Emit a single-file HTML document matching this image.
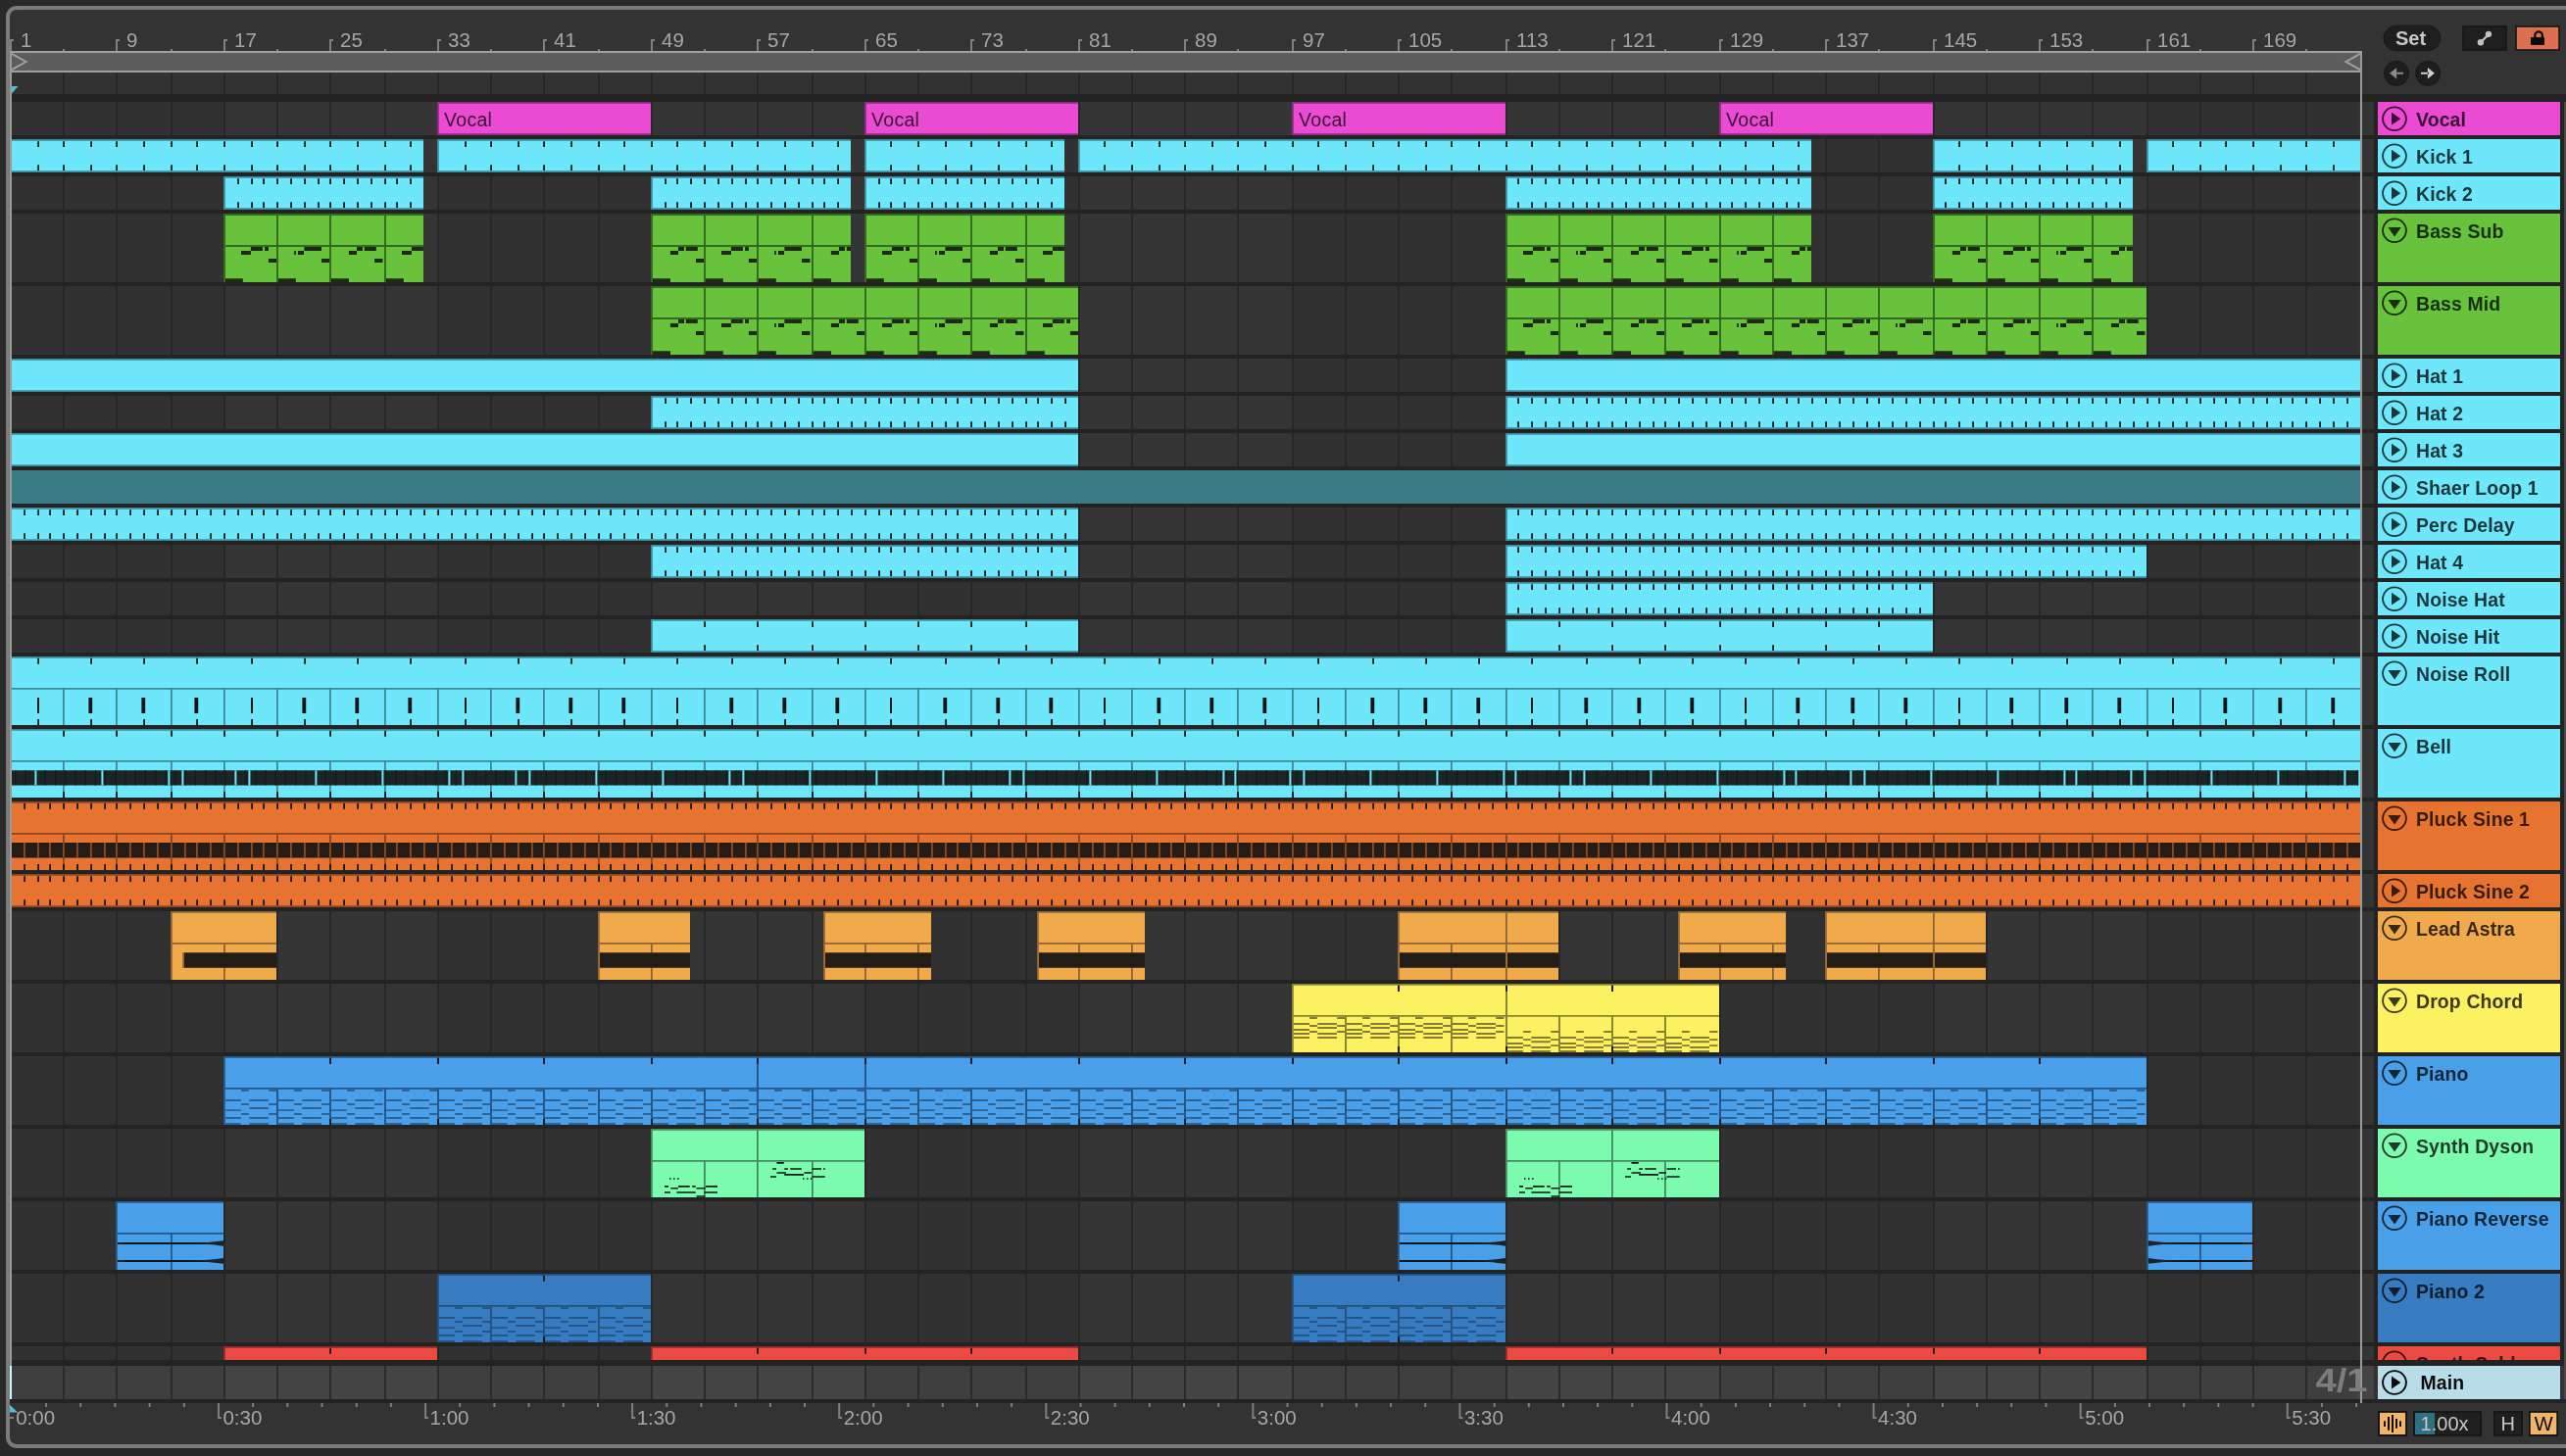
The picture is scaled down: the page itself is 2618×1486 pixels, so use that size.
<!DOCTYPE html>
<html><head><meta charset="utf-8"><style>
html,body{margin:0;padding:0;background:#292929;width:2618px;height:1486px;overflow:hidden;}
svg{display:block;will-change:transform;}

text{font-family:"Liberation Sans",sans-serif;}
.rn{font-size:20.5px;fill:#a6a6a6;}
.cn{font-size:19.5px;fill:#3a1034;letter-spacing:0.3px;}
.hn{font-size:19.4px;font-weight:bold;letter-spacing:0.15px;}
.sig{font-size:32.5px;font-weight:bold;fill:#7d7d7d;}
.btn{font-size:20px;font-weight:bold;fill:#c8c8c8;}
.ctl{font-size:20px;fill:#c8c8c8;}

</style></head><body>
<svg width="2618" height="1486" viewBox="0 0 2618 1486">
<rect x="0" y="0" width="2618" height="1486" fill="#292929"/>
<rect x="6" y="6" width="2700" height="1472" rx="11" ry="11" fill="#7b7b7b"/>
<rect x="10" y="10" width="2700" height="1464" rx="7" ry="7" fill="#333333"/>
<path fill="#808080" d="M10 40h2v12h-2zM10 40h4v2h-4zM64 50h2v2h-2zM118 40h2v12h-2zM118 40h4v2h-4zM174 50h2v2h-2zM228 40h2v12h-2zM228 40h4v2h-4zM282 50h2v2h-2zM336 40h2v12h-2zM336 40h4v2h-4zM392 50h2v2h-2zM446 40h2v12h-2zM446 40h4v2h-4zM500 50h2v2h-2zM554 40h2v12h-2zM554 40h4v2h-4zM610 50h2v2h-2zM664 40h2v12h-2zM664 40h4v2h-4zM718 50h2v2h-2zM772 40h2v12h-2zM772 40h4v2h-4zM828 50h2v2h-2zM882 40h2v12h-2zM882 40h4v2h-4zM936 50h2v2h-2zM990 40h2v12h-2zM990 40h4v2h-4zM1046 50h2v2h-2zM1100 40h2v12h-2zM1100 40h4v2h-4zM1154 50h2v2h-2zM1208 40h2v12h-2zM1208 40h4v2h-4zM1262 50h2v2h-2zM1318 40h2v12h-2zM1318 40h4v2h-4zM1372 50h2v2h-2zM1426 40h2v12h-2zM1426 40h4v2h-4zM1480 50h2v2h-2zM1536 40h2v12h-2zM1536 40h4v2h-4zM1590 50h2v2h-2zM1644 40h2v12h-2zM1644 40h4v2h-4zM1698 50h2v2h-2zM1754 40h2v12h-2zM1754 40h4v2h-4zM1808 50h2v2h-2zM1862 40h2v12h-2zM1862 40h4v2h-4zM1916 50h2v2h-2zM1972 40h2v12h-2zM1972 40h4v2h-4zM2026 50h2v2h-2zM2080 40h2v12h-2zM2080 40h4v2h-4zM2134 50h2v2h-2zM2190 40h2v12h-2zM2190 40h4v2h-4zM2244 50h2v2h-2zM2298 40h2v12h-2zM2298 40h4v2h-4zM2352 50h2v2h-2z"/>
<text x="21" y="48.4" class="rn">1</text>
<text x="129" y="48.4" class="rn">9</text>
<text x="239" y="48.4" class="rn">17</text>
<text x="347" y="48.4" class="rn">25</text>
<text x="457" y="48.4" class="rn">33</text>
<text x="565" y="48.4" class="rn">41</text>
<text x="675" y="48.4" class="rn">49</text>
<text x="783" y="48.4" class="rn">57</text>
<text x="893" y="48.4" class="rn">65</text>
<text x="1001" y="48.4" class="rn">73</text>
<text x="1111" y="48.4" class="rn">81</text>
<text x="1219" y="48.4" class="rn">89</text>
<text x="1329" y="48.4" class="rn">97</text>
<text x="1437" y="48.4" class="rn">105</text>
<text x="1547" y="48.4" class="rn">113</text>
<text x="1655" y="48.4" class="rn">121</text>
<text x="1765" y="48.4" class="rn">129</text>
<text x="1873" y="48.4" class="rn">137</text>
<text x="1983" y="48.4" class="rn">145</text>
<text x="2091" y="48.4" class="rn">153</text>
<text x="2201" y="48.4" class="rn">161</text>
<text x="2309" y="48.4" class="rn">169</text>
<path fill="#5d5d5d" d="M10 52h2400v22h-2400z"/>
<path fill="#a0a0a0" d="M10 52h2400v2h-2400zM10 72h2400v2h-2400z"/>
<path d="M12 54.8L26.5 63L12 71.2" fill="none" stroke="#a0a0a0" stroke-width="2"/>
<path d="M2408 54.8L2393.5 63L2408 71.2" fill="none" stroke="#a0a0a0" stroke-width="2"/>
<path fill="#323232" d="M12 74h2398v22h-2398z"/>
<path fill="#262626" d="M64 74h2v22h-2zM118 74h2v22h-2zM174 74h2v22h-2zM228 74h2v22h-2zM282 74h2v22h-2zM336 74h2v22h-2zM392 74h2v22h-2zM446 74h2v22h-2zM500 74h2v22h-2zM554 74h2v22h-2zM610 74h2v22h-2zM664 74h2v22h-2zM718 74h2v22h-2zM772 74h2v22h-2zM828 74h2v22h-2zM882 74h2v22h-2zM936 74h2v22h-2zM990 74h2v22h-2zM1046 74h2v22h-2zM1100 74h2v22h-2zM1154 74h2v22h-2zM1208 74h2v22h-2zM1262 74h2v22h-2zM1318 74h2v22h-2zM1372 74h2v22h-2zM1426 74h2v22h-2zM1480 74h2v22h-2zM1536 74h2v22h-2zM1590 74h2v22h-2zM1644 74h2v22h-2zM1698 74h2v22h-2zM1754 74h2v22h-2zM1808 74h2v22h-2zM1862 74h2v22h-2zM1916 74h2v22h-2zM1972 74h2v22h-2zM2026 74h2v22h-2zM2080 74h2v22h-2zM2134 74h2v22h-2zM2190 74h2v22h-2zM2244 74h2v22h-2zM2298 74h2v22h-2zM2352 74h2v22h-2z"/>
<path d="M12 88H18.5L12 95.5z" fill="#4cc0d8"/>
<path fill="#232323" d="M10 96h2608v8h-2608zM10 104h2608v1284h-2608z"/>
<path fill="#313131" d="M12 104h216v34h-216zM446 104h218v34h-218zM882 104h218v34h-218zM1318 104h218v34h-218zM1754 104h218v34h-218zM2190 104h216v34h-216zM12 142h216v34h-216zM446 142h218v34h-218zM882 142h218v34h-218zM1318 142h218v34h-218zM1754 142h218v34h-218zM2190 142h216v34h-216zM12 180h216v34h-216zM446 180h218v34h-218zM882 180h218v34h-218zM1318 180h218v34h-218zM1754 180h218v34h-218zM2190 180h216v34h-216zM12 218h216v70h-216zM446 218h218v70h-218zM882 218h218v70h-218zM1318 218h218v70h-218zM1754 218h218v70h-218zM2190 218h216v70h-216zM12 292h216v70h-216zM446 292h218v70h-218zM882 292h218v70h-218zM1318 292h218v70h-218zM1754 292h218v70h-218zM2190 292h216v70h-216zM12 366h216v34h-216zM446 366h218v34h-218zM882 366h218v34h-218zM1318 366h218v34h-218zM1754 366h218v34h-218zM2190 366h216v34h-216zM12 404h216v34h-216zM446 404h218v34h-218zM882 404h218v34h-218zM1318 404h218v34h-218zM1754 404h218v34h-218zM2190 404h216v34h-216zM12 442h216v34h-216zM446 442h218v34h-218zM882 442h218v34h-218zM1318 442h218v34h-218zM1754 442h218v34h-218zM2190 442h216v34h-216zM12 480h216v34h-216zM446 480h218v34h-218zM882 480h218v34h-218zM1318 480h218v34h-218zM1754 480h218v34h-218zM2190 480h216v34h-216zM12 518h216v34h-216zM446 518h218v34h-218zM882 518h218v34h-218zM1318 518h218v34h-218zM1754 518h218v34h-218zM2190 518h216v34h-216zM12 556h216v34h-216zM446 556h218v34h-218zM882 556h218v34h-218zM1318 556h218v34h-218zM1754 556h218v34h-218zM2190 556h216v34h-216zM12 594h216v34h-216zM446 594h218v34h-218zM882 594h218v34h-218zM1318 594h218v34h-218zM1754 594h218v34h-218zM2190 594h216v34h-216zM12 632h216v34h-216zM446 632h218v34h-218zM882 632h218v34h-218zM1318 632h218v34h-218zM1754 632h218v34h-218zM2190 632h216v34h-216zM12 670h216v70h-216zM446 670h218v70h-218zM882 670h218v70h-218zM1318 670h218v70h-218zM1754 670h218v70h-218zM2190 670h216v70h-216zM12 744h216v70h-216zM446 744h218v70h-218zM882 744h218v70h-218zM1318 744h218v70h-218zM1754 744h218v70h-218zM2190 744h216v70h-216zM12 818h216v70h-216zM446 818h218v70h-218zM882 818h218v70h-218zM1318 818h218v70h-218zM1754 818h218v70h-218zM2190 818h216v70h-216zM12 892h216v34h-216zM446 892h218v34h-218zM882 892h218v34h-218zM1318 892h218v34h-218zM1754 892h218v34h-218zM2190 892h216v34h-216zM12 930h216v70h-216zM446 930h218v70h-218zM882 930h218v70h-218zM1318 930h218v70h-218zM1754 930h218v70h-218zM2190 930h216v70h-216zM12 1004h216v70h-216zM446 1004h218v70h-218zM882 1004h218v70h-218zM1318 1004h218v70h-218zM1754 1004h218v70h-218zM2190 1004h216v70h-216zM12 1078h216v70h-216zM446 1078h218v70h-218zM882 1078h218v70h-218zM1318 1078h218v70h-218zM1754 1078h218v70h-218zM2190 1078h216v70h-216zM12 1152h216v70h-216zM446 1152h218v70h-218zM882 1152h218v70h-218zM1318 1152h218v70h-218zM1754 1152h218v70h-218zM2190 1152h216v70h-216zM12 1226h216v70h-216zM446 1226h218v70h-218zM882 1226h218v70h-218zM1318 1226h218v70h-218zM1754 1226h218v70h-218zM2190 1226h216v70h-216zM12 1300h216v70h-216zM446 1300h218v70h-218zM882 1300h218v70h-218zM1318 1300h218v70h-218zM1754 1300h218v70h-218zM2190 1300h216v70h-216zM12 1374h216v14h-216zM446 1374h218v14h-218zM882 1374h218v14h-218zM1318 1374h218v14h-218zM1754 1374h218v14h-218zM2190 1374h216v14h-216z"/>
<path fill="#353535" d="M228 104h218v34h-218zM664 104h218v34h-218zM1100 104h218v34h-218zM1536 104h218v34h-218zM1972 104h218v34h-218zM2406 104h16v34h-16zM228 142h218v34h-218zM664 142h218v34h-218zM1100 142h218v34h-218zM1536 142h218v34h-218zM1972 142h218v34h-218zM2406 142h16v34h-16zM228 180h218v34h-218zM664 180h218v34h-218zM1100 180h218v34h-218zM1536 180h218v34h-218zM1972 180h218v34h-218zM2406 180h16v34h-16zM228 218h218v70h-218zM664 218h218v70h-218zM1100 218h218v70h-218zM1536 218h218v70h-218zM1972 218h218v70h-218zM2406 218h16v70h-16zM228 292h218v70h-218zM664 292h218v70h-218zM1100 292h218v70h-218zM1536 292h218v70h-218zM1972 292h218v70h-218zM2406 292h16v70h-16zM228 366h218v34h-218zM664 366h218v34h-218zM1100 366h218v34h-218zM1536 366h218v34h-218zM1972 366h218v34h-218zM2406 366h16v34h-16zM228 404h218v34h-218zM664 404h218v34h-218zM1100 404h218v34h-218zM1536 404h218v34h-218zM1972 404h218v34h-218zM2406 404h16v34h-16zM228 442h218v34h-218zM664 442h218v34h-218zM1100 442h218v34h-218zM1536 442h218v34h-218zM1972 442h218v34h-218zM2406 442h16v34h-16zM228 480h218v34h-218zM664 480h218v34h-218zM1100 480h218v34h-218zM1536 480h218v34h-218zM1972 480h218v34h-218zM2406 480h16v34h-16zM228 518h218v34h-218zM664 518h218v34h-218zM1100 518h218v34h-218zM1536 518h218v34h-218zM1972 518h218v34h-218zM2406 518h16v34h-16zM228 556h218v34h-218zM664 556h218v34h-218zM1100 556h218v34h-218zM1536 556h218v34h-218zM1972 556h218v34h-218zM2406 556h16v34h-16zM228 594h218v34h-218zM664 594h218v34h-218zM1100 594h218v34h-218zM1536 594h218v34h-218zM1972 594h218v34h-218zM2406 594h16v34h-16zM228 632h218v34h-218zM664 632h218v34h-218zM1100 632h218v34h-218zM1536 632h218v34h-218zM1972 632h218v34h-218zM2406 632h16v34h-16zM228 670h218v70h-218zM664 670h218v70h-218zM1100 670h218v70h-218zM1536 670h218v70h-218zM1972 670h218v70h-218zM2406 670h16v70h-16zM228 744h218v70h-218zM664 744h218v70h-218zM1100 744h218v70h-218zM1536 744h218v70h-218zM1972 744h218v70h-218zM2406 744h16v70h-16zM228 818h218v70h-218zM664 818h218v70h-218zM1100 818h218v70h-218zM1536 818h218v70h-218zM1972 818h218v70h-218zM2406 818h16v70h-16zM228 892h218v34h-218zM664 892h218v34h-218zM1100 892h218v34h-218zM1536 892h218v34h-218zM1972 892h218v34h-218zM2406 892h16v34h-16zM228 930h218v70h-218zM664 930h218v70h-218zM1100 930h218v70h-218zM1536 930h218v70h-218zM1972 930h218v70h-218zM2406 930h16v70h-16zM228 1004h218v70h-218zM664 1004h218v70h-218zM1100 1004h218v70h-218zM1536 1004h218v70h-218zM1972 1004h218v70h-218zM2406 1004h16v70h-16zM228 1078h218v70h-218zM664 1078h218v70h-218zM1100 1078h218v70h-218zM1536 1078h218v70h-218zM1972 1078h218v70h-218zM2406 1078h16v70h-16zM228 1152h218v70h-218zM664 1152h218v70h-218zM1100 1152h218v70h-218zM1536 1152h218v70h-218zM1972 1152h218v70h-218zM2406 1152h16v70h-16zM228 1226h218v70h-218zM664 1226h218v70h-218zM1100 1226h218v70h-218zM1536 1226h218v70h-218zM1972 1226h218v70h-218zM2406 1226h16v70h-16zM228 1300h218v70h-218zM664 1300h218v70h-218zM1100 1300h218v70h-218zM1536 1300h218v70h-218zM1972 1300h218v70h-218zM2406 1300h16v70h-16zM228 1374h218v14h-218zM664 1374h218v14h-218zM1100 1374h218v14h-218zM1536 1374h218v14h-218zM1972 1374h218v14h-218zM2406 1374h16v14h-16z"/>
<path fill="#262626" d="M64 104h2v34h-2zM118 104h2v34h-2zM174 104h2v34h-2zM228 104h2v34h-2zM282 104h2v34h-2zM336 104h2v34h-2zM392 104h2v34h-2zM446 104h2v34h-2zM500 104h2v34h-2zM554 104h2v34h-2zM610 104h2v34h-2zM664 104h2v34h-2zM718 104h2v34h-2zM772 104h2v34h-2zM828 104h2v34h-2zM882 104h2v34h-2zM936 104h2v34h-2zM990 104h2v34h-2zM1046 104h2v34h-2zM1100 104h2v34h-2zM1154 104h2v34h-2zM1208 104h2v34h-2zM1262 104h2v34h-2zM1318 104h2v34h-2zM1372 104h2v34h-2zM1426 104h2v34h-2zM1480 104h2v34h-2zM1536 104h2v34h-2zM1590 104h2v34h-2zM1644 104h2v34h-2zM1698 104h2v34h-2zM1754 104h2v34h-2zM1808 104h2v34h-2zM1862 104h2v34h-2zM1916 104h2v34h-2zM1972 104h2v34h-2zM2026 104h2v34h-2zM2080 104h2v34h-2zM2134 104h2v34h-2zM2190 104h2v34h-2zM2244 104h2v34h-2zM2298 104h2v34h-2zM2352 104h2v34h-2zM64 142h2v34h-2zM118 142h2v34h-2zM174 142h2v34h-2zM228 142h2v34h-2zM282 142h2v34h-2zM336 142h2v34h-2zM392 142h2v34h-2zM446 142h2v34h-2zM500 142h2v34h-2zM554 142h2v34h-2zM610 142h2v34h-2zM664 142h2v34h-2zM718 142h2v34h-2zM772 142h2v34h-2zM828 142h2v34h-2zM882 142h2v34h-2zM936 142h2v34h-2zM990 142h2v34h-2zM1046 142h2v34h-2zM1100 142h2v34h-2zM1154 142h2v34h-2zM1208 142h2v34h-2zM1262 142h2v34h-2zM1318 142h2v34h-2zM1372 142h2v34h-2zM1426 142h2v34h-2zM1480 142h2v34h-2zM1536 142h2v34h-2zM1590 142h2v34h-2zM1644 142h2v34h-2zM1698 142h2v34h-2zM1754 142h2v34h-2zM1808 142h2v34h-2zM1862 142h2v34h-2zM1916 142h2v34h-2zM1972 142h2v34h-2zM2026 142h2v34h-2zM2080 142h2v34h-2zM2134 142h2v34h-2zM2190 142h2v34h-2zM2244 142h2v34h-2zM2298 142h2v34h-2zM2352 142h2v34h-2zM64 180h2v34h-2zM118 180h2v34h-2zM174 180h2v34h-2zM228 180h2v34h-2zM282 180h2v34h-2zM336 180h2v34h-2zM392 180h2v34h-2zM446 180h2v34h-2zM500 180h2v34h-2zM554 180h2v34h-2zM610 180h2v34h-2zM664 180h2v34h-2zM718 180h2v34h-2zM772 180h2v34h-2zM828 180h2v34h-2zM882 180h2v34h-2zM936 180h2v34h-2zM990 180h2v34h-2zM1046 180h2v34h-2zM1100 180h2v34h-2zM1154 180h2v34h-2zM1208 180h2v34h-2zM1262 180h2v34h-2zM1318 180h2v34h-2zM1372 180h2v34h-2zM1426 180h2v34h-2zM1480 180h2v34h-2zM1536 180h2v34h-2zM1590 180h2v34h-2zM1644 180h2v34h-2zM1698 180h2v34h-2zM1754 180h2v34h-2zM1808 180h2v34h-2zM1862 180h2v34h-2zM1916 180h2v34h-2zM1972 180h2v34h-2zM2026 180h2v34h-2zM2080 180h2v34h-2zM2134 180h2v34h-2zM2190 180h2v34h-2zM2244 180h2v34h-2zM2298 180h2v34h-2zM2352 180h2v34h-2zM64 218h2v70h-2zM118 218h2v70h-2zM174 218h2v70h-2zM228 218h2v70h-2zM282 218h2v70h-2zM336 218h2v70h-2zM392 218h2v70h-2zM446 218h2v70h-2zM500 218h2v70h-2zM554 218h2v70h-2zM610 218h2v70h-2zM664 218h2v70h-2zM718 218h2v70h-2zM772 218h2v70h-2zM828 218h2v70h-2zM882 218h2v70h-2zM936 218h2v70h-2zM990 218h2v70h-2zM1046 218h2v70h-2zM1100 218h2v70h-2zM1154 218h2v70h-2zM1208 218h2v70h-2zM1262 218h2v70h-2zM1318 218h2v70h-2zM1372 218h2v70h-2zM1426 218h2v70h-2zM1480 218h2v70h-2zM1536 218h2v70h-2zM1590 218h2v70h-2zM1644 218h2v70h-2zM1698 218h2v70h-2zM1754 218h2v70h-2zM1808 218h2v70h-2zM1862 218h2v70h-2zM1916 218h2v70h-2zM1972 218h2v70h-2zM2026 218h2v70h-2zM2080 218h2v70h-2zM2134 218h2v70h-2zM2190 218h2v70h-2zM2244 218h2v70h-2zM2298 218h2v70h-2zM2352 218h2v70h-2zM64 292h2v70h-2zM118 292h2v70h-2zM174 292h2v70h-2zM228 292h2v70h-2zM282 292h2v70h-2zM336 292h2v70h-2zM392 292h2v70h-2zM446 292h2v70h-2zM500 292h2v70h-2zM554 292h2v70h-2zM610 292h2v70h-2zM664 292h2v70h-2zM718 292h2v70h-2zM772 292h2v70h-2zM828 292h2v70h-2zM882 292h2v70h-2zM936 292h2v70h-2zM990 292h2v70h-2zM1046 292h2v70h-2zM1100 292h2v70h-2zM1154 292h2v70h-2zM1208 292h2v70h-2zM1262 292h2v70h-2zM1318 292h2v70h-2zM1372 292h2v70h-2zM1426 292h2v70h-2zM1480 292h2v70h-2zM1536 292h2v70h-2zM1590 292h2v70h-2zM1644 292h2v70h-2zM1698 292h2v70h-2zM1754 292h2v70h-2zM1808 292h2v70h-2zM1862 292h2v70h-2zM1916 292h2v70h-2zM1972 292h2v70h-2zM2026 292h2v70h-2zM2080 292h2v70h-2zM2134 292h2v70h-2zM2190 292h2v70h-2zM2244 292h2v70h-2zM2298 292h2v70h-2zM2352 292h2v70h-2zM64 366h2v34h-2zM118 366h2v34h-2zM174 366h2v34h-2zM228 366h2v34h-2zM282 366h2v34h-2zM336 366h2v34h-2zM392 366h2v34h-2zM446 366h2v34h-2zM500 366h2v34h-2zM554 366h2v34h-2zM610 366h2v34h-2zM664 366h2v34h-2zM718 366h2v34h-2zM772 366h2v34h-2zM828 366h2v34h-2zM882 366h2v34h-2zM936 366h2v34h-2zM990 366h2v34h-2zM1046 366h2v34h-2zM1100 366h2v34h-2zM1154 366h2v34h-2zM1208 366h2v34h-2zM1262 366h2v34h-2zM1318 366h2v34h-2zM1372 366h2v34h-2zM1426 366h2v34h-2zM1480 366h2v34h-2zM1536 366h2v34h-2zM1590 366h2v34h-2zM1644 366h2v34h-2zM1698 366h2v34h-2zM1754 366h2v34h-2zM1808 366h2v34h-2zM1862 366h2v34h-2zM1916 366h2v34h-2zM1972 366h2v34h-2zM2026 366h2v34h-2zM2080 366h2v34h-2zM2134 366h2v34h-2zM2190 366h2v34h-2zM2244 366h2v34h-2zM2298 366h2v34h-2zM2352 366h2v34h-2zM64 404h2v34h-2zM118 404h2v34h-2zM174 404h2v34h-2zM228 404h2v34h-2zM282 404h2v34h-2zM336 404h2v34h-2zM392 404h2v34h-2zM446 404h2v34h-2zM500 404h2v34h-2zM554 404h2v34h-2zM610 404h2v34h-2zM664 404h2v34h-2zM718 404h2v34h-2zM772 404h2v34h-2zM828 404h2v34h-2zM882 404h2v34h-2zM936 404h2v34h-2zM990 404h2v34h-2zM1046 404h2v34h-2zM1100 404h2v34h-2zM1154 404h2v34h-2zM1208 404h2v34h-2zM1262 404h2v34h-2zM1318 404h2v34h-2zM1372 404h2v34h-2zM1426 404h2v34h-2zM1480 404h2v34h-2zM1536 404h2v34h-2zM1590 404h2v34h-2zM1644 404h2v34h-2zM1698 404h2v34h-2zM1754 404h2v34h-2zM1808 404h2v34h-2zM1862 404h2v34h-2zM1916 404h2v34h-2zM1972 404h2v34h-2zM2026 404h2v34h-2zM2080 404h2v34h-2zM2134 404h2v34h-2zM2190 404h2v34h-2zM2244 404h2v34h-2zM2298 404h2v34h-2zM2352 404h2v34h-2zM64 442h2v34h-2zM118 442h2v34h-2zM174 442h2v34h-2zM228 442h2v34h-2zM282 442h2v34h-2zM336 442h2v34h-2zM392 442h2v34h-2zM446 442h2v34h-2zM500 442h2v34h-2zM554 442h2v34h-2zM610 442h2v34h-2zM664 442h2v34h-2zM718 442h2v34h-2zM772 442h2v34h-2zM828 442h2v34h-2zM882 442h2v34h-2zM936 442h2v34h-2zM990 442h2v34h-2zM1046 442h2v34h-2zM1100 442h2v34h-2zM1154 442h2v34h-2zM1208 442h2v34h-2zM1262 442h2v34h-2zM1318 442h2v34h-2zM1372 442h2v34h-2zM1426 442h2v34h-2zM1480 442h2v34h-2zM1536 442h2v34h-2zM1590 442h2v34h-2zM1644 442h2v34h-2zM1698 442h2v34h-2zM1754 442h2v34h-2zM1808 442h2v34h-2zM1862 442h2v34h-2zM1916 442h2v34h-2zM1972 442h2v34h-2zM2026 442h2v34h-2zM2080 442h2v34h-2zM2134 442h2v34h-2zM2190 442h2v34h-2zM2244 442h2v34h-2zM2298 442h2v34h-2zM2352 442h2v34h-2zM64 480h2v34h-2zM118 480h2v34h-2zM174 480h2v34h-2zM228 480h2v34h-2zM282 480h2v34h-2zM336 480h2v34h-2zM392 480h2v34h-2zM446 480h2v34h-2zM500 480h2v34h-2zM554 480h2v34h-2zM610 480h2v34h-2zM664 480h2v34h-2zM718 480h2v34h-2zM772 480h2v34h-2zM828 480h2v34h-2zM882 480h2v34h-2zM936 480h2v34h-2zM990 480h2v34h-2zM1046 480h2v34h-2zM1100 480h2v34h-2zM1154 480h2v34h-2zM1208 480h2v34h-2zM1262 480h2v34h-2zM1318 480h2v34h-2zM1372 480h2v34h-2zM1426 480h2v34h-2zM1480 480h2v34h-2zM1536 480h2v34h-2zM1590 480h2v34h-2zM1644 480h2v34h-2zM1698 480h2v34h-2zM1754 480h2v34h-2zM1808 480h2v34h-2zM1862 480h2v34h-2zM1916 480h2v34h-2zM1972 480h2v34h-2zM2026 480h2v34h-2zM2080 480h2v34h-2zM2134 480h2v34h-2zM2190 480h2v34h-2zM2244 480h2v34h-2zM2298 480h2v34h-2zM2352 480h2v34h-2zM64 518h2v34h-2zM118 518h2v34h-2zM174 518h2v34h-2zM228 518h2v34h-2zM282 518h2v34h-2zM336 518h2v34h-2zM392 518h2v34h-2zM446 518h2v34h-2zM500 518h2v34h-2zM554 518h2v34h-2zM610 518h2v34h-2zM664 518h2v34h-2zM718 518h2v34h-2zM772 518h2v34h-2zM828 518h2v34h-2zM882 518h2v34h-2zM936 518h2v34h-2zM990 518h2v34h-2zM1046 518h2v34h-2zM1100 518h2v34h-2zM1154 518h2v34h-2zM1208 518h2v34h-2zM1262 518h2v34h-2zM1318 518h2v34h-2zM1372 518h2v34h-2zM1426 518h2v34h-2zM1480 518h2v34h-2zM1536 518h2v34h-2zM1590 518h2v34h-2zM1644 518h2v34h-2zM1698 518h2v34h-2zM1754 518h2v34h-2zM1808 518h2v34h-2zM1862 518h2v34h-2zM1916 518h2v34h-2zM1972 518h2v34h-2zM2026 518h2v34h-2zM2080 518h2v34h-2zM2134 518h2v34h-2zM2190 518h2v34h-2zM2244 518h2v34h-2zM2298 518h2v34h-2zM2352 518h2v34h-2zM64 556h2v34h-2zM118 556h2v34h-2zM174 556h2v34h-2zM228 556h2v34h-2zM282 556h2v34h-2zM336 556h2v34h-2zM392 556h2v34h-2zM446 556h2v34h-2zM500 556h2v34h-2zM554 556h2v34h-2zM610 556h2v34h-2zM664 556h2v34h-2zM718 556h2v34h-2zM772 556h2v34h-2zM828 556h2v34h-2zM882 556h2v34h-2zM936 556h2v34h-2zM990 556h2v34h-2zM1046 556h2v34h-2zM1100 556h2v34h-2zM1154 556h2v34h-2zM1208 556h2v34h-2zM1262 556h2v34h-2zM1318 556h2v34h-2zM1372 556h2v34h-2zM1426 556h2v34h-2zM1480 556h2v34h-2zM1536 556h2v34h-2zM1590 556h2v34h-2zM1644 556h2v34h-2zM1698 556h2v34h-2zM1754 556h2v34h-2zM1808 556h2v34h-2zM1862 556h2v34h-2zM1916 556h2v34h-2zM1972 556h2v34h-2zM2026 556h2v34h-2zM2080 556h2v34h-2zM2134 556h2v34h-2zM2190 556h2v34h-2zM2244 556h2v34h-2zM2298 556h2v34h-2zM2352 556h2v34h-2zM64 594h2v34h-2zM118 594h2v34h-2zM174 594h2v34h-2zM228 594h2v34h-2zM282 594h2v34h-2zM336 594h2v34h-2zM392 594h2v34h-2zM446 594h2v34h-2zM500 594h2v34h-2zM554 594h2v34h-2zM610 594h2v34h-2zM664 594h2v34h-2zM718 594h2v34h-2zM772 594h2v34h-2zM828 594h2v34h-2zM882 594h2v34h-2zM936 594h2v34h-2zM990 594h2v34h-2zM1046 594h2v34h-2zM1100 594h2v34h-2zM1154 594h2v34h-2zM1208 594h2v34h-2zM1262 594h2v34h-2zM1318 594h2v34h-2zM1372 594h2v34h-2zM1426 594h2v34h-2zM1480 594h2v34h-2zM1536 594h2v34h-2zM1590 594h2v34h-2zM1644 594h2v34h-2zM1698 594h2v34h-2zM1754 594h2v34h-2zM1808 594h2v34h-2zM1862 594h2v34h-2zM1916 594h2v34h-2zM1972 594h2v34h-2zM2026 594h2v34h-2zM2080 594h2v34h-2zM2134 594h2v34h-2zM2190 594h2v34h-2zM2244 594h2v34h-2zM2298 594h2v34h-2zM2352 594h2v34h-2zM64 632h2v34h-2zM118 632h2v34h-2zM174 632h2v34h-2zM228 632h2v34h-2zM282 632h2v34h-2zM336 632h2v34h-2zM392 632h2v34h-2zM446 632h2v34h-2zM500 632h2v34h-2zM554 632h2v34h-2zM610 632h2v34h-2zM664 632h2v34h-2zM718 632h2v34h-2zM772 632h2v34h-2zM828 632h2v34h-2zM882 632h2v34h-2zM936 632h2v34h-2zM990 632h2v34h-2zM1046 632h2v34h-2zM1100 632h2v34h-2zM1154 632h2v34h-2zM1208 632h2v34h-2zM1262 632h2v34h-2zM1318 632h2v34h-2zM1372 632h2v34h-2zM1426 632h2v34h-2zM1480 632h2v34h-2zM1536 632h2v34h-2zM1590 632h2v34h-2zM1644 632h2v34h-2zM1698 632h2v34h-2zM1754 632h2v34h-2zM1808 632h2v34h-2zM1862 632h2v34h-2zM1916 632h2v34h-2zM1972 632h2v34h-2zM2026 632h2v34h-2zM2080 632h2v34h-2zM2134 632h2v34h-2zM2190 632h2v34h-2zM2244 632h2v34h-2zM2298 632h2v34h-2zM2352 632h2v34h-2zM64 670h2v70h-2zM118 670h2v70h-2zM174 670h2v70h-2zM228 670h2v70h-2zM282 670h2v70h-2zM336 670h2v70h-2zM392 670h2v70h-2zM446 670h2v70h-2zM500 670h2v70h-2zM554 670h2v70h-2zM610 670h2v70h-2zM664 670h2v70h-2zM718 670h2v70h-2zM772 670h2v70h-2zM828 670h2v70h-2zM882 670h2v70h-2zM936 670h2v70h-2zM990 670h2v70h-2zM1046 670h2v70h-2zM1100 670h2v70h-2zM1154 670h2v70h-2zM1208 670h2v70h-2zM1262 670h2v70h-2zM1318 670h2v70h-2zM1372 670h2v70h-2zM1426 670h2v70h-2zM1480 670h2v70h-2zM1536 670h2v70h-2zM1590 670h2v70h-2zM1644 670h2v70h-2zM1698 670h2v70h-2zM1754 670h2v70h-2zM1808 670h2v70h-2zM1862 670h2v70h-2zM1916 670h2v70h-2zM1972 670h2v70h-2zM2026 670h2v70h-2zM2080 670h2v70h-2zM2134 670h2v70h-2zM2190 670h2v70h-2zM2244 670h2v70h-2zM2298 670h2v70h-2zM2352 670h2v70h-2zM64 744h2v70h-2zM118 744h2v70h-2zM174 744h2v70h-2zM228 744h2v70h-2zM282 744h2v70h-2zM336 744h2v70h-2zM392 744h2v70h-2zM446 744h2v70h-2zM500 744h2v70h-2zM554 744h2v70h-2zM610 744h2v70h-2zM664 744h2v70h-2zM718 744h2v70h-2zM772 744h2v70h-2zM828 744h2v70h-2zM882 744h2v70h-2zM936 744h2v70h-2zM990 744h2v70h-2zM1046 744h2v70h-2zM1100 744h2v70h-2zM1154 744h2v70h-2zM1208 744h2v70h-2zM1262 744h2v70h-2zM1318 744h2v70h-2zM1372 744h2v70h-2zM1426 744h2v70h-2zM1480 744h2v70h-2zM1536 744h2v70h-2zM1590 744h2v70h-2zM1644 744h2v70h-2zM1698 744h2v70h-2zM1754 744h2v70h-2zM1808 744h2v70h-2zM1862 744h2v70h-2zM1916 744h2v70h-2zM1972 744h2v70h-2zM2026 744h2v70h-2zM2080 744h2v70h-2zM2134 744h2v70h-2zM2190 744h2v70h-2zM2244 744h2v70h-2zM2298 744h2v70h-2zM2352 744h2v70h-2zM64 818h2v70h-2zM118 818h2v70h-2zM174 818h2v70h-2zM228 818h2v70h-2zM282 818h2v70h-2zM336 818h2v70h-2zM392 818h2v70h-2zM446 818h2v70h-2zM500 818h2v70h-2zM554 818h2v70h-2zM610 818h2v70h-2zM664 818h2v70h-2zM718 818h2v70h-2zM772 818h2v70h-2zM828 818h2v70h-2zM882 818h2v70h-2zM936 818h2v70h-2zM990 818h2v70h-2zM1046 818h2v70h-2zM1100 818h2v70h-2zM1154 818h2v70h-2zM1208 818h2v70h-2zM1262 818h2v70h-2zM1318 818h2v70h-2zM1372 818h2v70h-2zM1426 818h2v70h-2zM1480 818h2v70h-2zM1536 818h2v70h-2zM1590 818h2v70h-2zM1644 818h2v70h-2zM1698 818h2v70h-2zM1754 818h2v70h-2zM1808 818h2v70h-2zM1862 818h2v70h-2zM1916 818h2v70h-2zM1972 818h2v70h-2zM2026 818h2v70h-2zM2080 818h2v70h-2zM2134 818h2v70h-2zM2190 818h2v70h-2zM2244 818h2v70h-2zM2298 818h2v70h-2zM2352 818h2v70h-2zM64 892h2v34h-2zM118 892h2v34h-2zM174 892h2v34h-2zM228 892h2v34h-2zM282 892h2v34h-2zM336 892h2v34h-2zM392 892h2v34h-2zM446 892h2v34h-2zM500 892h2v34h-2zM554 892h2v34h-2zM610 892h2v34h-2zM664 892h2v34h-2zM718 892h2v34h-2zM772 892h2v34h-2zM828 892h2v34h-2zM882 892h2v34h-2zM936 892h2v34h-2zM990 892h2v34h-2zM1046 892h2v34h-2zM1100 892h2v34h-2zM1154 892h2v34h-2zM1208 892h2v34h-2zM1262 892h2v34h-2zM1318 892h2v34h-2zM1372 892h2v34h-2zM1426 892h2v34h-2zM1480 892h2v34h-2zM1536 892h2v34h-2zM1590 892h2v34h-2zM1644 892h2v34h-2zM1698 892h2v34h-2zM1754 892h2v34h-2zM1808 892h2v34h-2zM1862 892h2v34h-2zM1916 892h2v34h-2zM1972 892h2v34h-2zM2026 892h2v34h-2zM2080 892h2v34h-2zM2134 892h2v34h-2zM2190 892h2v34h-2zM2244 892h2v34h-2zM2298 892h2v34h-2zM2352 892h2v34h-2zM64 930h2v70h-2zM118 930h2v70h-2zM174 930h2v70h-2zM228 930h2v70h-2zM282 930h2v70h-2zM336 930h2v70h-2zM392 930h2v70h-2zM446 930h2v70h-2zM500 930h2v70h-2zM554 930h2v70h-2zM610 930h2v70h-2zM664 930h2v70h-2zM718 930h2v70h-2zM772 930h2v70h-2zM828 930h2v70h-2zM882 930h2v70h-2zM936 930h2v70h-2zM990 930h2v70h-2zM1046 930h2v70h-2zM1100 930h2v70h-2zM1154 930h2v70h-2zM1208 930h2v70h-2zM1262 930h2v70h-2zM1318 930h2v70h-2zM1372 930h2v70h-2zM1426 930h2v70h-2zM1480 930h2v70h-2zM1536 930h2v70h-2zM1590 930h2v70h-2zM1644 930h2v70h-2zM1698 930h2v70h-2zM1754 930h2v70h-2zM1808 930h2v70h-2zM1862 930h2v70h-2zM1916 930h2v70h-2zM1972 930h2v70h-2zM2026 930h2v70h-2zM2080 930h2v70h-2zM2134 930h2v70h-2zM2190 930h2v70h-2zM2244 930h2v70h-2zM2298 930h2v70h-2zM2352 930h2v70h-2zM64 1004h2v70h-2zM118 1004h2v70h-2zM174 1004h2v70h-2zM228 1004h2v70h-2zM282 1004h2v70h-2zM336 1004h2v70h-2zM392 1004h2v70h-2zM446 1004h2v70h-2zM500 1004h2v70h-2zM554 1004h2v70h-2zM610 1004h2v70h-2zM664 1004h2v70h-2zM718 1004h2v70h-2zM772 1004h2v70h-2zM828 1004h2v70h-2zM882 1004h2v70h-2zM936 1004h2v70h-2zM990 1004h2v70h-2zM1046 1004h2v70h-2zM1100 1004h2v70h-2zM1154 1004h2v70h-2zM1208 1004h2v70h-2zM1262 1004h2v70h-2zM1318 1004h2v70h-2zM1372 1004h2v70h-2zM1426 1004h2v70h-2zM1480 1004h2v70h-2zM1536 1004h2v70h-2zM1590 1004h2v70h-2zM1644 1004h2v70h-2zM1698 1004h2v70h-2zM1754 1004h2v70h-2zM1808 1004h2v70h-2zM1862 1004h2v70h-2zM1916 1004h2v70h-2zM1972 1004h2v70h-2zM2026 1004h2v70h-2zM2080 1004h2v70h-2zM2134 1004h2v70h-2zM2190 1004h2v70h-2zM2244 1004h2v70h-2zM2298 1004h2v70h-2zM2352 1004h2v70h-2zM64 1078h2v70h-2zM118 1078h2v70h-2zM174 1078h2v70h-2zM228 1078h2v70h-2zM282 1078h2v70h-2zM336 1078h2v70h-2zM392 1078h2v70h-2zM446 1078h2v70h-2zM500 1078h2v70h-2zM554 1078h2v70h-2zM610 1078h2v70h-2zM664 1078h2v70h-2zM718 1078h2v70h-2zM772 1078h2v70h-2zM828 1078h2v70h-2zM882 1078h2v70h-2zM936 1078h2v70h-2zM990 1078h2v70h-2zM1046 1078h2v70h-2zM1100 1078h2v70h-2zM1154 1078h2v70h-2zM1208 1078h2v70h-2zM1262 1078h2v70h-2zM1318 1078h2v70h-2zM1372 1078h2v70h-2zM1426 1078h2v70h-2zM1480 1078h2v70h-2zM1536 1078h2v70h-2zM1590 1078h2v70h-2zM1644 1078h2v70h-2zM1698 1078h2v70h-2zM1754 1078h2v70h-2zM1808 1078h2v70h-2zM1862 1078h2v70h-2zM1916 1078h2v70h-2zM1972 1078h2v70h-2zM2026 1078h2v70h-2zM2080 1078h2v70h-2zM2134 1078h2v70h-2zM2190 1078h2v70h-2zM2244 1078h2v70h-2zM2298 1078h2v70h-2zM2352 1078h2v70h-2zM64 1152h2v70h-2zM118 1152h2v70h-2zM174 1152h2v70h-2zM228 1152h2v70h-2zM282 1152h2v70h-2zM336 1152h2v70h-2zM392 1152h2v70h-2zM446 1152h2v70h-2zM500 1152h2v70h-2zM554 1152h2v70h-2zM610 1152h2v70h-2zM664 1152h2v70h-2zM718 1152h2v70h-2zM772 1152h2v70h-2zM828 1152h2v70h-2zM882 1152h2v70h-2zM936 1152h2v70h-2zM990 1152h2v70h-2zM1046 1152h2v70h-2zM1100 1152h2v70h-2zM1154 1152h2v70h-2zM1208 1152h2v70h-2zM1262 1152h2v70h-2zM1318 1152h2v70h-2zM1372 1152h2v70h-2zM1426 1152h2v70h-2zM1480 1152h2v70h-2zM1536 1152h2v70h-2zM1590 1152h2v70h-2zM1644 1152h2v70h-2zM1698 1152h2v70h-2zM1754 1152h2v70h-2zM1808 1152h2v70h-2zM1862 1152h2v70h-2zM1916 1152h2v70h-2zM1972 1152h2v70h-2zM2026 1152h2v70h-2zM2080 1152h2v70h-2zM2134 1152h2v70h-2zM2190 1152h2v70h-2zM2244 1152h2v70h-2zM2298 1152h2v70h-2zM2352 1152h2v70h-2zM64 1226h2v70h-2zM118 1226h2v70h-2zM174 1226h2v70h-2zM228 1226h2v70h-2zM282 1226h2v70h-2zM336 1226h2v70h-2zM392 1226h2v70h-2zM446 1226h2v70h-2zM500 1226h2v70h-2zM554 1226h2v70h-2zM610 1226h2v70h-2zM664 1226h2v70h-2zM718 1226h2v70h-2zM772 1226h2v70h-2zM828 1226h2v70h-2zM882 1226h2v70h-2zM936 1226h2v70h-2zM990 1226h2v70h-2zM1046 1226h2v70h-2zM1100 1226h2v70h-2zM1154 1226h2v70h-2zM1208 1226h2v70h-2zM1262 1226h2v70h-2zM1318 1226h2v70h-2zM1372 1226h2v70h-2zM1426 1226h2v70h-2zM1480 1226h2v70h-2zM1536 1226h2v70h-2zM1590 1226h2v70h-2zM1644 1226h2v70h-2zM1698 1226h2v70h-2zM1754 1226h2v70h-2zM1808 1226h2v70h-2zM1862 1226h2v70h-2zM1916 1226h2v70h-2zM1972 1226h2v70h-2zM2026 1226h2v70h-2zM2080 1226h2v70h-2zM2134 1226h2v70h-2zM2190 1226h2v70h-2zM2244 1226h2v70h-2zM2298 1226h2v70h-2zM2352 1226h2v70h-2zM64 1300h2v70h-2zM118 1300h2v70h-2zM174 1300h2v70h-2zM228 1300h2v70h-2zM282 1300h2v70h-2zM336 1300h2v70h-2zM392 1300h2v70h-2zM446 1300h2v70h-2zM500 1300h2v70h-2zM554 1300h2v70h-2zM610 1300h2v70h-2zM664 1300h2v70h-2zM718 1300h2v70h-2zM772 1300h2v70h-2zM828 1300h2v70h-2zM882 1300h2v70h-2zM936 1300h2v70h-2zM990 1300h2v70h-2zM1046 1300h2v70h-2zM1100 1300h2v70h-2zM1154 1300h2v70h-2zM1208 1300h2v70h-2zM1262 1300h2v70h-2zM1318 1300h2v70h-2zM1372 1300h2v70h-2zM1426 1300h2v70h-2zM1480 1300h2v70h-2zM1536 1300h2v70h-2zM1590 1300h2v70h-2zM1644 1300h2v70h-2zM1698 1300h2v70h-2zM1754 1300h2v70h-2zM1808 1300h2v70h-2zM1862 1300h2v70h-2zM1916 1300h2v70h-2zM1972 1300h2v70h-2zM2026 1300h2v70h-2zM2080 1300h2v70h-2zM2134 1300h2v70h-2zM2190 1300h2v70h-2zM2244 1300h2v70h-2zM2298 1300h2v70h-2zM2352 1300h2v70h-2zM64 1374h2v14h-2zM118 1374h2v14h-2zM174 1374h2v14h-2zM228 1374h2v14h-2zM282 1374h2v14h-2zM336 1374h2v14h-2zM392 1374h2v14h-2zM446 1374h2v14h-2zM500 1374h2v14h-2zM554 1374h2v14h-2zM610 1374h2v14h-2zM664 1374h2v14h-2zM718 1374h2v14h-2zM772 1374h2v14h-2zM828 1374h2v14h-2zM882 1374h2v14h-2zM936 1374h2v14h-2zM990 1374h2v14h-2zM1046 1374h2v14h-2zM1100 1374h2v14h-2zM1154 1374h2v14h-2zM1208 1374h2v14h-2zM1262 1374h2v14h-2zM1318 1374h2v14h-2zM1372 1374h2v14h-2zM1426 1374h2v14h-2zM1480 1374h2v14h-2zM1536 1374h2v14h-2zM1590 1374h2v14h-2zM1644 1374h2v14h-2zM1698 1374h2v14h-2zM1754 1374h2v14h-2zM1808 1374h2v14h-2zM1862 1374h2v14h-2zM1916 1374h2v14h-2zM1972 1374h2v14h-2zM2026 1374h2v14h-2zM2080 1374h2v14h-2zM2134 1374h2v14h-2zM2190 1374h2v14h-2zM2244 1374h2v14h-2zM2298 1374h2v14h-2zM2352 1374h2v14h-2z"/>
<path fill="#ea4bd2" d="M446 104h218v34h-218zM882 104h218v34h-218zM1318 104h218v34h-218zM1754 104h218v34h-218z"/>
<path fill="#8a2c7d" d="M446 104h218v1.8h-218zM446 136.2h218v1.8h-218zM446 104h1.8v34h-1.8zM882 104h218v1.8h-218zM882 136.2h218v1.8h-218zM882 104h1.8v34h-1.8zM1318 104h218v1.8h-218zM1318 136.2h218v1.8h-218zM1318 104h1.8v34h-1.8zM1754 104h218v1.8h-218zM1754 136.2h218v1.8h-218zM1754 104h1.8v34h-1.8z"/>
<path fill="#6fe7fb" d="M10 142h422v34h-422zM446 142h422v34h-422zM882 142h204v34h-204zM1100 142h748v34h-748zM1972 142h204v34h-204zM2190 142h220v34h-220z"/>
<path fill="#3c8a98" d="M10 142h422v1.8h-422zM10 174.2h422v1.8h-422zM10 142h1.8v34h-1.8zM446 142h422v1.8h-422zM446 174.2h422v1.8h-422zM446 142h1.8v34h-1.8zM882 142h204v1.8h-204zM882 174.2h204v1.8h-204zM882 142h1.8v34h-1.8zM1100 142h748v1.8h-748zM1100 174.2h748v1.8h-748zM1100 142h1.8v34h-1.8zM1972 142h204v1.8h-204zM1972 174.2h204v1.8h-204zM1972 142h1.8v34h-1.8zM2190 142h220v1.8h-220zM2190 174.2h220v1.8h-220zM2190 142h1.8v34h-1.8z"/>
<path fill="#141414" d="M38.2 144.3h1.8v5.6h-1.8zM38.2 168.3h1.8v5.6h-1.8zM64.2 144.3h1.8v5.6h-1.8zM64.2 168.3h1.8v5.6h-1.8zM92.2 144.3h1.8v5.6h-1.8zM92.2 168.3h1.8v5.6h-1.8zM118.2 144.3h1.8v5.6h-1.8zM118.2 168.3h1.8v5.6h-1.8zM146.2 144.3h1.8v5.6h-1.8zM146.2 168.3h1.8v5.6h-1.8zM174.2 144.3h1.8v5.6h-1.8zM174.2 168.3h1.8v5.6h-1.8zM200.2 144.3h1.8v5.6h-1.8zM200.2 168.3h1.8v5.6h-1.8zM228.2 144.3h1.8v5.6h-1.8zM228.2 168.3h1.8v5.6h-1.8zM256.2 144.3h1.8v5.6h-1.8zM256.2 168.3h1.8v5.6h-1.8zM282.2 144.3h1.8v5.6h-1.8zM282.2 168.3h1.8v5.6h-1.8zM310.2 144.3h1.8v5.6h-1.8zM310.2 168.3h1.8v5.6h-1.8zM336.2 144.3h1.8v5.6h-1.8zM336.2 168.3h1.8v5.6h-1.8zM364.2 144.3h1.8v5.6h-1.8zM364.2 168.3h1.8v5.6h-1.8zM392.2 144.3h1.8v5.6h-1.8zM392.2 168.3h1.8v5.6h-1.8zM418.2 144.3h1.8v5.6h-1.8zM418.2 168.3h1.8v5.6h-1.8zM474.2 144.3h1.8v5.6h-1.8zM474.2 168.3h1.8v5.6h-1.8zM500.2 144.3h1.8v5.6h-1.8zM500.2 168.3h1.8v5.6h-1.8zM528.2 144.3h1.8v5.6h-1.8zM528.2 168.3h1.8v5.6h-1.8zM554.2 144.3h1.8v5.6h-1.8zM554.2 168.3h1.8v5.6h-1.8zM582.2 144.3h1.8v5.6h-1.8zM582.2 168.3h1.8v5.6h-1.8zM610.2 144.3h1.8v5.6h-1.8zM610.2 168.3h1.8v5.6h-1.8zM636.2 144.3h1.8v5.6h-1.8zM636.2 168.3h1.8v5.6h-1.8zM664.2 144.3h1.8v5.6h-1.8zM664.2 168.3h1.8v5.6h-1.8zM690.2 144.3h1.8v5.6h-1.8zM690.2 168.3h1.8v5.6h-1.8zM718.2 144.3h1.8v5.6h-1.8zM718.2 168.3h1.8v5.6h-1.8zM746.2 144.3h1.8v5.6h-1.8zM746.2 168.3h1.8v5.6h-1.8zM772.2 144.3h1.8v5.6h-1.8zM772.2 168.3h1.8v5.6h-1.8zM800.2 144.3h1.8v5.6h-1.8zM800.2 168.3h1.8v5.6h-1.8zM828.2 144.3h1.8v5.6h-1.8zM828.2 168.3h1.8v5.6h-1.8zM854.2 144.3h1.8v5.6h-1.8zM854.2 168.3h1.8v5.6h-1.8zM908.2 144.3h1.8v5.6h-1.8zM908.2 168.3h1.8v5.6h-1.8zM936.2 144.3h1.8v5.6h-1.8zM936.2 168.3h1.8v5.6h-1.8zM964.2 144.3h1.8v5.6h-1.8zM964.2 168.3h1.8v5.6h-1.8zM990.2 144.3h1.8v5.6h-1.8zM990.2 168.3h1.8v5.6h-1.8zM1018.2 144.3h1.8v5.6h-1.8zM1018.2 168.3h1.8v5.6h-1.8zM1046.2 144.3h1.8v5.6h-1.8zM1046.2 168.3h1.8v5.6h-1.8zM1072.2 144.3h1.8v5.6h-1.8zM1072.2 168.3h1.8v5.6h-1.8zM1126.2 144.3h1.8v5.6h-1.8zM1126.2 168.3h1.8v5.6h-1.8zM1154.2 144.3h1.8v5.6h-1.8zM1154.2 168.3h1.8v5.6h-1.8zM1182.2 144.3h1.8v5.6h-1.8zM1182.2 168.3h1.8v5.6h-1.8zM1208.2 144.3h1.8v5.6h-1.8zM1208.2 168.3h1.8v5.6h-1.8zM1236.2 144.3h1.8v5.6h-1.8zM1236.2 168.3h1.8v5.6h-1.8zM1262.2 144.3h1.8v5.6h-1.8zM1262.2 168.3h1.8v5.6h-1.8zM1290.2 144.3h1.8v5.6h-1.8zM1290.2 168.3h1.8v5.6h-1.8zM1318.2 144.3h1.8v5.6h-1.8zM1318.2 168.3h1.8v5.6h-1.8zM1344.2 144.3h1.8v5.6h-1.8zM1344.2 168.3h1.8v5.6h-1.8zM1372.2 144.3h1.8v5.6h-1.8zM1372.2 168.3h1.8v5.6h-1.8zM1400.2 144.3h1.8v5.6h-1.8zM1400.2 168.3h1.8v5.6h-1.8zM1426.2 144.3h1.8v5.6h-1.8zM1426.2 168.3h1.8v5.6h-1.8zM1454.2 144.3h1.8v5.6h-1.8zM1454.2 168.3h1.8v5.6h-1.8zM1480.2 144.3h1.8v5.6h-1.8zM1480.2 168.3h1.8v5.6h-1.8zM1508.2 144.3h1.8v5.6h-1.8zM1508.2 168.3h1.8v5.6h-1.8zM1536.2 144.3h1.8v5.6h-1.8zM1536.2 168.3h1.8v5.6h-1.8zM1562.2 144.3h1.8v5.6h-1.8zM1562.2 168.3h1.8v5.6h-1.8zM1590.2 144.3h1.8v5.6h-1.8zM1590.2 168.3h1.8v5.6h-1.8zM1618.2 144.3h1.8v5.6h-1.8zM1618.2 168.3h1.8v5.6h-1.8zM1644.2 144.3h1.8v5.6h-1.8zM1644.2 168.3h1.8v5.6h-1.8zM1672.2 144.3h1.8v5.6h-1.8zM1672.2 168.3h1.8v5.6h-1.8zM1698.2 144.3h1.8v5.6h-1.8zM1698.2 168.3h1.8v5.6h-1.8zM1726.2 144.3h1.8v5.6h-1.8zM1726.2 168.3h1.8v5.6h-1.8zM1754.2 144.3h1.8v5.6h-1.8zM1754.2 168.3h1.8v5.6h-1.8zM1780.2 144.3h1.8v5.6h-1.8zM1780.2 168.3h1.8v5.6h-1.8zM1808.2 144.3h1.8v5.6h-1.8zM1808.2 168.3h1.8v5.6h-1.8zM1834.2 144.3h1.8v5.6h-1.8zM1834.2 168.3h1.8v5.6h-1.8zM1998.2 144.3h1.8v5.6h-1.8zM1998.2 168.3h1.8v5.6h-1.8zM2026.2 144.3h1.8v5.6h-1.8zM2026.2 168.3h1.8v5.6h-1.8zM2052.2 144.3h1.8v5.6h-1.8zM2052.2 168.3h1.8v5.6h-1.8zM2080.2 144.3h1.8v5.6h-1.8zM2080.2 168.3h1.8v5.6h-1.8zM2108.2 144.3h1.8v5.6h-1.8zM2108.2 168.3h1.8v5.6h-1.8zM2134.2 144.3h1.8v5.6h-1.8zM2134.2 168.3h1.8v5.6h-1.8zM2162.2 144.3h1.8v5.6h-1.8zM2162.2 168.3h1.8v5.6h-1.8zM2216.2 144.3h1.8v5.6h-1.8zM2216.2 168.3h1.8v5.6h-1.8zM2244.2 144.3h1.8v5.6h-1.8zM2244.2 168.3h1.8v5.6h-1.8zM2270.2 144.3h1.8v5.6h-1.8zM2270.2 168.3h1.8v5.6h-1.8zM2298.2 144.3h1.8v5.6h-1.8zM2298.2 168.3h1.8v5.6h-1.8zM2326.2 144.3h1.8v5.6h-1.8zM2326.2 168.3h1.8v5.6h-1.8zM2352.2 144.3h1.8v5.6h-1.8zM2352.2 168.3h1.8v5.6h-1.8zM2380.2 144.3h1.8v5.6h-1.8zM2380.2 168.3h1.8v5.6h-1.8z"/>
<path fill="#6fe7fb" d="M228 180h204v34h-204zM664 180h204v34h-204zM882 180h204v34h-204zM1536 180h312v34h-312zM1972 180h204v34h-204z"/>
<path fill="#3c8a98" d="M228 180h204v1.8h-204zM228 212.2h204v1.8h-204zM228 180h1.8v34h-1.8zM664 180h204v1.8h-204zM664 212.2h204v1.8h-204zM664 180h1.8v34h-1.8zM882 180h204v1.8h-204zM882 212.2h204v1.8h-204zM882 180h1.8v34h-1.8zM1536 180h312v1.8h-312zM1536 212.2h312v1.8h-312zM1536 180h1.8v34h-1.8zM1972 180h204v1.8h-204zM1972 212.2h204v1.8h-204zM1972 180h1.8v34h-1.8z"/>
<path fill="#141414" d="M242.2 182.3h1.8v5.6h-1.8zM242.2 206.3h1.8v5.6h-1.8zM256.2 182.3h1.8v5.6h-1.8zM256.2 206.3h1.8v5.6h-1.8zM268.2 182.3h1.8v5.6h-1.8zM268.2 206.3h1.8v5.6h-1.8zM282.2 182.3h1.8v5.6h-1.8zM282.2 206.3h1.8v5.6h-1.8zM296.2 182.3h1.8v5.6h-1.8zM296.2 206.3h1.8v5.6h-1.8zM310.2 182.3h1.8v5.6h-1.8zM310.2 206.3h1.8v5.6h-1.8zM324.2 182.3h1.8v5.6h-1.8zM324.2 206.3h1.8v5.6h-1.8zM336.2 182.3h1.8v5.6h-1.8zM336.2 206.3h1.8v5.6h-1.8zM350.2 182.3h1.8v5.6h-1.8zM350.2 206.3h1.8v5.6h-1.8zM364.2 182.3h1.8v5.6h-1.8zM364.2 206.3h1.8v5.6h-1.8zM378.2 182.3h1.8v5.6h-1.8zM378.2 206.3h1.8v5.6h-1.8zM392.2 182.3h1.8v5.6h-1.8zM392.2 206.3h1.8v5.6h-1.8zM404.2 182.3h1.8v5.6h-1.8zM404.2 206.3h1.8v5.6h-1.8zM418.2 182.3h1.8v5.6h-1.8zM418.2 206.3h1.8v5.6h-1.8zM678.2 182.3h1.8v5.6h-1.8zM678.2 206.3h1.8v5.6h-1.8zM690.2 182.3h1.8v5.6h-1.8zM690.2 206.3h1.8v5.6h-1.8zM704.2 182.3h1.8v5.6h-1.8zM704.2 206.3h1.8v5.6h-1.8zM718.2 182.3h1.8v5.6h-1.8zM718.2 206.3h1.8v5.6h-1.8zM732.2 182.3h1.8v5.6h-1.8zM732.2 206.3h1.8v5.6h-1.8zM746.2 182.3h1.8v5.6h-1.8zM746.2 206.3h1.8v5.6h-1.8zM760.2 182.3h1.8v5.6h-1.8zM760.2 206.3h1.8v5.6h-1.8zM772.2 182.3h1.8v5.6h-1.8zM772.2 206.3h1.8v5.6h-1.8zM786.2 182.3h1.8v5.6h-1.8zM786.2 206.3h1.8v5.6h-1.8zM800.2 182.3h1.8v5.6h-1.8zM800.2 206.3h1.8v5.6h-1.8zM814.2 182.3h1.8v5.6h-1.8zM814.2 206.3h1.8v5.6h-1.8zM828.2 182.3h1.8v5.6h-1.8zM828.2 206.3h1.8v5.6h-1.8zM840.2 182.3h1.8v5.6h-1.8zM840.2 206.3h1.8v5.6h-1.8zM854.2 182.3h1.8v5.6h-1.8zM854.2 206.3h1.8v5.6h-1.8zM896.2 182.3h1.8v5.6h-1.8zM896.2 206.3h1.8v5.6h-1.8zM908.2 182.3h1.8v5.6h-1.8zM908.2 206.3h1.8v5.6h-1.8zM922.2 182.3h1.8v5.6h-1.8zM922.2 206.3h1.8v5.6h-1.8zM936.2 182.3h1.8v5.6h-1.8zM936.2 206.3h1.8v5.6h-1.8zM950.2 182.3h1.8v5.6h-1.8zM950.2 206.3h1.8v5.6h-1.8zM964.2 182.3h1.8v5.6h-1.8zM964.2 206.3h1.8v5.6h-1.8zM976.2 182.3h1.8v5.6h-1.8zM976.2 206.3h1.8v5.6h-1.8zM990.2 182.3h1.8v5.6h-1.8zM990.2 206.3h1.8v5.6h-1.8zM1004.2 182.3h1.8v5.6h-1.8zM1004.2 206.3h1.8v5.6h-1.8zM1018.2 182.3h1.8v5.6h-1.8zM1018.2 206.3h1.8v5.6h-1.8zM1032.2 182.3h1.8v5.6h-1.8zM1032.2 206.3h1.8v5.6h-1.8zM1046.2 182.3h1.8v5.6h-1.8zM1046.2 206.3h1.8v5.6h-1.8zM1058.2 182.3h1.8v5.6h-1.8zM1058.2 206.3h1.8v5.6h-1.8zM1072.2 182.3h1.8v5.6h-1.8zM1072.2 206.3h1.8v5.6h-1.8zM1548.2 182.3h1.8v5.6h-1.8zM1548.2 206.3h1.8v5.6h-1.8zM1562.2 182.3h1.8v5.6h-1.8zM1562.2 206.3h1.8v5.6h-1.8zM1576.2 182.3h1.8v5.6h-1.8zM1576.2 206.3h1.8v5.6h-1.8zM1590.2 182.3h1.8v5.6h-1.8zM1590.2 206.3h1.8v5.6h-1.8zM1604.2 182.3h1.8v5.6h-1.8zM1604.2 206.3h1.8v5.6h-1.8zM1618.2 182.3h1.8v5.6h-1.8zM1618.2 206.3h1.8v5.6h-1.8zM1630.2 182.3h1.8v5.6h-1.8zM1630.2 206.3h1.8v5.6h-1.8zM1644.2 182.3h1.8v5.6h-1.8zM1644.2 206.3h1.8v5.6h-1.8zM1658.2 182.3h1.8v5.6h-1.8zM1658.2 206.3h1.8v5.6h-1.8zM1672.2 182.3h1.8v5.6h-1.8zM1672.2 206.3h1.8v5.6h-1.8zM1686.2 182.3h1.8v5.6h-1.8zM1686.2 206.3h1.8v5.6h-1.8zM1698.2 182.3h1.8v5.6h-1.8zM1698.2 206.3h1.8v5.6h-1.8zM1712.2 182.3h1.8v5.6h-1.8zM1712.2 206.3h1.8v5.6h-1.8zM1726.2 182.3h1.8v5.6h-1.8zM1726.2 206.3h1.8v5.6h-1.8zM1740.2 182.3h1.8v5.6h-1.8zM1740.2 206.3h1.8v5.6h-1.8zM1754.2 182.3h1.8v5.6h-1.8zM1754.2 206.3h1.8v5.6h-1.8zM1766.2 182.3h1.8v5.6h-1.8zM1766.2 206.3h1.8v5.6h-1.8zM1780.2 182.3h1.8v5.6h-1.8zM1780.2 206.3h1.8v5.6h-1.8zM1794.2 182.3h1.8v5.6h-1.8zM1794.2 206.3h1.8v5.6h-1.8zM1808.2 182.3h1.8v5.6h-1.8zM1808.2 206.3h1.8v5.6h-1.8zM1822.2 182.3h1.8v5.6h-1.8zM1822.2 206.3h1.8v5.6h-1.8zM1834.2 182.3h1.8v5.6h-1.8zM1834.2 206.3h1.8v5.6h-1.8zM1984.2 182.3h1.8v5.6h-1.8zM1984.2 206.3h1.8v5.6h-1.8zM1998.2 182.3h1.8v5.6h-1.8zM1998.2 206.3h1.8v5.6h-1.8zM2012.2 182.3h1.8v5.6h-1.8zM2012.2 206.3h1.8v5.6h-1.8zM2026.2 182.3h1.8v5.6h-1.8zM2026.2 206.3h1.8v5.6h-1.8zM2040.2 182.3h1.8v5.6h-1.8zM2040.2 206.3h1.8v5.6h-1.8zM2052.2 182.3h1.8v5.6h-1.8zM2052.2 206.3h1.8v5.6h-1.8zM2066.2 182.3h1.8v5.6h-1.8zM2066.2 206.3h1.8v5.6h-1.8zM2080.2 182.3h1.8v5.6h-1.8zM2080.2 206.3h1.8v5.6h-1.8zM2094.2 182.3h1.8v5.6h-1.8zM2094.2 206.3h1.8v5.6h-1.8zM2108.2 182.3h1.8v5.6h-1.8zM2108.2 206.3h1.8v5.6h-1.8zM2120.2 182.3h1.8v5.6h-1.8zM2120.2 206.3h1.8v5.6h-1.8zM2134.2 182.3h1.8v5.6h-1.8zM2134.2 206.3h1.8v5.6h-1.8zM2148.2 182.3h1.8v5.6h-1.8zM2148.2 206.3h1.8v5.6h-1.8zM2162.2 182.3h1.8v5.6h-1.8zM2162.2 206.3h1.8v5.6h-1.8z"/>
<path fill="#68c23b" d="M228 218h54v70h-54zM282 218h54v70h-54zM336 218h56v70h-56zM392 218h40v70h-40zM664 218h54v70h-54zM718 218h54v70h-54zM772 218h56v70h-56zM828 218h40v70h-40zM882 218h54v70h-54zM936 218h54v70h-54zM990 218h56v70h-56zM1046 218h40v70h-40zM1536 218h54v70h-54zM1590 218h54v70h-54zM1644 218h54v70h-54zM1698 218h56v70h-56zM1754 218h54v70h-54zM1808 218h40v70h-40zM1972 218h54v70h-54zM2026 218h54v70h-54zM2080 218h54v70h-54zM2134 218h42v70h-42zM664 292h54v70h-54zM718 292h54v70h-54zM772 292h56v70h-56zM828 292h54v70h-54zM882 292h54v70h-54zM936 292h54v70h-54zM990 292h56v70h-56zM1046 292h54v70h-54zM1536 292h54v70h-54zM1590 292h54v70h-54zM1644 292h54v70h-54zM1698 292h56v70h-56zM1754 292h54v70h-54zM1808 292h54v70h-54zM1862 292h54v70h-54zM1916 292h56v70h-56zM1972 292h54v70h-54zM2026 292h54v70h-54zM2080 292h54v70h-54zM2134 292h56v70h-56z"/>
<path fill="#356b1e" d="M228 218h54v1.9h-54zM228 218h2v70h-2zM228 250h54v1.9h-54zM282 218h54v1.9h-54zM282 218h2v70h-2zM282 250h54v1.9h-54zM336 218h56v1.9h-56zM336 218h2v70h-2zM336 250h56v1.9h-56zM392 218h40v1.9h-40zM392 218h2v70h-2zM392 250h40v1.9h-40zM664 218h54v1.9h-54zM664 218h2v70h-2zM664 250h54v1.9h-54zM718 218h54v1.9h-54zM718 218h2v70h-2zM718 250h54v1.9h-54zM772 218h56v1.9h-56zM772 218h2v70h-2zM772 250h56v1.9h-56zM828 218h40v1.9h-40zM828 218h2v70h-2zM828 250h40v1.9h-40zM882 218h54v1.9h-54zM882 218h2v70h-2zM882 250h54v1.9h-54zM936 218h54v1.9h-54zM936 218h2v70h-2zM936 250h54v1.9h-54zM990 218h56v1.9h-56zM990 218h2v70h-2zM990 250h56v1.9h-56zM1046 218h40v1.9h-40zM1046 218h2v70h-2zM1046 250h40v1.9h-40zM1536 218h54v1.9h-54zM1536 218h2v70h-2zM1536 250h54v1.9h-54zM1590 218h54v1.9h-54zM1590 218h2v70h-2zM1590 250h54v1.9h-54zM1644 218h54v1.9h-54zM1644 218h2v70h-2zM1644 250h54v1.9h-54zM1698 218h56v1.9h-56zM1698 218h2v70h-2zM1698 250h56v1.9h-56zM1754 218h54v1.9h-54zM1754 218h2v70h-2zM1754 250h54v1.9h-54zM1808 218h40v1.9h-40zM1808 218h2v70h-2zM1808 250h40v1.9h-40zM1972 218h54v1.9h-54zM1972 218h2v70h-2zM1972 250h54v1.9h-54zM2026 218h54v1.9h-54zM2026 218h2v70h-2zM2026 250h54v1.9h-54zM2080 218h54v1.9h-54zM2080 218h2v70h-2zM2080 250h54v1.9h-54zM2134 218h42v1.9h-42zM2134 218h2v70h-2zM2134 250h42v1.9h-42zM664 292h54v1.9h-54zM664 292h2v70h-2zM664 324h54v1.9h-54zM718 292h54v1.9h-54zM718 292h2v70h-2zM718 324h54v1.9h-54zM772 292h56v1.9h-56zM772 292h2v70h-2zM772 324h56v1.9h-56zM828 292h54v1.9h-54zM828 292h2v70h-2zM828 324h54v1.9h-54zM882 292h54v1.9h-54zM882 292h2v70h-2zM882 324h54v1.9h-54zM936 292h54v1.9h-54zM936 292h2v70h-2zM936 324h54v1.9h-54zM990 292h56v1.9h-56zM990 292h2v70h-2zM990 324h56v1.9h-56zM1046 292h54v1.9h-54zM1046 292h2v70h-2zM1046 324h54v1.9h-54zM1536 292h54v1.9h-54zM1536 292h2v70h-2zM1536 324h54v1.9h-54zM1590 292h54v1.9h-54zM1590 292h2v70h-2zM1590 324h54v1.9h-54zM1644 292h54v1.9h-54zM1644 292h2v70h-2zM1644 324h54v1.9h-54zM1698 292h56v1.9h-56zM1698 292h2v70h-2zM1698 324h56v1.9h-56zM1754 292h54v1.9h-54zM1754 292h2v70h-2zM1754 324h54v1.9h-54zM1808 292h54v1.9h-54zM1808 292h2v70h-2zM1808 324h54v1.9h-54zM1862 292h54v1.9h-54zM1862 292h2v70h-2zM1862 324h54v1.9h-54zM1916 292h56v1.9h-56zM1916 292h2v70h-2zM1916 324h56v1.9h-56zM1972 292h54v1.9h-54zM1972 292h2v70h-2zM1972 324h54v1.9h-54zM2026 292h54v1.9h-54zM2026 292h2v70h-2zM2026 324h54v1.9h-54zM2080 292h54v1.9h-54zM2080 292h2v70h-2zM2080 324h54v1.9h-54zM2134 292h56v1.9h-56zM2134 292h2v70h-2zM2134 324h56v1.9h-56z"/>
<path fill="#1d2a16" d="M255.9 252h12v3.9h-12zM270.1 252h3.8v3.9h-3.8zM246 256.1h9.9v3.8h-9.9zM273.9 264h8.1v3.9h-8.1zM229.9 284.2h17.9v3.8h-17.9zM310.4 252h17.6v3.9h-17.6zM300.1 256.1h1.7v3.8h-1.7zM304 256.1h6v3.8h-6zM328 264h8v3.9h-8zM283.8 284.2h18v3.8h-18zM364 252h6v3.9h-6zM371.8 252h12v3.9h-12zM355.9 256.1h8.1v3.8h-8.1zM382 264h8.5v3.9h-8.5zM337.9 284.2h18v3.8h-18zM419.9 252h12v3.9h-12zM410 256.1h9.9v3.8h-9.9zM393.9 284.2h17.9v3.8h-17.9zM692 252h6v3.9h-6zM699.8 252h12v3.9h-12zM683.9 256.1h8.1v3.8h-8.1zM710 264h8v3.9h-8zM665.9 284.2h18v3.8h-18zM745.9 252h12v3.9h-12zM760.1 252h3.8v3.9h-3.8zM736 256.1h9.9v3.8h-9.9zM763.9 264h8.1v3.9h-8.1zM719.9 284.2h17.9v3.8h-17.9zM800.4 252h17.6v3.9h-17.6zM790.1 256.1h1.7v3.8h-1.7zM794 256.1h6v3.8h-6zM818 264h8.5v3.9h-8.5zM773.8 284.2h18v3.8h-18zM856 252h6v3.9h-6zM863.8 252h4.2v3.9h-4.2zM847.9 256.1h8.1v3.8h-8.1zM829.9 284.2h18v3.8h-18zM909.9 252h12v3.9h-12zM924.1 252h3.8v3.9h-3.8zM900 256.1h9.9v3.8h-9.9zM927.9 264h8.1v3.9h-8.1zM883.9 284.2h17.9v3.8h-17.9zM964.4 252h17.6v3.9h-17.6zM954.1 256.1h1.7v3.8h-1.7zM958 256.1h6v3.8h-6zM982 264h8v3.9h-8zM937.8 284.2h18v3.8h-18zM1018 252h6v3.9h-6zM1025.8 252h12v3.9h-12zM1009.9 256.1h8.1v3.8h-8.1zM1036 264h8.5v3.9h-8.5zM991.9 284.2h18v3.8h-18zM1073.9 252h12v3.9h-12zM1064 256.1h9.9v3.8h-9.9zM1047.9 284.2h17.9v3.8h-17.9zM1563.9 252h12v3.9h-12zM1578.1 252h3.8v3.9h-3.8zM1554 256.1h9.9v3.8h-9.9zM1581.9 264h8.1v3.9h-8.1zM1537.9 284.2h17.9v3.8h-17.9zM1618.4 252h17.6v3.9h-17.6zM1608.1 256.1h1.7v3.8h-1.7zM1612 256.1h6v3.8h-6zM1636 264h8v3.9h-8zM1591.8 284.2h18v3.8h-18zM1672 252h6v3.9h-6zM1679.8 252h12v3.9h-12zM1663.9 256.1h8.1v3.8h-8.1zM1690 264h8v3.9h-8zM1645.9 284.2h18v3.8h-18zM1725.9 252h12v3.9h-12zM1740.1 252h3.8v3.9h-3.8zM1716 256.1h9.9v3.8h-9.9zM1743.9 264h8.6v3.9h-8.6zM1699.9 284.2h17.9v3.8h-17.9zM1782.4 252h17.6v3.9h-17.6zM1772.1 256.1h1.7v3.8h-1.7zM1776 256.1h6v3.8h-6zM1800 264h8v3.9h-8zM1755.8 284.2h18v3.8h-18zM1836 252h6v3.9h-6zM1843.8 252h4.2v3.9h-4.2zM1827.9 256.1h8.1v3.8h-8.1zM1809.9 284.2h18v3.8h-18zM2000 252h6v3.9h-6zM2007.8 252h12v3.9h-12zM1991.9 256.1h8.1v3.8h-8.1zM2018 264h8v3.9h-8zM1973.9 284.2h18v3.8h-18zM2053.9 252h12v3.9h-12zM2068.1 252h3.8v3.9h-3.8zM2044 256.1h9.9v3.8h-9.9zM2071.9 264h8.1v3.9h-8.1zM2027.9 284.2h17.9v3.8h-17.9zM2108.4 252h17.6v3.9h-17.6zM2098.1 256.1h1.7v3.8h-1.7zM2102 256.1h6v3.8h-6zM2126 264h8v3.9h-8zM2081.8 284.2h18v3.8h-18zM2162 252h6v3.9h-6zM2169.8 252h6.2v3.9h-6.2zM2153.9 256.1h8.1v3.8h-8.1zM2135.9 284.2h18v3.8h-18zM692 326h6v3.9h-6zM699.8 326h12v3.9h-12zM683.9 330.1h8.1v3.8h-8.1zM710 338h8v3.9h-8zM665.9 358.2h18v3.8h-18zM745.9 326h12v3.9h-12zM760.1 326h3.8v3.9h-3.8zM736 330.1h9.9v3.8h-9.9zM763.9 338h8.1v3.9h-8.1zM719.9 358.2h17.9v3.8h-17.9zM800.4 326h17.6v3.9h-17.6zM790.1 330.1h1.7v3.8h-1.7zM794 330.1h6v3.8h-6zM818 338h8.5v3.9h-8.5zM773.8 358.2h18v3.8h-18zM856 326h6v3.9h-6zM863.8 326h12v3.9h-12zM847.9 330.1h8.1v3.8h-8.1zM874 338h8v3.9h-8zM829.9 358.2h18v3.8h-18zM909.9 326h12v3.9h-12zM924.1 326h3.8v3.9h-3.8zM900 330.1h9.9v3.8h-9.9zM927.9 338h8.1v3.9h-8.1zM883.9 358.2h17.9v3.8h-17.9zM964.4 326h17.6v3.9h-17.6zM954.1 330.1h1.7v3.8h-1.7zM958 330.1h6v3.8h-6zM982 338h8v3.9h-8zM937.8 358.2h18v3.8h-18zM1018 326h6v3.9h-6zM1025.8 326h12v3.9h-12zM1009.9 330.1h8.1v3.8h-8.1zM1036 338h8.5v3.9h-8.5zM991.9 358.2h18v3.8h-18zM1073.9 326h12v3.9h-12zM1088.1 326h3.8v3.9h-3.8zM1064 330.1h9.9v3.8h-9.9zM1091.9 338h8.1v3.9h-8.1zM1047.9 358.2h17.9v3.8h-17.9zM1563.9 326h12v3.9h-12zM1578.1 326h3.8v3.9h-3.8zM1554 330.1h9.9v3.8h-9.9zM1581.9 338h8.1v3.9h-8.1zM1537.9 358.2h17.9v3.8h-17.9zM1618.4 326h17.6v3.9h-17.6zM1608.1 330.1h1.7v3.8h-1.7zM1612 330.1h6v3.8h-6zM1636 338h8v3.9h-8zM1591.8 358.2h18v3.8h-18zM1672 326h6v3.9h-6zM1679.8 326h12v3.9h-12zM1663.9 330.1h8.1v3.8h-8.1zM1690 338h8v3.9h-8zM1645.9 358.2h18v3.8h-18zM1725.9 326h12v3.9h-12zM1740.1 326h3.8v3.9h-3.8zM1716 330.1h9.9v3.8h-9.9zM1743.9 338h8.6v3.9h-8.6zM1699.9 358.2h17.9v3.8h-17.9zM1782.4 326h17.6v3.9h-17.6zM1772.1 330.1h1.7v3.8h-1.7zM1776 330.1h6v3.8h-6zM1800 338h8v3.9h-8zM1755.8 358.2h18v3.8h-18zM1836 326h6v3.9h-6zM1843.8 326h12v3.9h-12zM1827.9 330.1h8.1v3.8h-8.1zM1854 338h8v3.9h-8zM1809.9 358.2h18v3.8h-18zM1889.9 326h12v3.9h-12zM1904.1 326h3.8v3.9h-3.8zM1880 330.1h9.9v3.8h-9.9zM1907.9 338h8.1v3.9h-8.1zM1863.9 358.2h17.9v3.8h-17.9zM1944.4 326h17.6v3.9h-17.6zM1934.1 330.1h1.7v3.8h-1.7zM1938 330.1h6v3.8h-6zM1962 338h8.5v3.9h-8.5zM1917.8 358.2h18v3.8h-18zM2000 326h6v3.9h-6zM2007.8 326h12v3.9h-12zM1991.9 330.1h8.1v3.8h-8.1zM2018 338h8v3.9h-8zM1973.9 358.2h18v3.8h-18zM2053.9 326h12v3.9h-12zM2068.1 326h3.8v3.9h-3.8zM2044 330.1h9.9v3.8h-9.9zM2071.9 338h8.1v3.9h-8.1zM2027.9 358.2h17.9v3.8h-17.9zM2108.4 326h17.6v3.9h-17.6zM2098.1 330.1h1.7v3.8h-1.7zM2102 330.1h6v3.8h-6zM2126 338h8v3.9h-8zM2081.8 358.2h18v3.8h-18zM2162 326h6v3.9h-6zM2169.8 326h12v3.9h-12zM2153.9 330.1h8.1v3.8h-8.1zM2180 338h8.5v3.9h-8.5zM2135.9 358.2h18v3.8h-18z"/>
<path fill="#6fe7fb" d="M10 366h1090v34h-1090zM1536 366h874v34h-874zM664 404h436v34h-436zM1536 404h874v34h-874zM10 442h1090v34h-1090zM1536 442h874v34h-874z"/>
<path fill="#3c8a98" d="M10 366h1090v1.8h-1090zM10 398.2h1090v1.8h-1090zM10 366h1.8v34h-1.8zM1536 366h874v1.8h-874zM1536 398.2h874v1.8h-874zM1536 366h1.8v34h-1.8zM664 404h436v1.8h-436zM664 436.2h436v1.8h-436zM664 404h1.8v34h-1.8zM1536 404h874v1.8h-874zM1536 436.2h874v1.8h-874zM1536 404h1.8v34h-1.8zM10 442h1090v1.8h-1090zM10 474.2h1090v1.8h-1090zM10 442h1.8v34h-1.8zM1536 442h874v1.8h-874zM1536 474.2h874v1.8h-874zM1536 442h1.8v34h-1.8z"/>
<path fill="#141414" d="M678.2 406.3h1.8v5.6h-1.8zM678.2 430.3h1.8v5.6h-1.8zM690.2 406.3h1.8v5.6h-1.8zM690.2 430.3h1.8v5.6h-1.8zM704.2 406.3h1.8v5.6h-1.8zM704.2 430.3h1.8v5.6h-1.8zM718.2 406.3h1.8v5.6h-1.8zM718.2 430.3h1.8v5.6h-1.8zM732.2 406.3h1.8v5.6h-1.8zM732.2 430.3h1.8v5.6h-1.8zM746.2 406.3h1.8v5.6h-1.8zM746.2 430.3h1.8v5.6h-1.8zM760.2 406.3h1.8v5.6h-1.8zM760.2 430.3h1.8v5.6h-1.8zM772.2 406.3h1.8v5.6h-1.8zM772.2 430.3h1.8v5.6h-1.8zM786.2 406.3h1.8v5.6h-1.8zM786.2 430.3h1.8v5.6h-1.8zM800.2 406.3h1.8v5.6h-1.8zM800.2 430.3h1.8v5.6h-1.8zM814.2 406.3h1.8v5.6h-1.8zM814.2 430.3h1.8v5.6h-1.8zM828.2 406.3h1.8v5.6h-1.8zM828.2 430.3h1.8v5.6h-1.8zM840.2 406.3h1.8v5.6h-1.8zM840.2 430.3h1.8v5.6h-1.8zM854.2 406.3h1.8v5.6h-1.8zM854.2 430.3h1.8v5.6h-1.8zM868.2 406.3h1.8v5.6h-1.8zM868.2 430.3h1.8v5.6h-1.8zM882.2 406.3h1.8v5.6h-1.8zM882.2 430.3h1.8v5.6h-1.8zM896.2 406.3h1.8v5.6h-1.8zM896.2 430.3h1.8v5.6h-1.8zM908.2 406.3h1.8v5.6h-1.8zM908.2 430.3h1.8v5.6h-1.8zM922.2 406.3h1.8v5.6h-1.8zM922.2 430.3h1.8v5.6h-1.8zM936.2 406.3h1.8v5.6h-1.8zM936.2 430.3h1.8v5.6h-1.8zM950.2 406.3h1.8v5.6h-1.8zM950.2 430.3h1.8v5.6h-1.8zM964.2 406.3h1.8v5.6h-1.8zM964.2 430.3h1.8v5.6h-1.8zM976.2 406.3h1.8v5.6h-1.8zM976.2 430.3h1.8v5.6h-1.8zM990.2 406.3h1.8v5.6h-1.8zM990.2 430.3h1.8v5.6h-1.8zM1004.2 406.3h1.8v5.6h-1.8zM1004.2 430.3h1.8v5.6h-1.8zM1018.2 406.3h1.8v5.6h-1.8zM1018.2 430.3h1.8v5.6h-1.8zM1032.2 406.3h1.8v5.6h-1.8zM1032.2 430.3h1.8v5.6h-1.8zM1046.2 406.3h1.8v5.6h-1.8zM1046.2 430.3h1.8v5.6h-1.8zM1058.2 406.3h1.8v5.6h-1.8zM1058.2 430.3h1.8v5.6h-1.8zM1072.2 406.3h1.8v5.6h-1.8zM1072.2 430.3h1.8v5.6h-1.8zM1086.2 406.3h1.8v5.6h-1.8zM1086.2 430.3h1.8v5.6h-1.8zM1548.2 406.3h1.8v5.6h-1.8zM1548.2 430.3h1.8v5.6h-1.8zM1562.2 406.3h1.8v5.6h-1.8zM1562.2 430.3h1.8v5.6h-1.8zM1576.2 406.3h1.8v5.6h-1.8zM1576.2 430.3h1.8v5.6h-1.8zM1590.2 406.3h1.8v5.6h-1.8zM1590.2 430.3h1.8v5.6h-1.8zM1604.2 406.3h1.8v5.6h-1.8zM1604.2 430.3h1.8v5.6h-1.8zM1618.2 406.3h1.8v5.6h-1.8zM1618.2 430.3h1.8v5.6h-1.8zM1630.2 406.3h1.8v5.6h-1.8zM1630.2 430.3h1.8v5.6h-1.8zM1644.2 406.3h1.8v5.6h-1.8zM1644.2 430.3h1.8v5.6h-1.8zM1658.2 406.3h1.8v5.6h-1.8zM1658.2 430.3h1.8v5.6h-1.8zM1672.2 406.3h1.8v5.6h-1.8zM1672.2 430.3h1.8v5.6h-1.8zM1686.2 406.3h1.8v5.6h-1.8zM1686.2 430.3h1.8v5.6h-1.8zM1698.2 406.3h1.8v5.6h-1.8zM1698.2 430.3h1.8v5.6h-1.8zM1712.2 406.3h1.8v5.6h-1.8zM1712.2 430.3h1.8v5.6h-1.8zM1726.2 406.3h1.8v5.6h-1.8zM1726.2 430.3h1.8v5.6h-1.8zM1740.2 406.3h1.8v5.6h-1.8zM1740.2 430.3h1.8v5.6h-1.8zM1754.2 406.3h1.8v5.6h-1.8zM1754.2 430.3h1.8v5.6h-1.8zM1766.2 406.3h1.8v5.6h-1.8zM1766.2 430.3h1.8v5.6h-1.8zM1780.2 406.3h1.8v5.6h-1.8zM1780.2 430.3h1.8v5.6h-1.8zM1794.2 406.3h1.8v5.6h-1.8zM1794.2 430.3h1.8v5.6h-1.8zM1808.2 406.3h1.8v5.6h-1.8zM1808.2 430.3h1.8v5.6h-1.8zM1822.2 406.3h1.8v5.6h-1.8zM1822.2 430.3h1.8v5.6h-1.8zM1834.2 406.3h1.8v5.6h-1.8zM1834.2 430.3h1.8v5.6h-1.8zM1848.2 406.3h1.8v5.6h-1.8zM1848.2 430.3h1.8v5.6h-1.8zM1862.2 406.3h1.8v5.6h-1.8zM1862.2 430.3h1.8v5.6h-1.8zM1876.2 406.3h1.8v5.6h-1.8zM1876.2 430.3h1.8v5.6h-1.8zM1890.2 406.3h1.8v5.6h-1.8zM1890.2 430.3h1.8v5.6h-1.8zM1904.2 406.3h1.8v5.6h-1.8zM1904.2 430.3h1.8v5.6h-1.8zM1916.2 406.3h1.8v5.6h-1.8zM1916.2 430.3h1.8v5.6h-1.8zM1930.2 406.3h1.8v5.6h-1.8zM1930.2 430.3h1.8v5.6h-1.8zM1944.2 406.3h1.8v5.6h-1.8zM1944.2 430.3h1.8v5.6h-1.8zM1958.2 406.3h1.8v5.6h-1.8zM1958.2 430.3h1.8v5.6h-1.8zM1972.2 406.3h1.8v5.6h-1.8zM1972.2 430.3h1.8v5.6h-1.8zM1984.2 406.3h1.8v5.6h-1.8zM1984.2 430.3h1.8v5.6h-1.8zM1998.2 406.3h1.8v5.6h-1.8zM1998.2 430.3h1.8v5.6h-1.8zM2012.2 406.3h1.8v5.6h-1.8zM2012.2 430.3h1.8v5.6h-1.8zM2026.2 406.3h1.8v5.6h-1.8zM2026.2 430.3h1.8v5.6h-1.8zM2040.2 406.3h1.8v5.6h-1.8zM2040.2 430.3h1.8v5.6h-1.8zM2052.2 406.3h1.8v5.6h-1.8zM2052.2 430.3h1.8v5.6h-1.8zM2066.2 406.3h1.8v5.6h-1.8zM2066.2 430.3h1.8v5.6h-1.8zM2080.2 406.3h1.8v5.6h-1.8zM2080.2 430.3h1.8v5.6h-1.8zM2094.2 406.3h1.8v5.6h-1.8zM2094.2 430.3h1.8v5.6h-1.8zM2108.2 406.3h1.8v5.6h-1.8zM2108.2 430.3h1.8v5.6h-1.8zM2120.2 406.3h1.8v5.6h-1.8zM2120.2 430.3h1.8v5.6h-1.8zM2134.2 406.3h1.8v5.6h-1.8zM2134.2 430.3h1.8v5.6h-1.8zM2148.2 406.3h1.8v5.6h-1.8zM2148.2 430.3h1.8v5.6h-1.8zM2162.2 406.3h1.8v5.6h-1.8zM2162.2 430.3h1.8v5.6h-1.8zM2176.2 406.3h1.8v5.6h-1.8zM2176.2 430.3h1.8v5.6h-1.8zM2190.2 406.3h1.8v5.6h-1.8zM2190.2 430.3h1.8v5.6h-1.8zM2202.2 406.3h1.8v5.6h-1.8zM2202.2 430.3h1.8v5.6h-1.8zM2216.2 406.3h1.8v5.6h-1.8zM2216.2 430.3h1.8v5.6h-1.8zM2230.2 406.3h1.8v5.6h-1.8zM2230.2 430.3h1.8v5.6h-1.8zM2244.2 406.3h1.8v5.6h-1.8zM2244.2 430.3h1.8v5.6h-1.8zM2258.2 406.3h1.8v5.6h-1.8zM2258.2 430.3h1.8v5.6h-1.8zM2270.2 406.3h1.8v5.6h-1.8zM2270.2 430.3h1.8v5.6h-1.8zM2284.2 406.3h1.8v5.6h-1.8zM2284.2 430.3h1.8v5.6h-1.8zM2298.2 406.3h1.8v5.6h-1.8zM2298.2 430.3h1.8v5.6h-1.8zM2312.2 406.3h1.8v5.6h-1.8zM2312.2 430.3h1.8v5.6h-1.8zM2326.2 406.3h1.8v5.6h-1.8zM2326.2 430.3h1.8v5.6h-1.8zM2338.2 406.3h1.8v5.6h-1.8zM2338.2 430.3h1.8v5.6h-1.8zM2352.2 406.3h1.8v5.6h-1.8zM2352.2 430.3h1.8v5.6h-1.8zM2366.2 406.3h1.8v5.6h-1.8zM2366.2 430.3h1.8v5.6h-1.8zM2380.2 406.3h1.8v5.6h-1.8zM2380.2 430.3h1.8v5.6h-1.8zM2394.2 406.3h1.8v5.6h-1.8zM2394.2 430.3h1.8v5.6h-1.8z"/>
<path fill="#3a7b86" d="M12 480h2398v34h-2398z"/>
<path fill="#6fe7fb" d="M10 518h1090v34h-1090zM1536 518h874v34h-874zM664 556h436v34h-436zM1536 556h654v34h-654zM1536 594h436v34h-436zM664 632h436v34h-436zM1536 632h436v34h-436z"/>
<path fill="#3c8a98" d="M10 518h1090v1.8h-1090zM10 550.2h1090v1.8h-1090zM10 518h1.8v34h-1.8zM1536 518h874v1.8h-874zM1536 550.2h874v1.8h-874zM1536 518h1.8v34h-1.8zM664 556h436v1.8h-436zM664 588.2h436v1.8h-436zM664 556h1.8v34h-1.8zM1536 556h654v1.8h-654zM1536 588.2h654v1.8h-654zM1536 556h1.8v34h-1.8zM1536 594h436v1.8h-436zM1536 626.2h436v1.8h-436zM1536 594h1.8v34h-1.8zM664 632h436v1.8h-436zM664 664.2h436v1.8h-436zM664 632h1.8v34h-1.8zM1536 632h436v1.8h-436zM1536 664.2h436v1.8h-436zM1536 632h1.8v34h-1.8z"/>
<path fill="#141414" d="M24.2 520.3h1.8v5.6h-1.8zM24.2 544.3h1.8v5.6h-1.8zM38.2 520.3h1.8v5.6h-1.8zM38.2 544.3h1.8v5.6h-1.8zM50.2 520.3h1.8v5.6h-1.8zM50.2 544.3h1.8v5.6h-1.8zM64.2 520.3h1.8v5.6h-1.8zM64.2 544.3h1.8v5.6h-1.8zM78.2 520.3h1.8v5.6h-1.8zM78.2 544.3h1.8v5.6h-1.8zM92.2 520.3h1.8v5.6h-1.8zM92.2 544.3h1.8v5.6h-1.8zM106.2 520.3h1.8v5.6h-1.8zM106.2 544.3h1.8v5.6h-1.8zM118.2 520.3h1.8v5.6h-1.8zM118.2 544.3h1.8v5.6h-1.8zM132.2 520.3h1.8v5.6h-1.8zM132.2 544.3h1.8v5.6h-1.8zM146.2 520.3h1.8v5.6h-1.8zM146.2 544.3h1.8v5.6h-1.8zM160.2 520.3h1.8v5.6h-1.8zM160.2 544.3h1.8v5.6h-1.8zM174.2 520.3h1.8v5.6h-1.8zM174.2 544.3h1.8v5.6h-1.8zM188.2 520.3h1.8v5.6h-1.8zM188.2 544.3h1.8v5.6h-1.8zM200.2 520.3h1.8v5.6h-1.8zM200.2 544.3h1.8v5.6h-1.8zM214.2 520.3h1.8v5.6h-1.8zM214.2 544.3h1.8v5.6h-1.8zM228.2 520.3h1.8v5.6h-1.8zM228.2 544.3h1.8v5.6h-1.8zM242.2 520.3h1.8v5.6h-1.8zM242.2 544.3h1.8v5.6h-1.8zM256.2 520.3h1.8v5.6h-1.8zM256.2 544.3h1.8v5.6h-1.8zM268.2 520.3h1.8v5.6h-1.8zM268.2 544.3h1.8v5.6h-1.8zM282.2 520.3h1.8v5.6h-1.8zM282.2 544.3h1.8v5.6h-1.8zM296.2 520.3h1.8v5.6h-1.8zM296.2 544.3h1.8v5.6h-1.8zM310.2 520.3h1.8v5.6h-1.8zM310.2 544.3h1.8v5.6h-1.8zM324.2 520.3h1.8v5.6h-1.8zM324.2 544.3h1.8v5.6h-1.8zM336.2 520.3h1.8v5.6h-1.8zM336.2 544.3h1.8v5.6h-1.8zM350.2 520.3h1.8v5.6h-1.8zM350.2 544.3h1.8v5.6h-1.8zM364.2 520.3h1.8v5.6h-1.8zM364.2 544.3h1.8v5.6h-1.8zM378.2 520.3h1.8v5.6h-1.8zM378.2 544.3h1.8v5.6h-1.8zM392.2 520.3h1.8v5.6h-1.8zM392.2 544.3h1.8v5.6h-1.8zM404.2 520.3h1.8v5.6h-1.8zM404.2 544.3h1.8v5.6h-1.8zM418.2 520.3h1.8v5.6h-1.8zM418.2 544.3h1.8v5.6h-1.8zM432.2 520.3h1.8v5.6h-1.8zM432.2 544.3h1.8v5.6h-1.8zM446.2 520.3h1.8v5.6h-1.8zM446.2 544.3h1.8v5.6h-1.8zM460.2 520.3h1.8v5.6h-1.8zM460.2 544.3h1.8v5.6h-1.8zM474.2 520.3h1.8v5.6h-1.8zM474.2 544.3h1.8v5.6h-1.8zM486.2 520.3h1.8v5.6h-1.8zM486.2 544.3h1.8v5.6h-1.8zM500.2 520.3h1.8v5.6h-1.8zM500.2 544.3h1.8v5.6h-1.8zM514.2 520.3h1.8v5.6h-1.8zM514.2 544.3h1.8v5.6h-1.8zM528.2 520.3h1.8v5.6h-1.8zM528.2 544.3h1.8v5.6h-1.8zM542.2 520.3h1.8v5.6h-1.8zM542.2 544.3h1.8v5.6h-1.8zM554.2 520.3h1.8v5.6h-1.8zM554.2 544.3h1.8v5.6h-1.8zM568.2 520.3h1.8v5.6h-1.8zM568.2 544.3h1.8v5.6h-1.8zM582.2 520.3h1.8v5.6h-1.8zM582.2 544.3h1.8v5.6h-1.8zM596.2 520.3h1.8v5.6h-1.8zM596.2 544.3h1.8v5.6h-1.8zM610.2 520.3h1.8v5.6h-1.8zM610.2 544.3h1.8v5.6h-1.8zM622.2 520.3h1.8v5.6h-1.8zM622.2 544.3h1.8v5.6h-1.8zM636.2 520.3h1.8v5.6h-1.8zM636.2 544.3h1.8v5.6h-1.8zM650.2 520.3h1.8v5.6h-1.8zM650.2 544.3h1.8v5.6h-1.8zM664.2 520.3h1.8v5.6h-1.8zM664.2 544.3h1.8v5.6h-1.8zM678.2 520.3h1.8v5.6h-1.8zM678.2 544.3h1.8v5.6h-1.8zM690.2 520.3h1.8v5.6h-1.8zM690.2 544.3h1.8v5.6h-1.8zM704.2 520.3h1.8v5.6h-1.8zM704.2 544.3h1.8v5.6h-1.8zM718.2 520.3h1.8v5.6h-1.8zM718.2 544.3h1.8v5.6h-1.8zM732.2 520.3h1.8v5.6h-1.8zM732.2 544.3h1.8v5.6h-1.8zM746.2 520.3h1.8v5.6h-1.8zM746.2 544.3h1.8v5.6h-1.8zM760.2 520.3h1.8v5.6h-1.8zM760.2 544.3h1.8v5.6h-1.8zM772.2 520.3h1.8v5.6h-1.8zM772.2 544.3h1.8v5.6h-1.8zM786.2 520.3h1.8v5.6h-1.8zM786.2 544.3h1.8v5.6h-1.8zM800.2 520.3h1.8v5.6h-1.8zM800.2 544.3h1.8v5.6h-1.8zM814.2 520.3h1.8v5.6h-1.8zM814.2 544.3h1.8v5.6h-1.8zM828.2 520.3h1.8v5.6h-1.8zM828.2 544.3h1.8v5.6h-1.8zM840.2 520.3h1.8v5.6h-1.8zM840.2 544.3h1.8v5.6h-1.8zM854.2 520.3h1.8v5.6h-1.8zM854.2 544.3h1.8v5.6h-1.8zM868.2 520.3h1.8v5.6h-1.8zM868.2 544.3h1.8v5.6h-1.8zM882.2 520.3h1.8v5.6h-1.8zM882.2 544.3h1.8v5.6h-1.8zM896.2 520.3h1.8v5.6h-1.8zM896.2 544.3h1.8v5.6h-1.8zM908.2 520.3h1.8v5.6h-1.8zM908.2 544.3h1.8v5.6h-1.8zM922.2 520.3h1.8v5.6h-1.8zM922.2 544.3h1.8v5.6h-1.8zM936.2 520.3h1.8v5.6h-1.8zM936.2 544.3h1.8v5.6h-1.8zM950.2 520.3h1.8v5.6h-1.8zM950.2 544.3h1.8v5.6h-1.8zM964.2 520.3h1.8v5.6h-1.8zM964.2 544.3h1.8v5.6h-1.8zM976.2 520.3h1.8v5.6h-1.8zM976.2 544.3h1.8v5.6h-1.8zM990.2 520.3h1.8v5.6h-1.8zM990.2 544.3h1.8v5.6h-1.8zM1004.2 520.3h1.8v5.6h-1.8zM1004.2 544.3h1.8v5.6h-1.8zM1018.2 520.3h1.8v5.6h-1.8zM1018.2 544.3h1.8v5.6h-1.8zM1032.2 520.3h1.8v5.6h-1.8zM1032.2 544.3h1.8v5.6h-1.8zM1046.2 520.3h1.8v5.6h-1.8zM1046.2 544.3h1.8v5.6h-1.8zM1058.2 520.3h1.8v5.6h-1.8zM1058.2 544.3h1.8v5.6h-1.8zM1072.2 520.3h1.8v5.6h-1.8zM1072.2 544.3h1.8v5.6h-1.8zM1086.2 520.3h1.8v5.6h-1.8zM1086.2 544.3h1.8v5.6h-1.8zM1548.2 520.3h1.8v5.6h-1.8zM1548.2 544.3h1.8v5.6h-1.8zM1562.2 520.3h1.8v5.6h-1.8zM1562.2 544.3h1.8v5.6h-1.8zM1576.2 520.3h1.8v5.6h-1.8zM1576.2 544.3h1.8v5.6h-1.8zM1590.2 520.3h1.8v5.6h-1.8zM1590.2 544.3h1.8v5.6h-1.8zM1604.2 520.3h1.8v5.6h-1.8zM1604.2 544.3h1.8v5.6h-1.8zM1618.2 520.3h1.8v5.6h-1.8zM1618.2 544.3h1.8v5.6h-1.8zM1630.2 520.3h1.8v5.6h-1.8zM1630.2 544.3h1.8v5.6h-1.8zM1644.2 520.3h1.8v5.6h-1.8zM1644.2 544.3h1.8v5.6h-1.8zM1658.2 520.3h1.8v5.6h-1.8zM1658.2 544.3h1.8v5.6h-1.8zM1672.2 520.3h1.8v5.6h-1.8zM1672.2 544.3h1.8v5.6h-1.8zM1686.2 520.3h1.8v5.6h-1.8zM1686.2 544.3h1.8v5.6h-1.8zM1698.2 520.3h1.8v5.6h-1.8zM1698.2 544.3h1.8v5.6h-1.8zM1712.2 520.3h1.8v5.6h-1.8zM1712.2 544.3h1.8v5.6h-1.8zM1726.2 520.3h1.8v5.6h-1.8zM1726.2 544.3h1.8v5.6h-1.8zM1740.2 520.3h1.8v5.6h-1.8zM1740.2 544.3h1.8v5.6h-1.8zM1754.2 520.3h1.8v5.6h-1.8zM1754.2 544.3h1.8v5.6h-1.8zM1766.2 520.3h1.8v5.6h-1.8zM1766.2 544.3h1.8v5.6h-1.8zM1780.2 520.3h1.8v5.6h-1.8zM1780.2 544.3h1.8v5.6h-1.8zM1794.2 520.3h1.8v5.6h-1.8zM1794.2 544.3h1.8v5.6h-1.8zM1808.2 520.3h1.8v5.6h-1.8zM1808.2 544.3h1.8v5.6h-1.8zM1822.2 520.3h1.8v5.6h-1.8zM1822.2 544.3h1.8v5.6h-1.8zM1834.2 520.3h1.8v5.6h-1.8zM1834.2 544.3h1.8v5.6h-1.8zM1848.2 520.3h1.8v5.6h-1.8zM1848.2 544.3h1.8v5.6h-1.8zM1862.2 520.3h1.8v5.6h-1.8zM1862.2 544.3h1.8v5.6h-1.8zM1876.2 520.3h1.8v5.6h-1.8zM1876.2 544.3h1.8v5.6h-1.8zM1890.2 520.3h1.8v5.6h-1.8zM1890.2 544.3h1.8v5.6h-1.8zM1904.2 520.3h1.8v5.6h-1.8zM1904.2 544.3h1.8v5.6h-1.8zM1916.2 520.3h1.8v5.6h-1.8zM1916.2 544.3h1.8v5.6h-1.8zM1930.2 520.3h1.8v5.6h-1.8zM1930.2 544.3h1.8v5.6h-1.8zM1944.2 520.3h1.8v5.6h-1.8zM1944.2 544.3h1.8v5.6h-1.8zM1958.2 520.3h1.8v5.6h-1.8zM1958.2 544.3h1.8v5.6h-1.8zM1972.2 520.3h1.8v5.6h-1.8zM1972.2 544.3h1.8v5.6h-1.8zM1984.2 520.3h1.8v5.6h-1.8zM1984.2 544.3h1.8v5.6h-1.8zM1998.2 520.3h1.8v5.6h-1.8zM1998.2 544.3h1.8v5.6h-1.8zM2012.2 520.3h1.8v5.6h-1.8zM2012.2 544.3h1.8v5.6h-1.8zM2026.2 520.3h1.8v5.6h-1.8zM2026.2 544.3h1.8v5.6h-1.8zM2040.2 520.3h1.8v5.6h-1.8zM2040.2 544.3h1.8v5.6h-1.8zM2052.2 520.3h1.8v5.6h-1.8zM2052.2 544.3h1.8v5.6h-1.8zM2066.2 520.3h1.8v5.6h-1.8zM2066.2 544.3h1.8v5.6h-1.8zM2080.2 520.3h1.8v5.6h-1.8zM2080.2 544.3h1.8v5.6h-1.8zM2094.2 520.3h1.8v5.6h-1.8zM2094.2 544.3h1.8v5.6h-1.8zM2108.2 520.3h1.8v5.6h-1.8zM2108.2 544.3h1.8v5.6h-1.8zM2120.2 520.3h1.8v5.6h-1.8zM2120.2 544.3h1.8v5.6h-1.8zM2134.2 520.3h1.8v5.6h-1.8zM2134.2 544.3h1.8v5.6h-1.8zM2148.2 520.3h1.8v5.6h-1.8zM2148.2 544.3h1.8v5.6h-1.8zM2162.2 520.3h1.8v5.6h-1.8zM2162.2 544.3h1.8v5.6h-1.8zM2176.2 520.3h1.8v5.6h-1.8zM2176.2 544.3h1.8v5.6h-1.8zM2190.2 520.3h1.8v5.6h-1.8zM2190.2 544.3h1.8v5.6h-1.8zM2202.2 520.3h1.8v5.6h-1.8zM2202.2 544.3h1.8v5.6h-1.8zM2216.2 520.3h1.8v5.6h-1.8zM2216.2 544.3h1.8v5.6h-1.8zM2230.2 520.3h1.8v5.6h-1.8zM2230.2 544.3h1.8v5.6h-1.8zM2244.2 520.3h1.8v5.6h-1.8zM2244.2 544.3h1.8v5.6h-1.8zM2258.2 520.3h1.8v5.6h-1.8zM2258.2 544.3h1.8v5.6h-1.8zM2270.2 520.3h1.8v5.6h-1.8zM2270.2 544.3h1.8v5.6h-1.8zM2284.2 520.3h1.8v5.6h-1.8zM2284.2 544.3h1.8v5.6h-1.8zM2298.2 520.3h1.8v5.6h-1.8zM2298.2 544.3h1.8v5.6h-1.8zM2312.2 520.3h1.8v5.6h-1.8zM2312.2 544.3h1.8v5.6h-1.8zM2326.2 520.3h1.8v5.6h-1.8zM2326.2 544.3h1.8v5.6h-1.8zM2338.2 520.3h1.8v5.6h-1.8zM2338.2 544.3h1.8v5.6h-1.8zM2352.2 520.3h1.8v5.6h-1.8zM2352.2 544.3h1.8v5.6h-1.8zM2366.2 520.3h1.8v5.6h-1.8zM2366.2 544.3h1.8v5.6h-1.8zM2380.2 520.3h1.8v5.6h-1.8zM2380.2 544.3h1.8v5.6h-1.8zM2394.2 520.3h1.8v5.6h-1.8zM2394.2 544.3h1.8v5.6h-1.8zM678.2 558.3h1.8v5.6h-1.8zM678.2 582.3h1.8v5.6h-1.8zM690.2 558.3h1.8v5.6h-1.8zM690.2 582.3h1.8v5.6h-1.8zM704.2 558.3h1.8v5.6h-1.8zM704.2 582.3h1.8v5.6h-1.8zM718.2 558.3h1.8v5.6h-1.8zM718.2 582.3h1.8v5.6h-1.8zM732.2 558.3h1.8v5.6h-1.8zM732.2 582.3h1.8v5.6h-1.8zM746.2 558.3h1.8v5.6h-1.8zM746.2 582.3h1.8v5.6h-1.8zM760.2 558.3h1.8v5.6h-1.8zM760.2 582.3h1.8v5.6h-1.8zM772.2 558.3h1.8v5.6h-1.8zM772.2 582.3h1.8v5.6h-1.8zM786.2 558.3h1.8v5.6h-1.8zM786.2 582.3h1.8v5.6h-1.8zM800.2 558.3h1.8v5.6h-1.8zM800.2 582.3h1.8v5.6h-1.8zM814.2 558.3h1.8v5.6h-1.8zM814.2 582.3h1.8v5.6h-1.8zM828.2 558.3h1.8v5.6h-1.8zM828.2 582.3h1.8v5.6h-1.8zM840.2 558.3h1.8v5.6h-1.8zM840.2 582.3h1.8v5.6h-1.8zM854.2 558.3h1.8v5.6h-1.8zM854.2 582.3h1.8v5.6h-1.8zM868.2 558.3h1.8v5.6h-1.8zM868.2 582.3h1.8v5.6h-1.8zM882.2 558.3h1.8v5.6h-1.8zM882.2 582.3h1.8v5.6h-1.8zM896.2 558.3h1.8v5.6h-1.8zM896.2 582.3h1.8v5.6h-1.8zM908.2 558.3h1.8v5.6h-1.8zM908.2 582.3h1.8v5.6h-1.8zM922.2 558.3h1.8v5.6h-1.8zM922.2 582.3h1.8v5.6h-1.8zM936.2 558.3h1.8v5.6h-1.8zM936.2 582.3h1.8v5.6h-1.8zM950.2 558.3h1.8v5.6h-1.8zM950.2 582.3h1.8v5.6h-1.8zM964.2 558.3h1.8v5.6h-1.8zM964.2 582.3h1.8v5.6h-1.8zM976.2 558.3h1.8v5.6h-1.8zM976.2 582.3h1.8v5.6h-1.8zM990.2 558.3h1.8v5.6h-1.8zM990.2 582.3h1.8v5.6h-1.8zM1004.2 558.3h1.8v5.6h-1.8zM1004.2 582.3h1.8v5.6h-1.8zM1018.2 558.3h1.8v5.6h-1.8zM1018.2 582.3h1.8v5.6h-1.8zM1032.2 558.3h1.8v5.6h-1.8zM1032.2 582.3h1.8v5.6h-1.8zM1046.2 558.3h1.8v5.6h-1.8zM1046.2 582.3h1.8v5.6h-1.8zM1058.2 558.3h1.8v5.6h-1.8zM1058.2 582.3h1.8v5.6h-1.8zM1072.2 558.3h1.8v5.6h-1.8zM1072.2 582.3h1.8v5.6h-1.8zM1086.2 558.3h1.8v5.6h-1.8zM1086.2 582.3h1.8v5.6h-1.8zM1548.2 558.3h1.8v5.6h-1.8zM1548.2 582.3h1.8v5.6h-1.8zM1562.2 558.3h1.8v5.6h-1.8zM1562.2 582.3h1.8v5.6h-1.8zM1576.2 558.3h1.8v5.6h-1.8zM1576.2 582.3h1.8v5.6h-1.8zM1590.2 558.3h1.8v5.6h-1.8zM1590.2 582.3h1.8v5.6h-1.8zM1604.2 558.3h1.8v5.6h-1.8zM1604.2 582.3h1.8v5.6h-1.8zM1618.2 558.3h1.8v5.6h-1.8zM1618.2 582.3h1.8v5.6h-1.8zM1630.2 558.3h1.8v5.6h-1.8zM1630.2 582.3h1.8v5.6h-1.8zM1644.2 558.3h1.8v5.6h-1.8zM1644.2 582.3h1.8v5.6h-1.8zM1658.2 558.3h1.8v5.6h-1.8zM1658.2 582.3h1.8v5.6h-1.8zM1672.2 558.3h1.8v5.6h-1.8zM1672.2 582.3h1.8v5.6h-1.8zM1686.2 558.3h1.8v5.6h-1.8zM1686.2 582.3h1.8v5.6h-1.8zM1698.2 558.3h1.8v5.6h-1.8zM1698.2 582.3h1.8v5.6h-1.8zM1712.2 558.3h1.8v5.6h-1.8zM1712.2 582.3h1.8v5.6h-1.8zM1726.2 558.3h1.8v5.6h-1.8zM1726.2 582.3h1.8v5.6h-1.8zM1740.2 558.3h1.8v5.6h-1.8zM1740.2 582.3h1.8v5.6h-1.8zM1754.2 558.3h1.8v5.6h-1.8zM1754.2 582.3h1.8v5.6h-1.8zM1766.2 558.3h1.8v5.6h-1.8zM1766.2 582.3h1.8v5.6h-1.8zM1780.2 558.3h1.8v5.6h-1.8zM1780.2 582.3h1.8v5.6h-1.8zM1794.2 558.3h1.8v5.6h-1.8zM1794.2 582.3h1.8v5.6h-1.8zM1808.2 558.3h1.8v5.6h-1.8zM1808.2 582.3h1.8v5.6h-1.8zM1822.2 558.3h1.8v5.6h-1.8zM1822.2 582.3h1.8v5.6h-1.8zM1834.2 558.3h1.8v5.6h-1.8zM1834.2 582.3h1.8v5.6h-1.8zM1848.2 558.3h1.8v5.6h-1.8zM1848.2 582.3h1.8v5.6h-1.8zM1862.2 558.3h1.8v5.6h-1.8zM1862.2 582.3h1.8v5.6h-1.8zM1876.2 558.3h1.8v5.6h-1.8zM1876.2 582.3h1.8v5.6h-1.8zM1890.2 558.3h1.8v5.6h-1.8zM1890.2 582.3h1.8v5.6h-1.8zM1904.2 558.3h1.8v5.6h-1.8zM1904.2 582.3h1.8v5.6h-1.8zM1916.2 558.3h1.8v5.6h-1.8zM1916.2 582.3h1.8v5.6h-1.8zM1930.2 558.3h1.8v5.6h-1.8zM1930.2 582.3h1.8v5.6h-1.8zM1944.2 558.3h1.8v5.6h-1.8zM1944.2 582.3h1.8v5.6h-1.8zM1958.2 558.3h1.8v5.6h-1.8zM1958.2 582.3h1.8v5.6h-1.8zM1972.2 558.3h1.8v5.6h-1.8zM1972.2 582.3h1.8v5.6h-1.8zM1984.2 558.3h1.8v5.6h-1.8zM1984.2 582.3h1.8v5.6h-1.8zM1998.2 558.3h1.8v5.6h-1.8zM1998.2 582.3h1.8v5.6h-1.8zM2012.2 558.3h1.8v5.6h-1.8zM2012.2 582.3h1.8v5.6h-1.8zM2026.2 558.3h1.8v5.6h-1.8zM2026.2 582.3h1.8v5.6h-1.8zM2040.2 558.3h1.8v5.6h-1.8zM2040.2 582.3h1.8v5.6h-1.8zM2052.2 558.3h1.8v5.6h-1.8zM2052.2 582.3h1.8v5.6h-1.8zM2066.2 558.3h1.8v5.6h-1.8zM2066.2 582.3h1.8v5.6h-1.8zM2080.2 558.3h1.8v5.6h-1.8zM2080.2 582.3h1.8v5.6h-1.8zM2094.2 558.3h1.8v5.6h-1.8zM2094.2 582.3h1.8v5.6h-1.8zM2108.2 558.3h1.8v5.6h-1.8zM2108.2 582.3h1.8v5.6h-1.8zM2120.2 558.3h1.8v5.6h-1.8zM2120.2 582.3h1.8v5.6h-1.8zM2134.2 558.3h1.8v5.6h-1.8zM2134.2 582.3h1.8v5.6h-1.8zM2148.2 558.3h1.8v5.6h-1.8zM2148.2 582.3h1.8v5.6h-1.8zM2162.2 558.3h1.8v5.6h-1.8zM2162.2 582.3h1.8v5.6h-1.8zM2176.2 558.3h1.8v5.6h-1.8zM2176.2 582.3h1.8v5.6h-1.8zM1548.2 596.3h1.8v5.6h-1.8zM1548.2 620.3h1.8v5.6h-1.8zM1562.2 596.3h1.8v5.6h-1.8zM1562.2 620.3h1.8v5.6h-1.8zM1576.2 596.3h1.8v5.6h-1.8zM1576.2 620.3h1.8v5.6h-1.8zM1590.2 596.3h1.8v5.6h-1.8zM1590.2 620.3h1.8v5.6h-1.8zM1604.2 596.3h1.8v5.6h-1.8zM1604.2 620.3h1.8v5.6h-1.8zM1618.2 596.3h1.8v5.6h-1.8zM1618.2 620.3h1.8v5.6h-1.8zM1630.2 596.3h1.8v5.6h-1.8zM1630.2 620.3h1.8v5.6h-1.8zM1644.2 596.3h1.8v5.6h-1.8zM1644.2 620.3h1.8v5.6h-1.8zM1658.2 596.3h1.8v5.6h-1.8zM1658.2 620.3h1.8v5.6h-1.8zM1672.2 596.3h1.8v5.6h-1.8zM1672.2 620.3h1.8v5.6h-1.8zM1686.2 596.3h1.8v5.6h-1.8zM1686.2 620.3h1.8v5.6h-1.8zM1698.2 596.3h1.8v5.6h-1.8zM1698.2 620.3h1.8v5.6h-1.8zM1712.2 596.3h1.8v5.6h-1.8zM1712.2 620.3h1.8v5.6h-1.8zM1726.2 596.3h1.8v5.6h-1.8zM1726.2 620.3h1.8v5.6h-1.8zM1740.2 596.3h1.8v5.6h-1.8zM1740.2 620.3h1.8v5.6h-1.8zM1754.2 596.3h1.8v5.6h-1.8zM1754.2 620.3h1.8v5.6h-1.8zM1766.2 596.3h1.8v5.6h-1.8zM1766.2 620.3h1.8v5.6h-1.8zM1780.2 596.3h1.8v5.6h-1.8zM1780.2 620.3h1.8v5.6h-1.8zM1794.2 596.3h1.8v5.6h-1.8zM1794.2 620.3h1.8v5.6h-1.8zM1808.2 596.3h1.8v5.6h-1.8zM1808.2 620.3h1.8v5.6h-1.8zM1822.2 596.3h1.8v5.6h-1.8zM1822.2 620.3h1.8v5.6h-1.8zM1834.2 596.3h1.8v5.6h-1.8zM1834.2 620.3h1.8v5.6h-1.8zM1848.2 596.3h1.8v5.6h-1.8zM1848.2 620.3h1.8v5.6h-1.8zM1862.2 596.3h1.8v5.6h-1.8zM1862.2 620.3h1.8v5.6h-1.8zM1876.2 596.3h1.8v5.6h-1.8zM1876.2 620.3h1.8v5.6h-1.8zM1890.2 596.3h1.8v5.6h-1.8zM1890.2 620.3h1.8v5.6h-1.8zM1904.2 596.3h1.8v5.6h-1.8zM1904.2 620.3h1.8v5.6h-1.8zM1916.2 596.3h1.8v5.6h-1.8zM1916.2 620.3h1.8v5.6h-1.8zM1930.2 596.3h1.8v5.6h-1.8zM1930.2 620.3h1.8v5.6h-1.8zM1944.2 596.3h1.8v5.6h-1.8zM1944.2 620.3h1.8v5.6h-1.8zM1958.2 596.3h1.8v5.6h-1.8zM1958.2 620.3h1.8v5.6h-1.8zM718.2 634.3h1.8v5.6h-1.8zM718.2 658.3h1.8v5.6h-1.8zM772.2 634.3h1.8v5.6h-1.8zM772.2 658.3h1.8v5.6h-1.8zM828.2 634.3h1.8v5.6h-1.8zM828.2 658.3h1.8v5.6h-1.8zM882.2 634.3h1.8v5.6h-1.8zM882.2 658.3h1.8v5.6h-1.8zM936.2 634.3h1.8v5.6h-1.8zM936.2 658.3h1.8v5.6h-1.8zM990.2 634.3h1.8v5.6h-1.8zM990.2 658.3h1.8v5.6h-1.8zM1046.2 634.3h1.8v5.6h-1.8zM1046.2 658.3h1.8v5.6h-1.8zM1590.2 634.3h1.8v5.6h-1.8zM1590.2 658.3h1.8v5.6h-1.8zM1644.2 634.3h1.8v5.6h-1.8zM1644.2 658.3h1.8v5.6h-1.8zM1698.2 634.3h1.8v5.6h-1.8zM1698.2 658.3h1.8v5.6h-1.8zM1754.2 634.3h1.8v5.6h-1.8zM1754.2 658.3h1.8v5.6h-1.8zM1808.2 634.3h1.8v5.6h-1.8zM1808.2 658.3h1.8v5.6h-1.8zM1862.2 634.3h1.8v5.6h-1.8zM1862.2 658.3h1.8v5.6h-1.8zM1916.2 634.3h1.8v5.6h-1.8zM1916.2 658.3h1.8v5.6h-1.8z"/>
<path fill="#6fe7fb" d="M10 670h2400v70h-2400z"/>
<path fill="#3c8a98" d="M10 670h2400v1.8h-2400zM10 670h1.8v70h-1.8zM10 702h2400v1.8h-2400zM64 703.8h1.8v36.2h-1.8zM118 703.8h1.8v36.2h-1.8zM174 703.8h1.8v36.2h-1.8zM228 703.8h1.8v36.2h-1.8zM282 703.8h1.8v36.2h-1.8zM336 703.8h1.8v36.2h-1.8zM392 703.8h1.8v36.2h-1.8zM446 703.8h1.8v36.2h-1.8zM500 703.8h1.8v36.2h-1.8zM554 703.8h1.8v36.2h-1.8zM610 703.8h1.8v36.2h-1.8zM664 703.8h1.8v36.2h-1.8zM718 703.8h1.8v36.2h-1.8zM772 703.8h1.8v36.2h-1.8zM828 703.8h1.8v36.2h-1.8zM882 703.8h1.8v36.2h-1.8zM936 703.8h1.8v36.2h-1.8zM990 703.8h1.8v36.2h-1.8zM1046 703.8h1.8v36.2h-1.8zM1100 703.8h1.8v36.2h-1.8zM1154 703.8h1.8v36.2h-1.8zM1208 703.8h1.8v36.2h-1.8zM1262 703.8h1.8v36.2h-1.8zM1318 703.8h1.8v36.2h-1.8zM1372 703.8h1.8v36.2h-1.8zM1426 703.8h1.8v36.2h-1.8zM1480 703.8h1.8v36.2h-1.8zM1536 703.8h1.8v36.2h-1.8zM1590 703.8h1.8v36.2h-1.8zM1644 703.8h1.8v36.2h-1.8zM1698 703.8h1.8v36.2h-1.8zM1754 703.8h1.8v36.2h-1.8zM1808 703.8h1.8v36.2h-1.8zM1862 703.8h1.8v36.2h-1.8zM1916 703.8h1.8v36.2h-1.8zM1972 703.8h1.8v36.2h-1.8zM2026 703.8h1.8v36.2h-1.8zM2080 703.8h1.8v36.2h-1.8zM2134 703.8h1.8v36.2h-1.8zM2190 703.8h1.8v36.2h-1.8zM2244 703.8h1.8v36.2h-1.8zM2298 703.8h1.8v36.2h-1.8zM2352 703.8h1.8v36.2h-1.8zM10 670h2v70h-2z"/>
<path fill="#141414" d="M38.2 671.8h1.8v6h-1.8zM38.2 734h1.8v6h-1.8zM92.2 671.8h1.8v6h-1.8zM92.2 734h1.8v6h-1.8zM146.2 671.8h1.8v6h-1.8zM146.2 734h1.8v6h-1.8zM200.2 671.8h1.8v6h-1.8zM200.2 734h1.8v6h-1.8zM256.2 671.8h1.8v6h-1.8zM256.2 734h1.8v6h-1.8zM310.2 671.8h1.8v6h-1.8zM310.2 734h1.8v6h-1.8zM364.2 671.8h1.8v6h-1.8zM364.2 734h1.8v6h-1.8zM418.2 671.8h1.8v6h-1.8zM418.2 734h1.8v6h-1.8zM474.2 671.8h1.8v6h-1.8zM474.2 734h1.8v6h-1.8zM528.2 671.8h1.8v6h-1.8zM528.2 734h1.8v6h-1.8zM582.2 671.8h1.8v6h-1.8zM582.2 734h1.8v6h-1.8zM636.2 671.8h1.8v6h-1.8zM636.2 734h1.8v6h-1.8zM690.2 671.8h1.8v6h-1.8zM690.2 734h1.8v6h-1.8zM746.2 671.8h1.8v6h-1.8zM746.2 734h1.8v6h-1.8zM800.2 671.8h1.8v6h-1.8zM800.2 734h1.8v6h-1.8zM854.2 671.8h1.8v6h-1.8zM854.2 734h1.8v6h-1.8zM908.2 671.8h1.8v6h-1.8zM908.2 734h1.8v6h-1.8zM964.2 671.8h1.8v6h-1.8zM964.2 734h1.8v6h-1.8zM1018.2 671.8h1.8v6h-1.8zM1018.2 734h1.8v6h-1.8zM1072.2 671.8h1.8v6h-1.8zM1072.2 734h1.8v6h-1.8zM1126.2 671.8h1.8v6h-1.8zM1126.2 734h1.8v6h-1.8zM1182.2 671.8h1.8v6h-1.8zM1182.2 734h1.8v6h-1.8zM1236.2 671.8h1.8v6h-1.8zM1236.2 734h1.8v6h-1.8zM1290.2 671.8h1.8v6h-1.8zM1290.2 734h1.8v6h-1.8zM1344.2 671.8h1.8v6h-1.8zM1344.2 734h1.8v6h-1.8zM1400.2 671.8h1.8v6h-1.8zM1400.2 734h1.8v6h-1.8zM1454.2 671.8h1.8v6h-1.8zM1454.2 734h1.8v6h-1.8zM1508.2 671.8h1.8v6h-1.8zM1508.2 734h1.8v6h-1.8zM1562.2 671.8h1.8v6h-1.8zM1562.2 734h1.8v6h-1.8zM1618.2 671.8h1.8v6h-1.8zM1618.2 734h1.8v6h-1.8zM1672.2 671.8h1.8v6h-1.8zM1672.2 734h1.8v6h-1.8zM1726.2 671.8h1.8v6h-1.8zM1726.2 734h1.8v6h-1.8zM1780.2 671.8h1.8v6h-1.8zM1780.2 734h1.8v6h-1.8zM1834.2 671.8h1.8v6h-1.8zM1834.2 734h1.8v6h-1.8zM1890.2 671.8h1.8v6h-1.8zM1890.2 734h1.8v6h-1.8zM1944.2 671.8h1.8v6h-1.8zM1944.2 734h1.8v6h-1.8zM1998.2 671.8h1.8v6h-1.8zM1998.2 734h1.8v6h-1.8zM2052.2 671.8h1.8v6h-1.8zM2052.2 734h1.8v6h-1.8zM2108.2 671.8h1.8v6h-1.8zM2108.2 734h1.8v6h-1.8zM2162.2 671.8h1.8v6h-1.8zM2162.2 734h1.8v6h-1.8zM2216.2 671.8h1.8v6h-1.8zM2216.2 734h1.8v6h-1.8zM2270.2 671.8h1.8v6h-1.8zM2270.2 734h1.8v6h-1.8zM2326.2 671.8h1.8v6h-1.8zM2326.2 734h1.8v6h-1.8zM2380.2 671.8h1.8v6h-1.8zM2380.2 734h1.8v6h-1.8zM38 712h2v16h-2zM90.4 712h3.8v16h-3.8zM144.4 712h3.8v16h-3.8zM198.4 712h3.8v16h-3.8zM256 712h2v16h-2zM308.4 712h3.8v16h-3.8zM362.4 712h3.8v16h-3.8zM416.4 712h3.8v16h-3.8zM474 712h2v16h-2zM526.4 712h3.8v16h-3.8zM580.4 712h3.8v16h-3.8zM634.4 712h3.8v16h-3.8zM690 712h2v16h-2zM744.4 712h3.8v16h-3.8zM798.4 712h3.8v16h-3.8zM852.4 712h3.8v16h-3.8zM908 712h2v16h-2zM962.4 712h3.8v16h-3.8zM1016.4 712h3.8v16h-3.8zM1070.4 712h3.8v16h-3.8zM1126 712h2v16h-2zM1180.4 712h3.8v16h-3.8zM1234.4 712h3.8v16h-3.8zM1288.4 712h3.8v16h-3.8zM1344 712h2v16h-2zM1398.4 712h3.8v16h-3.8zM1452.4 712h3.8v16h-3.8zM1506.4 712h3.8v16h-3.8zM1562 712h2v16h-2zM1616.4 712h3.8v16h-3.8zM1670.4 712h3.8v16h-3.8zM1724.4 712h3.8v16h-3.8zM1780 712h2v16h-2zM1832.4 712h3.8v16h-3.8zM1888.4 712h3.8v16h-3.8zM1942.4 712h3.8v16h-3.8zM1998 712h2v16h-2zM2050.4 712h3.8v16h-3.8zM2106.4 712h3.8v16h-3.8zM2160.4 712h3.8v16h-3.8zM2216 712h2v16h-2zM2268.4 712h3.8v16h-3.8zM2324.4 712h3.8v16h-3.8zM2378.4 712h3.8v16h-3.8z"/>
<path fill="#6fe7fb" d="M10 744h2400v70h-2400z"/>
<path fill="#3c8a98" d="M10 744h2400v1.8h-2400zM10 744h1.8v70h-1.8zM10 776h2400v1.8h-2400zM64 777.8h1.8v36.2h-1.8zM118 777.8h1.8v36.2h-1.8zM174 777.8h1.8v36.2h-1.8zM228 777.8h1.8v36.2h-1.8zM282 777.8h1.8v36.2h-1.8zM336 777.8h1.8v36.2h-1.8zM392 777.8h1.8v36.2h-1.8zM446 777.8h1.8v36.2h-1.8zM500 777.8h1.8v36.2h-1.8zM554 777.8h1.8v36.2h-1.8zM610 777.8h1.8v36.2h-1.8zM664 777.8h1.8v36.2h-1.8zM718 777.8h1.8v36.2h-1.8zM772 777.8h1.8v36.2h-1.8zM828 777.8h1.8v36.2h-1.8zM882 777.8h1.8v36.2h-1.8zM936 777.8h1.8v36.2h-1.8zM990 777.8h1.8v36.2h-1.8zM1046 777.8h1.8v36.2h-1.8zM1100 777.8h1.8v36.2h-1.8zM1154 777.8h1.8v36.2h-1.8zM1208 777.8h1.8v36.2h-1.8zM1262 777.8h1.8v36.2h-1.8zM1318 777.8h1.8v36.2h-1.8zM1372 777.8h1.8v36.2h-1.8zM1426 777.8h1.8v36.2h-1.8zM1480 777.8h1.8v36.2h-1.8zM1536 777.8h1.8v36.2h-1.8zM1590 777.8h1.8v36.2h-1.8zM1644 777.8h1.8v36.2h-1.8zM1698 777.8h1.8v36.2h-1.8zM1754 777.8h1.8v36.2h-1.8zM1808 777.8h1.8v36.2h-1.8zM1862 777.8h1.8v36.2h-1.8zM1916 777.8h1.8v36.2h-1.8zM1972 777.8h1.8v36.2h-1.8zM2026 777.8h1.8v36.2h-1.8zM2080 777.8h1.8v36.2h-1.8zM2134 777.8h1.8v36.2h-1.8zM2190 777.8h1.8v36.2h-1.8zM2244 777.8h1.8v36.2h-1.8zM2298 777.8h1.8v36.2h-1.8zM2352 777.8h1.8v36.2h-1.8z"/>
<path fill="#141414" d="M64.2 745.8h1.8v6h-1.8zM64.2 808h1.8v6h-1.8zM118.2 745.8h1.8v6h-1.8zM118.2 808h1.8v6h-1.8zM174.2 745.8h1.8v6h-1.8zM174.2 808h1.8v6h-1.8zM228.2 745.8h1.8v6h-1.8zM228.2 808h1.8v6h-1.8zM282.2 745.8h1.8v6h-1.8zM282.2 808h1.8v6h-1.8zM336.2 745.8h1.8v6h-1.8zM336.2 808h1.8v6h-1.8zM392.2 745.8h1.8v6h-1.8zM392.2 808h1.8v6h-1.8zM446.2 745.8h1.8v6h-1.8zM446.2 808h1.8v6h-1.8zM500.2 745.8h1.8v6h-1.8zM500.2 808h1.8v6h-1.8zM554.2 745.8h1.8v6h-1.8zM554.2 808h1.8v6h-1.8zM610.2 745.8h1.8v6h-1.8zM610.2 808h1.8v6h-1.8zM664.2 745.8h1.8v6h-1.8zM664.2 808h1.8v6h-1.8zM718.2 745.8h1.8v6h-1.8zM718.2 808h1.8v6h-1.8zM772.2 745.8h1.8v6h-1.8zM772.2 808h1.8v6h-1.8zM828.2 745.8h1.8v6h-1.8zM828.2 808h1.8v6h-1.8zM882.2 745.8h1.8v6h-1.8zM882.2 808h1.8v6h-1.8zM936.2 745.8h1.8v6h-1.8zM936.2 808h1.8v6h-1.8zM990.2 745.8h1.8v6h-1.8zM990.2 808h1.8v6h-1.8zM1046.2 745.8h1.8v6h-1.8zM1046.2 808h1.8v6h-1.8zM1100.2 745.8h1.8v6h-1.8zM1100.2 808h1.8v6h-1.8zM1154.2 745.8h1.8v6h-1.8zM1154.2 808h1.8v6h-1.8zM1208.2 745.8h1.8v6h-1.8zM1208.2 808h1.8v6h-1.8zM1262.2 745.8h1.8v6h-1.8zM1262.2 808h1.8v6h-1.8zM1318.2 745.8h1.8v6h-1.8zM1318.2 808h1.8v6h-1.8zM1372.2 745.8h1.8v6h-1.8zM1372.2 808h1.8v6h-1.8zM1426.2 745.8h1.8v6h-1.8zM1426.2 808h1.8v6h-1.8zM1480.2 745.8h1.8v6h-1.8zM1480.2 808h1.8v6h-1.8zM1536.2 745.8h1.8v6h-1.8zM1536.2 808h1.8v6h-1.8zM1590.2 745.8h1.8v6h-1.8zM1590.2 808h1.8v6h-1.8zM1644.2 745.8h1.8v6h-1.8zM1644.2 808h1.8v6h-1.8zM1698.2 745.8h1.8v6h-1.8zM1698.2 808h1.8v6h-1.8zM1754.2 745.8h1.8v6h-1.8zM1754.2 808h1.8v6h-1.8zM1808.2 745.8h1.8v6h-1.8zM1808.2 808h1.8v6h-1.8zM1862.2 745.8h1.8v6h-1.8zM1862.2 808h1.8v6h-1.8zM1916.2 745.8h1.8v6h-1.8zM1916.2 808h1.8v6h-1.8zM1972.2 745.8h1.8v6h-1.8zM1972.2 808h1.8v6h-1.8zM2026.2 745.8h1.8v6h-1.8zM2026.2 808h1.8v6h-1.8zM2080.2 745.8h1.8v6h-1.8zM2080.2 808h1.8v6h-1.8zM2134.2 745.8h1.8v6h-1.8zM2134.2 808h1.8v6h-1.8zM2190.2 745.8h1.8v6h-1.8zM2190.2 808h1.8v6h-1.8zM2244.2 745.8h1.8v6h-1.8zM2244.2 808h1.8v6h-1.8zM2298.2 745.8h1.8v6h-1.8zM2298.2 808h1.8v6h-1.8zM2352.2 745.8h1.8v6h-1.8zM2352.2 808h1.8v6h-1.8z"/>
<path fill="#1c2526" d="M12 786.3h2394v15.3h-2394z"/>
<path fill="#141b1b" d="M15.1 786.3h1.2v15.3h-1.2zM25.31 786.3h1.2v15.3h-1.2zM35.53 786.3h1.2v15.3h-1.2zM45.74 786.3h1.2v15.3h-1.2zM55.95 786.3h1.2v15.3h-1.2zM66.17 786.3h1.2v15.3h-1.2zM76.38 786.3h1.2v15.3h-1.2zM86.59 786.3h1.2v15.3h-1.2zM96.81 786.3h1.2v15.3h-1.2zM107.02 786.3h1.2v15.3h-1.2zM117.23 786.3h1.2v15.3h-1.2zM127.45 786.3h1.2v15.3h-1.2zM137.66 786.3h1.2v15.3h-1.2zM147.87 786.3h1.2v15.3h-1.2zM158.09 786.3h1.2v15.3h-1.2zM168.3 786.3h1.2v15.3h-1.2zM178.51 786.3h1.2v15.3h-1.2zM188.73 786.3h1.2v15.3h-1.2zM198.94 786.3h1.2v15.3h-1.2zM209.16 786.3h1.2v15.3h-1.2zM219.37 786.3h1.2v15.3h-1.2zM229.58 786.3h1.2v15.3h-1.2zM239.8 786.3h1.2v15.3h-1.2zM250.01 786.3h1.2v15.3h-1.2zM260.22 786.3h1.2v15.3h-1.2zM270.44 786.3h1.2v15.3h-1.2zM280.65 786.3h1.2v15.3h-1.2zM290.86 786.3h1.2v15.3h-1.2zM301.08 786.3h1.2v15.3h-1.2zM311.29 786.3h1.2v15.3h-1.2zM321.5 786.3h1.2v15.3h-1.2zM331.72 786.3h1.2v15.3h-1.2zM341.93 786.3h1.2v15.3h-1.2zM352.14 786.3h1.2v15.3h-1.2zM362.36 786.3h1.2v15.3h-1.2zM372.57 786.3h1.2v15.3h-1.2zM382.78 786.3h1.2v15.3h-1.2zM393 786.3h1.2v15.3h-1.2zM403.21 786.3h1.2v15.3h-1.2zM413.42 786.3h1.2v15.3h-1.2zM423.64 786.3h1.2v15.3h-1.2zM433.85 786.3h1.2v15.3h-1.2zM444.06 786.3h1.2v15.3h-1.2zM454.28 786.3h1.2v15.3h-1.2zM464.49 786.3h1.2v15.3h-1.2zM474.7 786.3h1.2v15.3h-1.2zM484.92 786.3h1.2v15.3h-1.2zM495.13 786.3h1.2v15.3h-1.2zM505.34 786.3h1.2v15.3h-1.2zM515.56 786.3h1.2v15.3h-1.2zM525.77 786.3h1.2v15.3h-1.2zM535.98 786.3h1.2v15.3h-1.2zM546.2 786.3h1.2v15.3h-1.2zM556.41 786.3h1.2v15.3h-1.2zM566.62 786.3h1.2v15.3h-1.2zM576.84 786.3h1.2v15.3h-1.2zM587.05 786.3h1.2v15.3h-1.2zM597.27 786.3h1.2v15.3h-1.2zM607.48 786.3h1.2v15.3h-1.2zM617.69 786.3h1.2v15.3h-1.2zM627.91 786.3h1.2v15.3h-1.2zM638.12 786.3h1.2v15.3h-1.2zM648.33 786.3h1.2v15.3h-1.2zM658.55 786.3h1.2v15.3h-1.2zM668.76 786.3h1.2v15.3h-1.2zM678.97 786.3h1.2v15.3h-1.2zM689.19 786.3h1.2v15.3h-1.2zM699.4 786.3h1.2v15.3h-1.2zM709.61 786.3h1.2v15.3h-1.2zM719.83 786.3h1.2v15.3h-1.2zM730.04 786.3h1.2v15.3h-1.2zM740.25 786.3h1.2v15.3h-1.2zM750.47 786.3h1.2v15.3h-1.2zM760.68 786.3h1.2v15.3h-1.2zM770.89 786.3h1.2v15.3h-1.2zM781.11 786.3h1.2v15.3h-1.2zM791.32 786.3h1.2v15.3h-1.2zM801.53 786.3h1.2v15.3h-1.2zM811.75 786.3h1.2v15.3h-1.2zM821.96 786.3h1.2v15.3h-1.2zM832.17 786.3h1.2v15.3h-1.2zM842.39 786.3h1.2v15.3h-1.2zM852.6 786.3h1.2v15.3h-1.2zM862.81 786.3h1.2v15.3h-1.2zM873.03 786.3h1.2v15.3h-1.2zM883.24 786.3h1.2v15.3h-1.2zM893.45 786.3h1.2v15.3h-1.2zM903.67 786.3h1.2v15.3h-1.2zM913.88 786.3h1.2v15.3h-1.2zM924.09 786.3h1.2v15.3h-1.2zM934.31 786.3h1.2v15.3h-1.2zM944.52 786.3h1.2v15.3h-1.2zM954.74 786.3h1.2v15.3h-1.2zM964.95 786.3h1.2v15.3h-1.2zM975.16 786.3h1.2v15.3h-1.2zM985.38 786.3h1.2v15.3h-1.2zM995.59 786.3h1.2v15.3h-1.2zM1005.8 786.3h1.2v15.3h-1.2zM1016.02 786.3h1.2v15.3h-1.2zM1026.23 786.3h1.2v15.3h-1.2zM1036.44 786.3h1.2v15.3h-1.2zM1046.66 786.3h1.2v15.3h-1.2zM1056.87 786.3h1.2v15.3h-1.2zM1067.08 786.3h1.2v15.3h-1.2zM1077.3 786.3h1.2v15.3h-1.2zM1087.51 786.3h1.2v15.3h-1.2zM1097.72 786.3h1.2v15.3h-1.2zM1107.94 786.3h1.2v15.3h-1.2zM1118.15 786.3h1.2v15.3h-1.2zM1128.36 786.3h1.2v15.3h-1.2zM1138.58 786.3h1.2v15.3h-1.2zM1148.79 786.3h1.2v15.3h-1.2zM1159 786.3h1.2v15.3h-1.2zM1169.22 786.3h1.2v15.3h-1.2zM1179.43 786.3h1.2v15.3h-1.2zM1189.64 786.3h1.2v15.3h-1.2zM1199.86 786.3h1.2v15.3h-1.2zM1210.07 786.3h1.2v15.3h-1.2zM1220.28 786.3h1.2v15.3h-1.2zM1230.5 786.3h1.2v15.3h-1.2zM1240.71 786.3h1.2v15.3h-1.2zM1250.92 786.3h1.2v15.3h-1.2zM1261.14 786.3h1.2v15.3h-1.2zM1271.35 786.3h1.2v15.3h-1.2zM1281.56 786.3h1.2v15.3h-1.2zM1291.78 786.3h1.2v15.3h-1.2zM1301.99 786.3h1.2v15.3h-1.2zM1312.2 786.3h1.2v15.3h-1.2zM1322.42 786.3h1.2v15.3h-1.2zM1332.63 786.3h1.2v15.3h-1.2zM1342.85 786.3h1.2v15.3h-1.2zM1353.06 786.3h1.2v15.3h-1.2zM1363.27 786.3h1.2v15.3h-1.2zM1373.49 786.3h1.2v15.3h-1.2zM1383.7 786.3h1.2v15.3h-1.2zM1393.91 786.3h1.2v15.3h-1.2zM1404.13 786.3h1.2v15.3h-1.2zM1414.34 786.3h1.2v15.3h-1.2zM1424.55 786.3h1.2v15.3h-1.2zM1434.77 786.3h1.2v15.3h-1.2zM1444.98 786.3h1.2v15.3h-1.2zM1455.19 786.3h1.2v15.3h-1.2zM1465.41 786.3h1.2v15.3h-1.2zM1475.62 786.3h1.2v15.3h-1.2zM1485.83 786.3h1.2v15.3h-1.2zM1496.05 786.3h1.2v15.3h-1.2zM1506.26 786.3h1.2v15.3h-1.2zM1516.47 786.3h1.2v15.3h-1.2zM1526.69 786.3h1.2v15.3h-1.2zM1536.9 786.3h1.2v15.3h-1.2zM1547.11 786.3h1.2v15.3h-1.2zM1557.33 786.3h1.2v15.3h-1.2zM1567.54 786.3h1.2v15.3h-1.2zM1577.75 786.3h1.2v15.3h-1.2zM1587.97 786.3h1.2v15.3h-1.2zM1598.18 786.3h1.2v15.3h-1.2zM1608.39 786.3h1.2v15.3h-1.2zM1618.61 786.3h1.2v15.3h-1.2zM1628.82 786.3h1.2v15.3h-1.2zM1639.03 786.3h1.2v15.3h-1.2zM1649.25 786.3h1.2v15.3h-1.2zM1659.46 786.3h1.2v15.3h-1.2zM1669.67 786.3h1.2v15.3h-1.2zM1679.89 786.3h1.2v15.3h-1.2zM1690.1 786.3h1.2v15.3h-1.2zM1700.32 786.3h1.2v15.3h-1.2zM1710.53 786.3h1.2v15.3h-1.2zM1720.74 786.3h1.2v15.3h-1.2zM1730.96 786.3h1.2v15.3h-1.2zM1741.17 786.3h1.2v15.3h-1.2zM1751.38 786.3h1.2v15.3h-1.2zM1761.6 786.3h1.2v15.3h-1.2zM1771.81 786.3h1.2v15.3h-1.2zM1782.02 786.3h1.2v15.3h-1.2zM1792.24 786.3h1.2v15.3h-1.2zM1802.45 786.3h1.2v15.3h-1.2zM1812.66 786.3h1.2v15.3h-1.2zM1822.88 786.3h1.2v15.3h-1.2zM1833.09 786.3h1.2v15.3h-1.2zM1843.3 786.3h1.2v15.3h-1.2zM1853.52 786.3h1.2v15.3h-1.2zM1863.73 786.3h1.2v15.3h-1.2zM1873.94 786.3h1.2v15.3h-1.2zM1884.16 786.3h1.2v15.3h-1.2zM1894.37 786.3h1.2v15.3h-1.2zM1904.58 786.3h1.2v15.3h-1.2zM1914.8 786.3h1.2v15.3h-1.2zM1925.01 786.3h1.2v15.3h-1.2zM1935.22 786.3h1.2v15.3h-1.2zM1945.44 786.3h1.2v15.3h-1.2zM1955.65 786.3h1.2v15.3h-1.2zM1965.86 786.3h1.2v15.3h-1.2zM1976.08 786.3h1.2v15.3h-1.2zM1986.29 786.3h1.2v15.3h-1.2zM1996.5 786.3h1.2v15.3h-1.2zM2006.72 786.3h1.2v15.3h-1.2zM2016.93 786.3h1.2v15.3h-1.2zM2027.14 786.3h1.2v15.3h-1.2zM2037.36 786.3h1.2v15.3h-1.2zM2047.57 786.3h1.2v15.3h-1.2zM2057.79 786.3h1.2v15.3h-1.2zM2068 786.3h1.2v15.3h-1.2zM2078.21 786.3h1.2v15.3h-1.2zM2088.43 786.3h1.2v15.3h-1.2zM2098.64 786.3h1.2v15.3h-1.2zM2108.85 786.3h1.2v15.3h-1.2zM2119.07 786.3h1.2v15.3h-1.2zM2129.28 786.3h1.2v15.3h-1.2zM2139.49 786.3h1.2v15.3h-1.2zM2149.71 786.3h1.2v15.3h-1.2zM2159.92 786.3h1.2v15.3h-1.2zM2170.13 786.3h1.2v15.3h-1.2zM2180.35 786.3h1.2v15.3h-1.2zM2190.56 786.3h1.2v15.3h-1.2zM2200.77 786.3h1.2v15.3h-1.2zM2210.99 786.3h1.2v15.3h-1.2zM2221.2 786.3h1.2v15.3h-1.2zM2231.41 786.3h1.2v15.3h-1.2zM2241.63 786.3h1.2v15.3h-1.2zM2251.84 786.3h1.2v15.3h-1.2zM2262.05 786.3h1.2v15.3h-1.2zM2272.27 786.3h1.2v15.3h-1.2zM2282.48 786.3h1.2v15.3h-1.2zM2292.69 786.3h1.2v15.3h-1.2zM2302.91 786.3h1.2v15.3h-1.2zM2313.12 786.3h1.2v15.3h-1.2zM2323.33 786.3h1.2v15.3h-1.2zM2333.55 786.3h1.2v15.3h-1.2zM2343.76 786.3h1.2v15.3h-1.2zM2353.97 786.3h1.2v15.3h-1.2zM2364.19 786.3h1.2v15.3h-1.2zM2374.4 786.3h1.2v15.3h-1.2zM2384.61 786.3h1.2v15.3h-1.2zM2394.83 786.3h1.2v15.3h-1.2zM2405.04 786.3h1.2v15.3h-1.2z"/>
<path fill="#6fe7fa" d="M35.4 786.3h2v15.3h-2zM103.4 786.3h2v15.3h-2zM171.4 786.3h2v15.3h-2zM185.4 786.3h2v15.3h-2zM239.4 786.3h2v15.3h-2zM253.4 786.3h2v15.3h-2zM321.4 786.3h2v15.3h-2zM389.4 786.3h2v15.3h-2zM457.4 786.3h2v15.3h-2zM471.4 786.3h2v15.3h-2zM525.4 786.3h2v15.3h-2zM539.4 786.3h2v15.3h-2zM607.4 786.3h2v15.3h-2zM675.4 786.3h2v15.3h-2zM743.4 786.3h2v15.3h-2zM757.4 786.3h2v15.3h-2zM825.4 786.3h2v15.3h-2zM893.4 786.3h2v15.3h-2zM961.4 786.3h2v15.3h-2zM1029.4 786.3h2v15.3h-2zM1043.4 786.3h2v15.3h-2zM1111.4 786.3h2v15.3h-2zM1179.4 786.3h2v15.3h-2zM1247.4 786.3h2v15.3h-2zM1259.4 786.3h2v15.3h-2zM1315.4 786.3h2v15.3h-2zM1329.4 786.3h2v15.3h-2zM1397.4 786.3h2v15.3h-2zM1465.4 786.3h2v15.3h-2zM1533.4 786.3h2v15.3h-2zM1545.4 786.3h2v15.3h-2zM1601.4 786.3h2v15.3h-2zM1615.4 786.3h2v15.3h-2zM1683.4 786.3h2v15.3h-2zM1751.4 786.3h2v15.3h-2zM1819.4 786.3h2v15.3h-2zM1831.4 786.3h2v15.3h-2zM1887.4 786.3h2v15.3h-2zM1901.4 786.3h2v15.3h-2zM1969.4 786.3h2v15.3h-2zM2037.4 786.3h2v15.3h-2zM2105.4 786.3h2v15.3h-2zM2117.4 786.3h2v15.3h-2zM2173.4 786.3h2v15.3h-2zM2187.4 786.3h2v15.3h-2zM2255.4 786.3h2v15.3h-2zM2323.4 786.3h2v15.3h-2zM2391.4 786.3h2v15.3h-2z"/>
<path fill="#e67430" d="M10 818h2400v70h-2400z"/>
<path fill="#8c4620" d="M10 818h2400v1.8h-2400zM10 818h1.8v70h-1.8zM10 850h2400v1.8h-2400zM64 851.8h1.8v36.2h-1.8zM118 851.8h1.8v36.2h-1.8zM174 851.8h1.8v36.2h-1.8zM228 851.8h1.8v36.2h-1.8zM282 851.8h1.8v36.2h-1.8zM336 851.8h1.8v36.2h-1.8zM392 851.8h1.8v36.2h-1.8zM446 851.8h1.8v36.2h-1.8zM500 851.8h1.8v36.2h-1.8zM554 851.8h1.8v36.2h-1.8zM610 851.8h1.8v36.2h-1.8zM664 851.8h1.8v36.2h-1.8zM718 851.8h1.8v36.2h-1.8zM772 851.8h1.8v36.2h-1.8zM828 851.8h1.8v36.2h-1.8zM882 851.8h1.8v36.2h-1.8zM936 851.8h1.8v36.2h-1.8zM990 851.8h1.8v36.2h-1.8zM1046 851.8h1.8v36.2h-1.8zM1100 851.8h1.8v36.2h-1.8zM1154 851.8h1.8v36.2h-1.8zM1208 851.8h1.8v36.2h-1.8zM1262 851.8h1.8v36.2h-1.8zM1318 851.8h1.8v36.2h-1.8zM1372 851.8h1.8v36.2h-1.8zM1426 851.8h1.8v36.2h-1.8zM1480 851.8h1.8v36.2h-1.8zM1536 851.8h1.8v36.2h-1.8zM1590 851.8h1.8v36.2h-1.8zM1644 851.8h1.8v36.2h-1.8zM1698 851.8h1.8v36.2h-1.8zM1754 851.8h1.8v36.2h-1.8zM1808 851.8h1.8v36.2h-1.8zM1862 851.8h1.8v36.2h-1.8zM1916 851.8h1.8v36.2h-1.8zM1972 851.8h1.8v36.2h-1.8zM2026 851.8h1.8v36.2h-1.8zM2080 851.8h1.8v36.2h-1.8zM2134 851.8h1.8v36.2h-1.8zM2190 851.8h1.8v36.2h-1.8zM2244 851.8h1.8v36.2h-1.8zM2298 851.8h1.8v36.2h-1.8zM2352 851.8h1.8v36.2h-1.8z"/>
<path fill="#141414" d="M24.2 819.8h1.8v6h-1.8zM24.2 882h1.8v6h-1.8zM38.2 819.8h1.8v6h-1.8zM38.2 882h1.8v6h-1.8zM50.2 819.8h1.8v6h-1.8zM50.2 882h1.8v6h-1.8zM64.2 819.8h1.8v6h-1.8zM64.2 882h1.8v6h-1.8zM78.2 819.8h1.8v6h-1.8zM78.2 882h1.8v6h-1.8zM92.2 819.8h1.8v6h-1.8zM92.2 882h1.8v6h-1.8zM106.2 819.8h1.8v6h-1.8zM106.2 882h1.8v6h-1.8zM118.2 819.8h1.8v6h-1.8zM118.2 882h1.8v6h-1.8zM132.2 819.8h1.8v6h-1.8zM132.2 882h1.8v6h-1.8zM146.2 819.8h1.8v6h-1.8zM146.2 882h1.8v6h-1.8zM160.2 819.8h1.8v6h-1.8zM160.2 882h1.8v6h-1.8zM174.2 819.8h1.8v6h-1.8zM174.2 882h1.8v6h-1.8zM188.2 819.8h1.8v6h-1.8zM188.2 882h1.8v6h-1.8zM200.2 819.8h1.8v6h-1.8zM200.2 882h1.8v6h-1.8zM214.2 819.8h1.8v6h-1.8zM214.2 882h1.8v6h-1.8zM228.2 819.8h1.8v6h-1.8zM228.2 882h1.8v6h-1.8zM242.2 819.8h1.8v6h-1.8zM242.2 882h1.8v6h-1.8zM256.2 819.8h1.8v6h-1.8zM256.2 882h1.8v6h-1.8zM268.2 819.8h1.8v6h-1.8zM268.2 882h1.8v6h-1.8zM282.2 819.8h1.8v6h-1.8zM282.2 882h1.8v6h-1.8zM296.2 819.8h1.8v6h-1.8zM296.2 882h1.8v6h-1.8zM310.2 819.8h1.8v6h-1.8zM310.2 882h1.8v6h-1.8zM324.2 819.8h1.8v6h-1.8zM324.2 882h1.8v6h-1.8zM336.2 819.8h1.8v6h-1.8zM336.2 882h1.8v6h-1.8zM350.2 819.8h1.8v6h-1.8zM350.2 882h1.8v6h-1.8zM364.2 819.8h1.8v6h-1.8zM364.2 882h1.8v6h-1.8zM378.2 819.8h1.8v6h-1.8zM378.2 882h1.8v6h-1.8zM392.2 819.8h1.8v6h-1.8zM392.2 882h1.8v6h-1.8zM404.2 819.8h1.8v6h-1.8zM404.2 882h1.8v6h-1.8zM418.2 819.8h1.8v6h-1.8zM418.2 882h1.8v6h-1.8zM432.2 819.8h1.8v6h-1.8zM432.2 882h1.8v6h-1.8zM446.2 819.8h1.8v6h-1.8zM446.2 882h1.8v6h-1.8zM460.2 819.8h1.8v6h-1.8zM460.2 882h1.8v6h-1.8zM474.2 819.8h1.8v6h-1.8zM474.2 882h1.8v6h-1.8zM486.2 819.8h1.8v6h-1.8zM486.2 882h1.8v6h-1.8zM500.2 819.8h1.8v6h-1.8zM500.2 882h1.8v6h-1.8zM514.2 819.8h1.8v6h-1.8zM514.2 882h1.8v6h-1.8zM528.2 819.8h1.8v6h-1.8zM528.2 882h1.8v6h-1.8zM542.2 819.8h1.8v6h-1.8zM542.2 882h1.8v6h-1.8zM554.2 819.8h1.8v6h-1.8zM554.2 882h1.8v6h-1.8zM568.2 819.8h1.8v6h-1.8zM568.2 882h1.8v6h-1.8zM582.2 819.8h1.8v6h-1.8zM582.2 882h1.8v6h-1.8zM596.2 819.8h1.8v6h-1.8zM596.2 882h1.8v6h-1.8zM610.2 819.8h1.8v6h-1.8zM610.2 882h1.8v6h-1.8zM622.2 819.8h1.8v6h-1.8zM622.2 882h1.8v6h-1.8zM636.2 819.8h1.8v6h-1.8zM636.2 882h1.8v6h-1.8zM650.2 819.8h1.8v6h-1.8zM650.2 882h1.8v6h-1.8zM664.2 819.8h1.8v6h-1.8zM664.2 882h1.8v6h-1.8zM678.2 819.8h1.8v6h-1.8zM678.2 882h1.8v6h-1.8zM690.2 819.8h1.8v6h-1.8zM690.2 882h1.8v6h-1.8zM704.2 819.8h1.8v6h-1.8zM704.2 882h1.8v6h-1.8zM718.2 819.8h1.8v6h-1.8zM718.2 882h1.8v6h-1.8zM732.2 819.8h1.8v6h-1.8zM732.2 882h1.8v6h-1.8zM746.2 819.8h1.8v6h-1.8zM746.2 882h1.8v6h-1.8zM760.2 819.8h1.8v6h-1.8zM760.2 882h1.8v6h-1.8zM772.2 819.8h1.8v6h-1.8zM772.2 882h1.8v6h-1.8zM786.2 819.8h1.8v6h-1.8zM786.2 882h1.8v6h-1.8zM800.2 819.8h1.8v6h-1.8zM800.2 882h1.8v6h-1.8zM814.2 819.8h1.8v6h-1.8zM814.2 882h1.8v6h-1.8zM828.2 819.8h1.8v6h-1.8zM828.2 882h1.8v6h-1.8zM840.2 819.8h1.8v6h-1.8zM840.2 882h1.8v6h-1.8zM854.2 819.8h1.8v6h-1.8zM854.2 882h1.8v6h-1.8zM868.2 819.8h1.8v6h-1.8zM868.2 882h1.8v6h-1.8zM882.2 819.8h1.8v6h-1.8zM882.2 882h1.8v6h-1.8zM896.2 819.8h1.8v6h-1.8zM896.2 882h1.8v6h-1.8zM908.2 819.8h1.8v6h-1.8zM908.2 882h1.8v6h-1.8zM922.2 819.8h1.8v6h-1.8zM922.2 882h1.8v6h-1.8zM936.2 819.8h1.8v6h-1.8zM936.2 882h1.8v6h-1.8zM950.2 819.8h1.8v6h-1.8zM950.2 882h1.8v6h-1.8zM964.2 819.8h1.8v6h-1.8zM964.2 882h1.8v6h-1.8zM976.2 819.8h1.8v6h-1.8zM976.2 882h1.8v6h-1.8zM990.2 819.8h1.8v6h-1.8zM990.2 882h1.8v6h-1.8zM1004.2 819.8h1.8v6h-1.8zM1004.2 882h1.8v6h-1.8zM1018.2 819.8h1.8v6h-1.8zM1018.2 882h1.8v6h-1.8zM1032.2 819.8h1.8v6h-1.8zM1032.2 882h1.8v6h-1.8zM1046.2 819.8h1.8v6h-1.8zM1046.2 882h1.8v6h-1.8zM1058.2 819.8h1.8v6h-1.8zM1058.2 882h1.8v6h-1.8zM1072.2 819.8h1.8v6h-1.8zM1072.2 882h1.8v6h-1.8zM1086.2 819.8h1.8v6h-1.8zM1086.2 882h1.8v6h-1.8zM1100.2 819.8h1.8v6h-1.8zM1100.2 882h1.8v6h-1.8zM1114.2 819.8h1.8v6h-1.8zM1114.2 882h1.8v6h-1.8zM1126.2 819.8h1.8v6h-1.8zM1126.2 882h1.8v6h-1.8zM1140.2 819.8h1.8v6h-1.8zM1140.2 882h1.8v6h-1.8zM1154.2 819.8h1.8v6h-1.8zM1154.2 882h1.8v6h-1.8zM1168.2 819.8h1.8v6h-1.8zM1168.2 882h1.8v6h-1.8zM1182.2 819.8h1.8v6h-1.8zM1182.2 882h1.8v6h-1.8zM1194.2 819.8h1.8v6h-1.8zM1194.2 882h1.8v6h-1.8zM1208.2 819.8h1.8v6h-1.8zM1208.2 882h1.8v6h-1.8zM1222.2 819.8h1.8v6h-1.8zM1222.2 882h1.8v6h-1.8zM1236.2 819.8h1.8v6h-1.8zM1236.2 882h1.8v6h-1.8zM1250.2 819.8h1.8v6h-1.8zM1250.2 882h1.8v6h-1.8zM1262.2 819.8h1.8v6h-1.8zM1262.2 882h1.8v6h-1.8zM1276.2 819.8h1.8v6h-1.8zM1276.2 882h1.8v6h-1.8zM1290.2 819.8h1.8v6h-1.8zM1290.2 882h1.8v6h-1.8zM1304.2 819.8h1.8v6h-1.8zM1304.2 882h1.8v6h-1.8zM1318.2 819.8h1.8v6h-1.8zM1318.2 882h1.8v6h-1.8zM1332.2 819.8h1.8v6h-1.8zM1332.2 882h1.8v6h-1.8zM1344.2 819.8h1.8v6h-1.8zM1344.2 882h1.8v6h-1.8zM1358.2 819.8h1.8v6h-1.8zM1358.2 882h1.8v6h-1.8zM1372.2 819.8h1.8v6h-1.8zM1372.2 882h1.8v6h-1.8zM1386.2 819.8h1.8v6h-1.8zM1386.2 882h1.8v6h-1.8zM1400.2 819.8h1.8v6h-1.8zM1400.2 882h1.8v6h-1.8zM1412.2 819.8h1.8v6h-1.8zM1412.2 882h1.8v6h-1.8zM1426.2 819.8h1.8v6h-1.8zM1426.2 882h1.8v6h-1.8zM1440.2 819.8h1.8v6h-1.8zM1440.2 882h1.8v6h-1.8zM1454.2 819.8h1.8v6h-1.8zM1454.2 882h1.8v6h-1.8zM1468.2 819.8h1.8v6h-1.8zM1468.2 882h1.8v6h-1.8zM1480.2 819.8h1.8v6h-1.8zM1480.2 882h1.8v6h-1.8zM1494.2 819.8h1.8v6h-1.8zM1494.2 882h1.8v6h-1.8zM1508.2 819.8h1.8v6h-1.8zM1508.2 882h1.8v6h-1.8zM1522.2 819.8h1.8v6h-1.8zM1522.2 882h1.8v6h-1.8zM1536.2 819.8h1.8v6h-1.8zM1536.2 882h1.8v6h-1.8zM1548.2 819.8h1.8v6h-1.8zM1548.2 882h1.8v6h-1.8zM1562.2 819.8h1.8v6h-1.8zM1562.2 882h1.8v6h-1.8zM1576.2 819.8h1.8v6h-1.8zM1576.2 882h1.8v6h-1.8zM1590.2 819.8h1.8v6h-1.8zM1590.2 882h1.8v6h-1.8zM1604.2 819.8h1.8v6h-1.8zM1604.2 882h1.8v6h-1.8zM1618.2 819.8h1.8v6h-1.8zM1618.2 882h1.8v6h-1.8zM1630.2 819.8h1.8v6h-1.8zM1630.2 882h1.8v6h-1.8zM1644.2 819.8h1.8v6h-1.8zM1644.2 882h1.8v6h-1.8zM1658.2 819.8h1.8v6h-1.8zM1658.2 882h1.8v6h-1.8zM1672.2 819.8h1.8v6h-1.8zM1672.2 882h1.8v6h-1.8zM1686.2 819.8h1.8v6h-1.8zM1686.2 882h1.8v6h-1.8zM1698.2 819.8h1.8v6h-1.8zM1698.2 882h1.8v6h-1.8zM1712.2 819.8h1.8v6h-1.8zM1712.2 882h1.8v6h-1.8zM1726.2 819.8h1.8v6h-1.8zM1726.2 882h1.8v6h-1.8zM1740.2 819.8h1.8v6h-1.8zM1740.2 882h1.8v6h-1.8zM1754.2 819.8h1.8v6h-1.8zM1754.2 882h1.8v6h-1.8zM1766.2 819.8h1.8v6h-1.8zM1766.2 882h1.8v6h-1.8zM1780.2 819.8h1.8v6h-1.8zM1780.2 882h1.8v6h-1.8zM1794.2 819.8h1.8v6h-1.8zM1794.2 882h1.8v6h-1.8zM1808.2 819.8h1.8v6h-1.8zM1808.2 882h1.8v6h-1.8zM1822.2 819.8h1.8v6h-1.8zM1822.2 882h1.8v6h-1.8zM1834.2 819.8h1.8v6h-1.8zM1834.2 882h1.8v6h-1.8zM1848.2 819.8h1.8v6h-1.8zM1848.2 882h1.8v6h-1.8zM1862.2 819.8h1.8v6h-1.8zM1862.2 882h1.8v6h-1.8zM1876.2 819.8h1.8v6h-1.8zM1876.2 882h1.8v6h-1.8zM1890.2 819.8h1.8v6h-1.8zM1890.2 882h1.8v6h-1.8zM1904.2 819.8h1.8v6h-1.8zM1904.2 882h1.8v6h-1.8zM1916.2 819.8h1.8v6h-1.8zM1916.2 882h1.8v6h-1.8zM1930.2 819.8h1.8v6h-1.8zM1930.2 882h1.8v6h-1.8zM1944.2 819.8h1.8v6h-1.8zM1944.2 882h1.8v6h-1.8zM1958.2 819.8h1.8v6h-1.8zM1958.2 882h1.8v6h-1.8zM1972.2 819.8h1.8v6h-1.8zM1972.2 882h1.8v6h-1.8zM1984.2 819.8h1.8v6h-1.8zM1984.2 882h1.8v6h-1.8zM1998.2 819.8h1.8v6h-1.8zM1998.2 882h1.8v6h-1.8zM2012.2 819.8h1.8v6h-1.8zM2012.2 882h1.8v6h-1.8zM2026.2 819.8h1.8v6h-1.8zM2026.2 882h1.8v6h-1.8zM2040.2 819.8h1.8v6h-1.8zM2040.2 882h1.8v6h-1.8zM2052.2 819.8h1.8v6h-1.8zM2052.2 882h1.8v6h-1.8zM2066.2 819.8h1.8v6h-1.8zM2066.2 882h1.8v6h-1.8zM2080.2 819.8h1.8v6h-1.8zM2080.2 882h1.8v6h-1.8zM2094.2 819.8h1.8v6h-1.8zM2094.2 882h1.8v6h-1.8zM2108.2 819.8h1.8v6h-1.8zM2108.2 882h1.8v6h-1.8zM2120.2 819.8h1.8v6h-1.8zM2120.2 882h1.8v6h-1.8zM2134.2 819.8h1.8v6h-1.8zM2134.2 882h1.8v6h-1.8zM2148.2 819.8h1.8v6h-1.8zM2148.2 882h1.8v6h-1.8zM2162.2 819.8h1.8v6h-1.8zM2162.2 882h1.8v6h-1.8zM2176.2 819.8h1.8v6h-1.8zM2176.2 882h1.8v6h-1.8zM2190.2 819.8h1.8v6h-1.8zM2190.2 882h1.8v6h-1.8zM2202.2 819.8h1.8v6h-1.8zM2202.2 882h1.8v6h-1.8zM2216.2 819.8h1.8v6h-1.8zM2216.2 882h1.8v6h-1.8zM2230.2 819.8h1.8v6h-1.8zM2230.2 882h1.8v6h-1.8zM2244.2 819.8h1.8v6h-1.8zM2244.2 882h1.8v6h-1.8zM2258.2 819.8h1.8v6h-1.8zM2258.2 882h1.8v6h-1.8zM2270.2 819.8h1.8v6h-1.8zM2270.2 882h1.8v6h-1.8zM2284.2 819.8h1.8v6h-1.8zM2284.2 882h1.8v6h-1.8zM2298.2 819.8h1.8v6h-1.8zM2298.2 882h1.8v6h-1.8zM2312.2 819.8h1.8v6h-1.8zM2312.2 882h1.8v6h-1.8zM2326.2 819.8h1.8v6h-1.8zM2326.2 882h1.8v6h-1.8zM2338.2 819.8h1.8v6h-1.8zM2338.2 882h1.8v6h-1.8zM2352.2 819.8h1.8v6h-1.8zM2352.2 882h1.8v6h-1.8zM2366.2 819.8h1.8v6h-1.8zM2366.2 882h1.8v6h-1.8zM2380.2 819.8h1.8v6h-1.8zM2380.2 882h1.8v6h-1.8zM2394.2 819.8h1.8v6h-1.8zM2394.2 882h1.8v6h-1.8z"/>
<path fill="#261c17" d="M12 860h2398v15.4h-2398z"/>
<path fill="#8c4a20" d="M24 860h1.8v15.4h-1.8zM38 860h1.8v15.4h-1.8zM50 860h1.8v15.4h-1.8zM64 860h1.8v15.4h-1.8zM78 860h1.8v15.4h-1.8zM92 860h1.8v15.4h-1.8zM106 860h1.8v15.4h-1.8zM118 860h1.8v15.4h-1.8zM132 860h1.8v15.4h-1.8zM146 860h1.8v15.4h-1.8zM160 860h1.8v15.4h-1.8zM174 860h1.8v15.4h-1.8zM188 860h1.8v15.4h-1.8zM200 860h1.8v15.4h-1.8zM214 860h1.8v15.4h-1.8zM228 860h1.8v15.4h-1.8zM242 860h1.8v15.4h-1.8zM256 860h1.8v15.4h-1.8zM268 860h1.8v15.4h-1.8zM282 860h1.8v15.4h-1.8zM296 860h1.8v15.4h-1.8zM310 860h1.8v15.4h-1.8zM324 860h1.8v15.4h-1.8zM336 860h1.8v15.4h-1.8zM350 860h1.8v15.4h-1.8zM364 860h1.8v15.4h-1.8zM378 860h1.8v15.4h-1.8zM392 860h1.8v15.4h-1.8zM404 860h1.8v15.4h-1.8zM418 860h1.8v15.4h-1.8zM432 860h1.8v15.4h-1.8zM446 860h1.8v15.4h-1.8zM460 860h1.8v15.4h-1.8zM474 860h1.8v15.4h-1.8zM486 860h1.8v15.4h-1.8zM500 860h1.8v15.4h-1.8zM514 860h1.8v15.4h-1.8zM528 860h1.8v15.4h-1.8zM542 860h1.8v15.4h-1.8zM554 860h1.8v15.4h-1.8zM568 860h1.8v15.4h-1.8zM582 860h1.8v15.4h-1.8zM596 860h1.8v15.4h-1.8zM610 860h1.8v15.4h-1.8zM622 860h1.8v15.4h-1.8zM636 860h1.8v15.4h-1.8zM650 860h1.8v15.4h-1.8zM664 860h1.8v15.4h-1.8zM678 860h1.8v15.4h-1.8zM690 860h1.8v15.4h-1.8zM704 860h1.8v15.4h-1.8zM718 860h1.8v15.4h-1.8zM732 860h1.8v15.4h-1.8zM746 860h1.8v15.4h-1.8zM760 860h1.8v15.4h-1.8zM772 860h1.8v15.4h-1.8zM786 860h1.8v15.4h-1.8zM800 860h1.8v15.4h-1.8zM814 860h1.8v15.4h-1.8zM828 860h1.8v15.4h-1.8zM840 860h1.8v15.4h-1.8zM854 860h1.8v15.4h-1.8zM868 860h1.8v15.4h-1.8zM882 860h1.8v15.4h-1.8zM896 860h1.8v15.4h-1.8zM908 860h1.8v15.4h-1.8zM922 860h1.8v15.4h-1.8zM936 860h1.8v15.4h-1.8zM950 860h1.8v15.4h-1.8zM964 860h1.8v15.4h-1.8zM976 860h1.8v15.4h-1.8zM990 860h1.8v15.4h-1.8zM1004 860h1.8v15.4h-1.8zM1018 860h1.8v15.4h-1.8zM1032 860h1.8v15.4h-1.8zM1046 860h1.8v15.4h-1.8zM1058 860h1.8v15.4h-1.8zM1072 860h1.8v15.4h-1.8zM1086 860h1.8v15.4h-1.8zM1100 860h1.8v15.4h-1.8zM1114 860h1.8v15.4h-1.8zM1126 860h1.8v15.4h-1.8zM1140 860h1.8v15.4h-1.8zM1154 860h1.8v15.4h-1.8zM1168 860h1.8v15.4h-1.8zM1182 860h1.8v15.4h-1.8zM1194 860h1.8v15.4h-1.8zM1208 860h1.8v15.4h-1.8zM1222 860h1.8v15.4h-1.8zM1236 860h1.8v15.4h-1.8zM1250 860h1.8v15.4h-1.8zM1262 860h1.8v15.4h-1.8zM1276 860h1.8v15.4h-1.8zM1290 860h1.8v15.4h-1.8zM1304 860h1.8v15.4h-1.8zM1318 860h1.8v15.4h-1.8zM1332 860h1.8v15.4h-1.8zM1344 860h1.8v15.4h-1.8zM1358 860h1.8v15.4h-1.8zM1372 860h1.8v15.4h-1.8zM1386 860h1.8v15.4h-1.8zM1400 860h1.8v15.4h-1.8zM1412 860h1.8v15.4h-1.8zM1426 860h1.8v15.4h-1.8zM1440 860h1.8v15.4h-1.8zM1454 860h1.8v15.4h-1.8zM1468 860h1.8v15.4h-1.8zM1480 860h1.8v15.4h-1.8zM1494 860h1.8v15.4h-1.8zM1508 860h1.8v15.4h-1.8zM1522 860h1.8v15.4h-1.8zM1536 860h1.8v15.4h-1.8zM1548 860h1.8v15.4h-1.8zM1562 860h1.8v15.4h-1.8zM1576 860h1.8v15.4h-1.8zM1590 860h1.8v15.4h-1.8zM1604 860h1.8v15.4h-1.8zM1618 860h1.8v15.4h-1.8zM1630 860h1.8v15.4h-1.8zM1644 860h1.8v15.4h-1.8zM1658 860h1.8v15.4h-1.8zM1672 860h1.8v15.4h-1.8zM1686 860h1.8v15.4h-1.8zM1698 860h1.8v15.4h-1.8zM1712 860h1.8v15.4h-1.8zM1726 860h1.8v15.4h-1.8zM1740 860h1.8v15.4h-1.8zM1754 860h1.8v15.4h-1.8zM1766 860h1.8v15.4h-1.8zM1780 860h1.8v15.4h-1.8zM1794 860h1.8v15.4h-1.8zM1808 860h1.8v15.4h-1.8zM1822 860h1.8v15.4h-1.8zM1834 860h1.8v15.4h-1.8zM1848 860h1.8v15.4h-1.8zM1862 860h1.8v15.4h-1.8zM1876 860h1.8v15.4h-1.8zM1890 860h1.8v15.4h-1.8zM1904 860h1.8v15.4h-1.8zM1916 860h1.8v15.4h-1.8zM1930 860h1.8v15.4h-1.8zM1944 860h1.8v15.4h-1.8zM1958 860h1.8v15.4h-1.8zM1972 860h1.8v15.4h-1.8zM1984 860h1.8v15.4h-1.8zM1998 860h1.8v15.4h-1.8zM2012 860h1.8v15.4h-1.8zM2026 860h1.8v15.4h-1.8zM2040 860h1.8v15.4h-1.8zM2052 860h1.8v15.4h-1.8zM2066 860h1.8v15.4h-1.8zM2080 860h1.8v15.4h-1.8zM2094 860h1.8v15.4h-1.8zM2108 860h1.8v15.4h-1.8zM2120 860h1.8v15.4h-1.8zM2134 860h1.8v15.4h-1.8zM2148 860h1.8v15.4h-1.8zM2162 860h1.8v15.4h-1.8zM2176 860h1.8v15.4h-1.8zM2190 860h1.8v15.4h-1.8zM2202 860h1.8v15.4h-1.8zM2216 860h1.8v15.4h-1.8zM2230 860h1.8v15.4h-1.8zM2244 860h1.8v15.4h-1.8zM2258 860h1.8v15.4h-1.8zM2270 860h1.8v15.4h-1.8zM2284 860h1.8v15.4h-1.8zM2298 860h1.8v15.4h-1.8zM2312 860h1.8v15.4h-1.8zM2326 860h1.8v15.4h-1.8zM2338 860h1.8v15.4h-1.8zM2352 860h1.8v15.4h-1.8zM2366 860h1.8v15.4h-1.8zM2380 860h1.8v15.4h-1.8zM2394 860h1.8v15.4h-1.8z"/>
<path fill="#e67430" d="M10 892h2400v34h-2400z"/>
<path fill="#8c4620" d="M10 892h2400v1.8h-2400zM10 924.2h2400v1.8h-2400zM10 892h1.8v34h-1.8zM10 892h2v34h-2z"/>
<path fill="#141414" d="M24.2 894.3h1.8v5.6h-1.8zM24.2 918.3h1.8v5.6h-1.8zM38.2 894.3h1.8v5.6h-1.8zM38.2 918.3h1.8v5.6h-1.8zM50.2 894.3h1.8v5.6h-1.8zM50.2 918.3h1.8v5.6h-1.8zM64.2 894.3h1.8v5.6h-1.8zM64.2 918.3h1.8v5.6h-1.8zM78.2 894.3h1.8v5.6h-1.8zM78.2 918.3h1.8v5.6h-1.8zM92.2 894.3h1.8v5.6h-1.8zM92.2 918.3h1.8v5.6h-1.8zM106.2 894.3h1.8v5.6h-1.8zM106.2 918.3h1.8v5.6h-1.8zM118.2 894.3h1.8v5.6h-1.8zM118.2 918.3h1.8v5.6h-1.8zM132.2 894.3h1.8v5.6h-1.8zM132.2 918.3h1.8v5.6h-1.8zM146.2 894.3h1.8v5.6h-1.8zM146.2 918.3h1.8v5.6h-1.8zM160.2 894.3h1.8v5.6h-1.8zM160.2 918.3h1.8v5.6h-1.8zM174.2 894.3h1.8v5.6h-1.8zM174.2 918.3h1.8v5.6h-1.8zM188.2 894.3h1.8v5.6h-1.8zM188.2 918.3h1.8v5.6h-1.8zM200.2 894.3h1.8v5.6h-1.8zM200.2 918.3h1.8v5.6h-1.8zM214.2 894.3h1.8v5.6h-1.8zM214.2 918.3h1.8v5.6h-1.8zM228.2 894.3h1.8v5.6h-1.8zM228.2 918.3h1.8v5.6h-1.8zM242.2 894.3h1.8v5.6h-1.8zM242.2 918.3h1.8v5.6h-1.8zM256.2 894.3h1.8v5.6h-1.8zM256.2 918.3h1.8v5.6h-1.8zM268.2 894.3h1.8v5.6h-1.8zM268.2 918.3h1.8v5.6h-1.8zM282.2 894.3h1.8v5.6h-1.8zM282.2 918.3h1.8v5.6h-1.8zM296.2 894.3h1.8v5.6h-1.8zM296.2 918.3h1.8v5.6h-1.8zM310.2 894.3h1.8v5.6h-1.8zM310.2 918.3h1.8v5.6h-1.8zM324.2 894.3h1.8v5.6h-1.8zM324.2 918.3h1.8v5.6h-1.8zM336.2 894.3h1.8v5.6h-1.8zM336.2 918.3h1.8v5.6h-1.8zM350.2 894.3h1.8v5.6h-1.8zM350.2 918.3h1.8v5.6h-1.8zM364.2 894.3h1.8v5.6h-1.8zM364.2 918.3h1.8v5.6h-1.8zM378.2 894.3h1.8v5.6h-1.8zM378.2 918.3h1.8v5.6h-1.8zM392.2 894.3h1.8v5.6h-1.8zM392.2 918.3h1.8v5.6h-1.8zM404.2 894.3h1.8v5.6h-1.8zM404.2 918.3h1.8v5.6h-1.8zM418.2 894.3h1.8v5.6h-1.8zM418.2 918.3h1.8v5.6h-1.8zM432.2 894.3h1.8v5.6h-1.8zM432.2 918.3h1.8v5.6h-1.8zM446.2 894.3h1.8v5.6h-1.8zM446.2 918.3h1.8v5.6h-1.8zM460.2 894.3h1.8v5.6h-1.8zM460.2 918.3h1.8v5.6h-1.8zM474.2 894.3h1.8v5.6h-1.8zM474.2 918.3h1.8v5.6h-1.8zM486.2 894.3h1.8v5.6h-1.8zM486.2 918.3h1.8v5.6h-1.8zM500.2 894.3h1.8v5.6h-1.8zM500.2 918.3h1.8v5.6h-1.8zM514.2 894.3h1.8v5.6h-1.8zM514.2 918.3h1.8v5.6h-1.8zM528.2 894.3h1.8v5.6h-1.8zM528.2 918.3h1.8v5.6h-1.8zM542.2 894.3h1.8v5.6h-1.8zM542.2 918.3h1.8v5.6h-1.8zM554.2 894.3h1.8v5.6h-1.8zM554.2 918.3h1.8v5.6h-1.8zM568.2 894.3h1.8v5.6h-1.8zM568.2 918.3h1.8v5.6h-1.8zM582.2 894.3h1.8v5.6h-1.8zM582.2 918.3h1.8v5.6h-1.8zM596.2 894.3h1.8v5.6h-1.8zM596.2 918.3h1.8v5.6h-1.8zM610.2 894.3h1.8v5.6h-1.8zM610.2 918.3h1.8v5.6h-1.8zM622.2 894.3h1.8v5.6h-1.8zM622.2 918.3h1.8v5.6h-1.8zM636.2 894.3h1.8v5.6h-1.8zM636.2 918.3h1.8v5.6h-1.8zM650.2 894.3h1.8v5.6h-1.8zM650.2 918.3h1.8v5.6h-1.8zM664.2 894.3h1.8v5.6h-1.8zM664.2 918.3h1.8v5.6h-1.8zM678.2 894.3h1.8v5.6h-1.8zM678.2 918.3h1.8v5.6h-1.8zM690.2 894.3h1.8v5.6h-1.8zM690.2 918.3h1.8v5.6h-1.8zM704.2 894.3h1.8v5.6h-1.8zM704.2 918.3h1.8v5.6h-1.8zM718.2 894.3h1.8v5.6h-1.8zM718.2 918.3h1.8v5.6h-1.8zM732.2 894.3h1.8v5.6h-1.8zM732.2 918.3h1.8v5.6h-1.8zM746.2 894.3h1.8v5.6h-1.8zM746.2 918.3h1.8v5.6h-1.8zM760.2 894.3h1.8v5.6h-1.8zM760.2 918.3h1.8v5.6h-1.8zM772.2 894.3h1.8v5.6h-1.8zM772.2 918.3h1.8v5.6h-1.8zM786.2 894.3h1.8v5.6h-1.8zM786.2 918.3h1.8v5.6h-1.8zM800.2 894.3h1.8v5.6h-1.8zM800.2 918.3h1.8v5.6h-1.8zM814.2 894.3h1.8v5.6h-1.8zM814.2 918.3h1.8v5.6h-1.8zM828.2 894.3h1.8v5.6h-1.8zM828.2 918.3h1.8v5.6h-1.8zM840.2 894.3h1.8v5.6h-1.8zM840.2 918.3h1.8v5.6h-1.8zM854.2 894.3h1.8v5.6h-1.8zM854.2 918.3h1.8v5.6h-1.8zM868.2 894.3h1.8v5.6h-1.8zM868.2 918.3h1.8v5.6h-1.8zM882.2 894.3h1.8v5.6h-1.8zM882.2 918.3h1.8v5.6h-1.8zM896.2 894.3h1.8v5.6h-1.8zM896.2 918.3h1.8v5.6h-1.8zM908.2 894.3h1.8v5.6h-1.8zM908.2 918.3h1.8v5.6h-1.8zM922.2 894.3h1.8v5.6h-1.8zM922.2 918.3h1.8v5.6h-1.8zM936.2 894.3h1.8v5.6h-1.8zM936.2 918.3h1.8v5.6h-1.8zM950.2 894.3h1.8v5.6h-1.8zM950.2 918.3h1.8v5.6h-1.8zM964.2 894.3h1.8v5.6h-1.8zM964.2 918.3h1.8v5.6h-1.8zM976.2 894.3h1.8v5.6h-1.8zM976.2 918.3h1.8v5.6h-1.8zM990.2 894.3h1.8v5.6h-1.8zM990.2 918.3h1.8v5.6h-1.8zM1004.2 894.3h1.8v5.6h-1.8zM1004.2 918.3h1.8v5.6h-1.8zM1018.2 894.3h1.8v5.6h-1.8zM1018.2 918.3h1.8v5.6h-1.8zM1032.2 894.3h1.8v5.6h-1.8zM1032.2 918.3h1.8v5.6h-1.8zM1046.2 894.3h1.8v5.6h-1.8zM1046.2 918.3h1.8v5.6h-1.8zM1058.2 894.3h1.8v5.6h-1.8zM1058.2 918.3h1.8v5.6h-1.8zM1072.2 894.3h1.8v5.6h-1.8zM1072.2 918.3h1.8v5.6h-1.8zM1086.2 894.3h1.8v5.6h-1.8zM1086.2 918.3h1.8v5.6h-1.8zM1100.2 894.3h1.8v5.6h-1.8zM1100.2 918.3h1.8v5.6h-1.8zM1114.2 894.3h1.8v5.6h-1.8zM1114.2 918.3h1.8v5.6h-1.8zM1126.2 894.3h1.8v5.6h-1.8zM1126.2 918.3h1.8v5.6h-1.8zM1140.2 894.3h1.8v5.6h-1.8zM1140.2 918.3h1.8v5.6h-1.8zM1154.2 894.3h1.8v5.6h-1.8zM1154.2 918.3h1.8v5.6h-1.8zM1168.2 894.3h1.8v5.6h-1.8zM1168.2 918.3h1.8v5.6h-1.8zM1182.2 894.3h1.8v5.6h-1.8zM1182.2 918.3h1.8v5.6h-1.8zM1194.2 894.3h1.8v5.6h-1.8zM1194.2 918.3h1.8v5.6h-1.8zM1208.2 894.3h1.8v5.6h-1.8zM1208.2 918.3h1.8v5.6h-1.8zM1222.2 894.3h1.8v5.6h-1.8zM1222.2 918.3h1.8v5.6h-1.8zM1236.2 894.3h1.8v5.6h-1.8zM1236.2 918.3h1.8v5.6h-1.8zM1250.2 894.3h1.8v5.6h-1.8zM1250.2 918.3h1.8v5.6h-1.8zM1262.2 894.3h1.8v5.6h-1.8zM1262.2 918.3h1.8v5.6h-1.8zM1276.2 894.3h1.8v5.6h-1.8zM1276.2 918.3h1.8v5.6h-1.8zM1290.2 894.3h1.8v5.6h-1.8zM1290.2 918.3h1.8v5.6h-1.8zM1304.2 894.3h1.8v5.6h-1.8zM1304.2 918.3h1.8v5.6h-1.8zM1318.2 894.3h1.8v5.6h-1.8zM1318.2 918.3h1.8v5.6h-1.8zM1332.2 894.3h1.8v5.6h-1.8zM1332.2 918.3h1.8v5.6h-1.8zM1344.2 894.3h1.8v5.6h-1.8zM1344.2 918.3h1.8v5.6h-1.8zM1358.2 894.3h1.8v5.6h-1.8zM1358.2 918.3h1.8v5.6h-1.8zM1372.2 894.3h1.8v5.6h-1.8zM1372.2 918.3h1.8v5.6h-1.8zM1386.2 894.3h1.8v5.6h-1.8zM1386.2 918.3h1.8v5.6h-1.8zM1400.2 894.3h1.8v5.6h-1.8zM1400.2 918.3h1.8v5.6h-1.8zM1412.2 894.3h1.8v5.6h-1.8zM1412.2 918.3h1.8v5.6h-1.8zM1426.2 894.3h1.8v5.6h-1.8zM1426.2 918.3h1.8v5.6h-1.8zM1440.2 894.3h1.8v5.6h-1.8zM1440.2 918.3h1.8v5.6h-1.8zM1454.2 894.3h1.8v5.6h-1.8zM1454.2 918.3h1.8v5.6h-1.8zM1468.2 894.3h1.8v5.6h-1.8zM1468.2 918.3h1.8v5.6h-1.8zM1480.2 894.3h1.8v5.6h-1.8zM1480.2 918.3h1.8v5.6h-1.8zM1494.2 894.3h1.8v5.6h-1.8zM1494.2 918.3h1.8v5.6h-1.8zM1508.2 894.3h1.8v5.6h-1.8zM1508.2 918.3h1.8v5.6h-1.8zM1522.2 894.3h1.8v5.6h-1.8zM1522.2 918.3h1.8v5.6h-1.8zM1536.2 894.3h1.8v5.6h-1.8zM1536.2 918.3h1.8v5.6h-1.8zM1548.2 894.3h1.8v5.6h-1.8zM1548.2 918.3h1.8v5.6h-1.8zM1562.2 894.3h1.8v5.6h-1.8zM1562.2 918.3h1.8v5.6h-1.8zM1576.2 894.3h1.8v5.6h-1.8zM1576.2 918.3h1.8v5.6h-1.8zM1590.2 894.3h1.8v5.6h-1.8zM1590.2 918.3h1.8v5.6h-1.8zM1604.2 894.3h1.8v5.6h-1.8zM1604.2 918.3h1.8v5.6h-1.8zM1618.2 894.3h1.8v5.6h-1.8zM1618.2 918.3h1.8v5.6h-1.8zM1630.2 894.3h1.8v5.6h-1.8zM1630.2 918.3h1.8v5.6h-1.8zM1644.2 894.3h1.8v5.6h-1.8zM1644.2 918.3h1.8v5.6h-1.8zM1658.2 894.3h1.8v5.6h-1.8zM1658.2 918.3h1.8v5.6h-1.8zM1672.2 894.3h1.8v5.6h-1.8zM1672.2 918.3h1.8v5.6h-1.8zM1686.2 894.3h1.8v5.6h-1.8zM1686.2 918.3h1.8v5.6h-1.8zM1698.2 894.3h1.8v5.6h-1.8zM1698.2 918.3h1.8v5.6h-1.8zM1712.2 894.3h1.8v5.6h-1.8zM1712.2 918.3h1.8v5.6h-1.8zM1726.2 894.3h1.8v5.6h-1.8zM1726.2 918.3h1.8v5.6h-1.8zM1740.2 894.3h1.8v5.6h-1.8zM1740.2 918.3h1.8v5.6h-1.8zM1754.2 894.3h1.8v5.6h-1.8zM1754.2 918.3h1.8v5.6h-1.8zM1766.2 894.3h1.8v5.6h-1.8zM1766.2 918.3h1.8v5.6h-1.8zM1780.2 894.3h1.8v5.6h-1.8zM1780.2 918.3h1.8v5.6h-1.8zM1794.2 894.3h1.8v5.6h-1.8zM1794.2 918.3h1.8v5.6h-1.8zM1808.2 894.3h1.8v5.6h-1.8zM1808.2 918.3h1.8v5.6h-1.8zM1822.2 894.3h1.8v5.6h-1.8zM1822.2 918.3h1.8v5.6h-1.8zM1834.2 894.3h1.8v5.6h-1.8zM1834.2 918.3h1.8v5.6h-1.8zM1848.2 894.3h1.8v5.6h-1.8zM1848.2 918.3h1.8v5.6h-1.8zM1862.2 894.3h1.8v5.6h-1.8zM1862.2 918.3h1.8v5.6h-1.8zM1876.2 894.3h1.8v5.6h-1.8zM1876.2 918.3h1.8v5.6h-1.8zM1890.2 894.3h1.8v5.6h-1.8zM1890.2 918.3h1.8v5.6h-1.8zM1904.2 894.3h1.8v5.6h-1.8zM1904.2 918.3h1.8v5.6h-1.8zM1916.2 894.3h1.8v5.6h-1.8zM1916.2 918.3h1.8v5.6h-1.8zM1930.2 894.3h1.8v5.6h-1.8zM1930.2 918.3h1.8v5.6h-1.8zM1944.2 894.3h1.8v5.6h-1.8zM1944.2 918.3h1.8v5.6h-1.8zM1958.2 894.3h1.8v5.6h-1.8zM1958.2 918.3h1.8v5.6h-1.8zM1972.2 894.3h1.8v5.6h-1.8zM1972.2 918.3h1.8v5.6h-1.8zM1984.2 894.3h1.8v5.6h-1.8zM1984.2 918.3h1.8v5.6h-1.8zM1998.2 894.3h1.8v5.6h-1.8zM1998.2 918.3h1.8v5.6h-1.8zM2012.2 894.3h1.8v5.6h-1.8zM2012.2 918.3h1.8v5.6h-1.8zM2026.2 894.3h1.8v5.6h-1.8zM2026.2 918.3h1.8v5.6h-1.8zM2040.2 894.3h1.8v5.6h-1.8zM2040.2 918.3h1.8v5.6h-1.8zM2052.2 894.3h1.8v5.6h-1.8zM2052.2 918.3h1.8v5.6h-1.8zM2066.2 894.3h1.8v5.6h-1.8zM2066.2 918.3h1.8v5.6h-1.8zM2080.2 894.3h1.8v5.6h-1.8zM2080.2 918.3h1.8v5.6h-1.8zM2094.2 894.3h1.8v5.6h-1.8zM2094.2 918.3h1.8v5.6h-1.8zM2108.2 894.3h1.8v5.6h-1.8zM2108.2 918.3h1.8v5.6h-1.8zM2120.2 894.3h1.8v5.6h-1.8zM2120.2 918.3h1.8v5.6h-1.8zM2134.2 894.3h1.8v5.6h-1.8zM2134.2 918.3h1.8v5.6h-1.8zM2148.2 894.3h1.8v5.6h-1.8zM2148.2 918.3h1.8v5.6h-1.8zM2162.2 894.3h1.8v5.6h-1.8zM2162.2 918.3h1.8v5.6h-1.8zM2176.2 894.3h1.8v5.6h-1.8zM2176.2 918.3h1.8v5.6h-1.8zM2190.2 894.3h1.8v5.6h-1.8zM2190.2 918.3h1.8v5.6h-1.8zM2202.2 894.3h1.8v5.6h-1.8zM2202.2 918.3h1.8v5.6h-1.8zM2216.2 894.3h1.8v5.6h-1.8zM2216.2 918.3h1.8v5.6h-1.8zM2230.2 894.3h1.8v5.6h-1.8zM2230.2 918.3h1.8v5.6h-1.8zM2244.2 894.3h1.8v5.6h-1.8zM2244.2 918.3h1.8v5.6h-1.8zM2258.2 894.3h1.8v5.6h-1.8zM2258.2 918.3h1.8v5.6h-1.8zM2270.2 894.3h1.8v5.6h-1.8zM2270.2 918.3h1.8v5.6h-1.8zM2284.2 894.3h1.8v5.6h-1.8zM2284.2 918.3h1.8v5.6h-1.8zM2298.2 894.3h1.8v5.6h-1.8zM2298.2 918.3h1.8v5.6h-1.8zM2312.2 894.3h1.8v5.6h-1.8zM2312.2 918.3h1.8v5.6h-1.8zM2326.2 894.3h1.8v5.6h-1.8zM2326.2 918.3h1.8v5.6h-1.8zM2338.2 894.3h1.8v5.6h-1.8zM2338.2 918.3h1.8v5.6h-1.8zM2352.2 894.3h1.8v5.6h-1.8zM2352.2 918.3h1.8v5.6h-1.8zM2366.2 894.3h1.8v5.6h-1.8zM2366.2 918.3h1.8v5.6h-1.8zM2380.2 894.3h1.8v5.6h-1.8zM2380.2 918.3h1.8v5.6h-1.8zM2394.2 894.3h1.8v5.6h-1.8zM2394.2 918.3h1.8v5.6h-1.8z"/>
<path fill="#f0aa4b" d="M174 930h108v70h-108zM610 930h94v70h-94zM840 930h110v70h-110zM1058 930h110v70h-110zM1426 930h110v70h-110zM1536 930h54v70h-54zM1712 930h110v70h-110zM1862 930h110v70h-110zM1972 930h54v70h-54z"/>
<path fill="#8e6530" d="M174 930h108v1.8h-108zM174 930h1.8v70h-1.8zM174 962h108v1.8h-108zM228 963.8h1.8v36.2h-1.8zM186.2 972.2h1.8v15.5h-1.8zM610 930h94v1.8h-94zM610 930h1.8v70h-1.8zM610 962h94v1.8h-94zM664 963.8h1.8v36.2h-1.8zM840 930h110v1.8h-110zM840 930h1.8v70h-1.8zM840 962h110v1.8h-110zM882 963.8h1.8v36.2h-1.8zM936 963.8h1.8v36.2h-1.8zM1058 930h110v1.8h-110zM1058 930h1.8v70h-1.8zM1058 962h110v1.8h-110zM1100 963.8h1.8v36.2h-1.8zM1154 963.8h1.8v36.2h-1.8zM1426 930h110v1.8h-110zM1426 930h1.8v70h-1.8zM1426 962h110v1.8h-110zM1480 963.8h1.8v36.2h-1.8zM1536 930h54v1.8h-54zM1536 930h1.8v70h-1.8zM1536 962h54v1.8h-54zM1712 930h110v1.8h-110zM1712 930h1.8v70h-1.8zM1712 962h110v1.8h-110zM1754 963.8h1.8v36.2h-1.8zM1808 963.8h1.8v36.2h-1.8zM1862 930h110v1.8h-110zM1862 930h1.8v70h-1.8zM1862 962h110v1.8h-110zM1916 963.8h1.8v36.2h-1.8zM1972 930h54v1.8h-54zM1972 930h1.8v70h-1.8zM1972 962h54v1.8h-54z"/>
<path fill="#241d17" d="M188 972.2h94v15.5h-94zM612 972.2h92v15.5h-92zM842 972.2h108v15.5h-108zM1060 972.2h108v15.5h-108zM1428 972.2h108v15.5h-108zM1538 972.2h52v15.5h-52zM1714 972.2h108v15.5h-108zM1864 972.2h108v15.5h-108zM1974 972.2h52v15.5h-52z"/>
<path fill="#fcf160" d="M1318 1004h218v70h-218zM1536 1004h218v70h-218z"/>
<path fill="#8a8432" d="M1318 1004h218v1.8h-218zM1318 1004h1.8v70h-1.8zM1318 1036h218v1.8h-218zM1372 1037.8h1.8v36.2h-1.8zM1426 1037.8h1.8v36.2h-1.8zM1480 1037.8h1.8v36.2h-1.8zM1536 1004h218v1.8h-218zM1536 1004h1.8v70h-1.8zM1536 1036h218v1.8h-218zM1590 1037.8h1.8v36.2h-1.8zM1644 1037.8h1.8v36.2h-1.8zM1698 1037.8h1.8v36.2h-1.8z"/>
<path fill="#141414" d="M1426.2 1005.8h1.8v6h-1.8zM1426.2 1068h1.8v6h-1.8zM1644.2 1005.8h1.8v6h-1.8zM1644.2 1068h1.8v6h-1.8z"/>
<path fill="#867c34" d="M1320 1044h15.9v1.9h-15.9zM1320 1050.1h15.9v1.9h-15.9zM1320 1054.1h15.9v1.9h-15.9zM1320 1058h15.9v1.9h-15.9zM1336.1 1038h7.7v1.9h-7.7zM1336.1 1046.1h7.7v1.9h-7.7zM1336.1 1052h7.7v1.9h-7.7zM1344.3 1044h19.6v1.9h-19.6zM1344.3 1048h19.6v1.9h-19.6zM1344.3 1054.1h19.6v1.9h-19.6zM1344.3 1058h19.6v1.9h-19.6zM1364.2 1038h7.8v1.9h-7.8zM1364.2 1046.1h7.8v1.9h-7.8zM1364.2 1052h7.8v1.9h-7.8zM1374 1044h15.9v1.9h-15.9zM1374 1050.1h15.9v1.9h-15.9zM1374 1054.1h15.9v1.9h-15.9zM1374 1058h15.9v1.9h-15.9zM1390.1 1038h7.7v1.9h-7.7zM1390.1 1046.1h7.7v1.9h-7.7zM1390.1 1052h7.7v1.9h-7.7zM1398.3 1044h19.6v1.9h-19.6zM1398.3 1048h19.6v1.9h-19.6zM1398.3 1054.1h19.6v1.9h-19.6zM1398.3 1058h19.6v1.9h-19.6zM1418.2 1038h7.8v1.9h-7.8zM1418.2 1046.1h7.8v1.9h-7.8zM1418.2 1052h7.8v1.9h-7.8zM1428 1044h15.9v1.9h-15.9zM1428 1050.1h15.9v1.9h-15.9zM1428 1054.1h15.9v1.9h-15.9zM1428 1058h15.9v1.9h-15.9zM1444.1 1038h7.7v1.9h-7.7zM1444.1 1046.1h7.7v1.9h-7.7zM1444.1 1052h7.7v1.9h-7.7zM1452.3 1044h19.6v1.9h-19.6zM1452.3 1048h19.6v1.9h-19.6zM1452.3 1054.1h19.6v1.9h-19.6zM1452.3 1058h19.6v1.9h-19.6zM1472.2 1038h7.8v1.9h-7.8zM1472.2 1046.1h7.8v1.9h-7.8zM1472.2 1052h7.8v1.9h-7.8zM1482 1044h15.9v1.9h-15.9zM1482 1050.1h15.9v1.9h-15.9zM1482 1054.1h15.9v1.9h-15.9zM1482 1058h15.9v1.9h-15.9zM1498.1 1038h7.7v1.9h-7.7zM1498.1 1046.1h7.7v1.9h-7.7zM1498.1 1052h7.7v1.9h-7.7zM1506.3 1044h19.6v1.9h-19.6zM1506.3 1048h19.6v1.9h-19.6zM1506.3 1054.1h19.6v1.9h-19.6zM1506.3 1058h19.6v1.9h-19.6zM1526.2 1038h8.3v1.9h-8.3zM1526.2 1046.1h8.3v1.9h-8.3zM1526.2 1052h8.3v1.9h-8.3zM1538 1058h15.9v1.9h-15.9zM1538 1064.1h15.9v1.9h-15.9zM1538 1068.1h15.9v1.9h-15.9zM1538 1072.1h15.9v1.9h-15.9zM1554.1 1052h7.7v1.9h-7.7zM1554.1 1060.2h7.7v1.9h-7.7zM1554.1 1066.2h7.7v1.9h-7.7zM1562.3 1058h19.6v1.9h-19.6zM1562.3 1062.3h19.6v1.9h-19.6zM1562.3 1068.1h19.6v1.9h-19.6zM1562.3 1072.1h19.6v1.9h-19.6zM1582.2 1052h7.8v1.9h-7.8zM1582.2 1060.2h7.8v1.9h-7.8zM1582.2 1066.2h7.8v1.9h-7.8zM1592 1058h15.9v1.9h-15.9zM1592 1064.1h15.9v1.9h-15.9zM1592 1068.1h15.9v1.9h-15.9zM1592 1072.1h15.9v1.9h-15.9zM1608.1 1052h7.7v1.9h-7.7zM1608.1 1060.2h7.7v1.9h-7.7zM1608.1 1066.2h7.7v1.9h-7.7zM1616.3 1058h19.6v1.9h-19.6zM1616.3 1062.3h19.6v1.9h-19.6zM1616.3 1068.1h19.6v1.9h-19.6zM1616.3 1072.1h19.6v1.9h-19.6zM1636.2 1052h7.8v1.9h-7.8zM1636.2 1060.2h7.8v1.9h-7.8zM1636.2 1066.2h7.8v1.9h-7.8zM1646 1058h15.9v1.9h-15.9zM1646 1064.1h15.9v1.9h-15.9zM1646 1068.1h15.9v1.9h-15.9zM1646 1072.1h15.9v1.9h-15.9zM1662.1 1052h7.7v1.9h-7.7zM1662.1 1060.2h7.7v1.9h-7.7zM1662.1 1066.2h7.7v1.9h-7.7zM1670.3 1058h19.6v1.9h-19.6zM1670.3 1062.3h19.6v1.9h-19.6zM1670.3 1068.1h19.6v1.9h-19.6zM1670.3 1072.1h19.6v1.9h-19.6zM1690.2 1052h7.8v1.9h-7.8zM1690.2 1060.2h7.8v1.9h-7.8zM1690.2 1066.2h7.8v1.9h-7.8zM1700 1058h15.9v1.9h-15.9zM1700 1064.1h15.9v1.9h-15.9zM1700 1068.1h15.9v1.9h-15.9zM1700 1072.1h15.9v1.9h-15.9zM1716.1 1052h7.7v1.9h-7.7zM1716.1 1060.2h7.7v1.9h-7.7zM1716.1 1066.2h7.7v1.9h-7.7zM1724.3 1058h19.6v1.9h-19.6zM1724.3 1062.3h19.6v1.9h-19.6zM1724.3 1068.1h19.6v1.9h-19.6zM1724.3 1072.1h19.6v1.9h-19.6zM1744.2 1052h8.3v1.9h-8.3zM1744.2 1060.2h8.3v1.9h-8.3zM1744.2 1066.2h8.3v1.9h-8.3z"/>
<path fill="#8a8432" d="M1372 1037.8h1.8v36.2h-1.8zM1426 1037.8h1.8v36.2h-1.8zM1480 1037.8h1.8v36.2h-1.8zM1590 1037.8h1.8v36.2h-1.8zM1644 1037.8h1.8v36.2h-1.8zM1698 1037.8h1.8v36.2h-1.8zM1536 1004h1.8v70h-1.8z"/>
<path fill="#141414" d="M1426.2 1005.8h1.8v6h-1.8zM1426.2 1068h1.8v6h-1.8zM1536.2 1005.8h1.8v6h-1.8zM1536.2 1068h1.8v6h-1.8zM1644.2 1005.8h1.8v6h-1.8zM1644.2 1068h1.8v6h-1.8z"/>
<path fill="#4aa0e8" d="M228 1078h544v70h-544zM772 1078h110v70h-110zM882 1078h1308v70h-1308z"/>
<path fill="#24578a" d="M228 1078h544v1.8h-544zM228 1078h1.8v70h-1.8zM228 1110h544v1.8h-544zM282 1111.8h1.8v36.2h-1.8zM336 1111.8h1.8v36.2h-1.8zM392 1111.8h1.8v36.2h-1.8zM446 1111.8h1.8v36.2h-1.8zM500 1111.8h1.8v36.2h-1.8zM554 1111.8h1.8v36.2h-1.8zM610 1111.8h1.8v36.2h-1.8zM664 1111.8h1.8v36.2h-1.8zM718 1111.8h1.8v36.2h-1.8zM772 1078h110v1.8h-110zM772 1078h1.8v70h-1.8zM772 1110h110v1.8h-110zM828 1111.8h1.8v36.2h-1.8zM882 1078h1308v1.8h-1308zM882 1078h1.8v70h-1.8zM882 1110h1308v1.8h-1308zM936 1111.8h1.8v36.2h-1.8zM990 1111.8h1.8v36.2h-1.8zM1046 1111.8h1.8v36.2h-1.8zM1100 1111.8h1.8v36.2h-1.8zM1154 1111.8h1.8v36.2h-1.8zM1208 1111.8h1.8v36.2h-1.8zM1262 1111.8h1.8v36.2h-1.8zM1318 1111.8h1.8v36.2h-1.8zM1372 1111.8h1.8v36.2h-1.8zM1426 1111.8h1.8v36.2h-1.8zM1480 1111.8h1.8v36.2h-1.8zM1536 1111.8h1.8v36.2h-1.8zM1590 1111.8h1.8v36.2h-1.8zM1644 1111.8h1.8v36.2h-1.8zM1698 1111.8h1.8v36.2h-1.8zM1754 1111.8h1.8v36.2h-1.8zM1808 1111.8h1.8v36.2h-1.8zM1862 1111.8h1.8v36.2h-1.8zM1916 1111.8h1.8v36.2h-1.8zM1972 1111.8h1.8v36.2h-1.8zM2026 1111.8h1.8v36.2h-1.8zM2080 1111.8h1.8v36.2h-1.8zM2134 1111.8h1.8v36.2h-1.8z"/>
<path fill="#141414" d="M336.2 1079.8h1.8v6h-1.8zM336.2 1142h1.8v6h-1.8zM446.2 1079.8h1.8v6h-1.8zM446.2 1142h1.8v6h-1.8zM554.2 1079.8h1.8v6h-1.8zM554.2 1142h1.8v6h-1.8zM664.2 1079.8h1.8v6h-1.8zM664.2 1142h1.8v6h-1.8zM990.2 1079.8h1.8v6h-1.8zM990.2 1142h1.8v6h-1.8zM1100.2 1079.8h1.8v6h-1.8zM1100.2 1142h1.8v6h-1.8zM1208.2 1079.8h1.8v6h-1.8zM1208.2 1142h1.8v6h-1.8zM1318.2 1079.8h1.8v6h-1.8zM1318.2 1142h1.8v6h-1.8zM1426.2 1079.8h1.8v6h-1.8zM1426.2 1142h1.8v6h-1.8zM1536.2 1079.8h1.8v6h-1.8zM1536.2 1142h1.8v6h-1.8zM1644.2 1079.8h1.8v6h-1.8zM1644.2 1142h1.8v6h-1.8zM1754.2 1079.8h1.8v6h-1.8zM1754.2 1142h1.8v6h-1.8zM1862.2 1079.8h1.8v6h-1.8zM1862.2 1142h1.8v6h-1.8zM1972.2 1079.8h1.8v6h-1.8zM1972.2 1142h1.8v6h-1.8zM2080.2 1079.8h1.8v6h-1.8zM2080.2 1142h1.8v6h-1.8z"/>
<path fill="#2e6494" d="M230 1122.1h15.9v1.9h-15.9zM230 1132.2h15.9v1.9h-15.9zM230 1140.1h15.9v1.9h-15.9zM230 1146.1h15.9v1.9h-15.9zM246.1 1112.1h7.7v1.9h-7.7zM246.1 1126h7.7v1.9h-7.7zM246.1 1136h7.7v1.9h-7.7zM254.3 1122.1h19.6v1.9h-19.6zM254.3 1130.1h19.6v1.9h-19.6zM254.3 1140.1h19.6v1.9h-19.6zM254.3 1146.1h19.6v1.9h-19.6zM274.2 1112.1h7.8v1.9h-7.8zM274.2 1126h7.8v1.9h-7.8zM274.2 1136h7.8v1.9h-7.8zM284 1122.1h15.9v1.9h-15.9zM284 1132.2h15.9v1.9h-15.9zM284 1140.1h15.9v1.9h-15.9zM284 1146.1h15.9v1.9h-15.9zM300.1 1112.1h7.7v1.9h-7.7zM300.1 1126h7.7v1.9h-7.7zM300.1 1136h7.7v1.9h-7.7zM308.3 1122.1h19.6v1.9h-19.6zM308.3 1130.1h19.6v1.9h-19.6zM308.3 1140.1h19.6v1.9h-19.6zM308.3 1146.1h19.6v1.9h-19.6zM328.2 1112.1h7.8v1.9h-7.8zM328.2 1126h7.8v1.9h-7.8zM328.2 1136h7.8v1.9h-7.8zM338 1122.1h15.9v1.9h-15.9zM338 1132.2h15.9v1.9h-15.9zM338 1140.1h15.9v1.9h-15.9zM338 1146.1h15.9v1.9h-15.9zM354.1 1112.1h7.7v1.9h-7.7zM354.1 1126h7.7v1.9h-7.7zM354.1 1136h7.7v1.9h-7.7zM362.3 1122.1h19.6v1.9h-19.6zM362.3 1130.1h19.6v1.9h-19.6zM362.3 1140.1h19.6v1.9h-19.6zM362.3 1146.1h19.6v1.9h-19.6zM382.2 1112.1h8.3v1.9h-8.3zM382.2 1126h8.3v1.9h-8.3zM382.2 1136h8.3v1.9h-8.3zM394 1122.1h15.9v1.9h-15.9zM394 1132.2h15.9v1.9h-15.9zM394 1140.1h15.9v1.9h-15.9zM394 1146.1h15.9v1.9h-15.9zM410.1 1112.1h7.7v1.9h-7.7zM410.1 1126h7.7v1.9h-7.7zM410.1 1136h7.7v1.9h-7.7zM418.3 1122.1h19.6v1.9h-19.6zM418.3 1130.1h19.6v1.9h-19.6zM418.3 1140.1h19.6v1.9h-19.6zM418.3 1146.1h19.6v1.9h-19.6zM438.2 1112.1h7.8v1.9h-7.8zM438.2 1126h7.8v1.9h-7.8zM438.2 1136h7.8v1.9h-7.8zM448 1122.1h15.9v1.9h-15.9zM448 1132.2h15.9v1.9h-15.9zM448 1140.1h15.9v1.9h-15.9zM448 1146.1h15.9v1.9h-15.9zM464.1 1112.1h7.7v1.9h-7.7zM464.1 1126h7.7v1.9h-7.7zM464.1 1136h7.7v1.9h-7.7zM472.3 1122.1h19.6v1.9h-19.6zM472.3 1130.1h19.6v1.9h-19.6zM472.3 1140.1h19.6v1.9h-19.6zM472.3 1146.1h19.6v1.9h-19.6zM492.2 1112.1h7.8v1.9h-7.8zM492.2 1126h7.8v1.9h-7.8zM492.2 1136h7.8v1.9h-7.8zM502 1122.1h15.9v1.9h-15.9zM502 1132.2h15.9v1.9h-15.9zM502 1140.1h15.9v1.9h-15.9zM502 1146.1h15.9v1.9h-15.9zM518.1 1112.1h7.7v1.9h-7.7zM518.1 1126h7.7v1.9h-7.7zM518.1 1136h7.7v1.9h-7.7zM526.3 1122.1h19.6v1.9h-19.6zM526.3 1130.1h19.6v1.9h-19.6zM526.3 1140.1h19.6v1.9h-19.6zM526.3 1146.1h19.6v1.9h-19.6zM546.2 1112.1h7.8v1.9h-7.8zM546.2 1126h7.8v1.9h-7.8zM546.2 1136h7.8v1.9h-7.8zM556 1122.1h15.9v1.9h-15.9zM556 1132.2h15.9v1.9h-15.9zM556 1140.1h15.9v1.9h-15.9zM556 1146.1h15.9v1.9h-15.9zM572.1 1112.1h7.7v1.9h-7.7zM572.1 1126h7.7v1.9h-7.7zM572.1 1136h7.7v1.9h-7.7zM580.3 1122.1h19.6v1.9h-19.6zM580.3 1130.1h19.6v1.9h-19.6zM580.3 1140.1h19.6v1.9h-19.6zM580.3 1146.1h19.6v1.9h-19.6zM600.2 1112.1h8.3v1.9h-8.3zM600.2 1126h8.3v1.9h-8.3zM600.2 1136h8.3v1.9h-8.3zM612 1122.1h15.9v1.9h-15.9zM612 1132.2h15.9v1.9h-15.9zM612 1140.1h15.9v1.9h-15.9zM612 1146.1h15.9v1.9h-15.9zM628.1 1112.1h7.7v1.9h-7.7zM628.1 1126h7.7v1.9h-7.7zM628.1 1136h7.7v1.9h-7.7zM636.3 1122.1h19.6v1.9h-19.6zM636.3 1130.1h19.6v1.9h-19.6zM636.3 1140.1h19.6v1.9h-19.6zM636.3 1146.1h19.6v1.9h-19.6zM656.2 1112.1h7.8v1.9h-7.8zM656.2 1126h7.8v1.9h-7.8zM656.2 1136h7.8v1.9h-7.8zM666 1122.1h15.9v1.9h-15.9zM666 1132.2h15.9v1.9h-15.9zM666 1140.1h15.9v1.9h-15.9zM666 1146.1h15.9v1.9h-15.9zM682.1 1112.1h7.7v1.9h-7.7zM682.1 1126h7.7v1.9h-7.7zM682.1 1136h7.7v1.9h-7.7zM690.3 1122.1h19.6v1.9h-19.6zM690.3 1130.1h19.6v1.9h-19.6zM690.3 1140.1h19.6v1.9h-19.6zM690.3 1146.1h19.6v1.9h-19.6zM710.2 1112.1h7.8v1.9h-7.8zM710.2 1126h7.8v1.9h-7.8zM710.2 1136h7.8v1.9h-7.8zM720 1122.1h15.9v1.9h-15.9zM720 1132.2h15.9v1.9h-15.9zM720 1140.1h15.9v1.9h-15.9zM720 1146.1h15.9v1.9h-15.9zM736.1 1112.1h7.7v1.9h-7.7zM736.1 1126h7.7v1.9h-7.7zM736.1 1136h7.7v1.9h-7.7zM744.3 1122.1h19.6v1.9h-19.6zM744.3 1130.1h19.6v1.9h-19.6zM744.3 1140.1h19.6v1.9h-19.6zM744.3 1146.1h19.6v1.9h-19.6zM764.2 1112.1h7.8v1.9h-7.8zM764.2 1126h7.8v1.9h-7.8zM764.2 1136h7.8v1.9h-7.8zM774 1122.1h15.9v1.9h-15.9zM774 1132.2h15.9v1.9h-15.9zM774 1140.1h15.9v1.9h-15.9zM774 1146.1h15.9v1.9h-15.9zM790.1 1112.1h7.7v1.9h-7.7zM790.1 1126h7.7v1.9h-7.7zM790.1 1136h7.7v1.9h-7.7zM798.3 1122.1h19.6v1.9h-19.6zM798.3 1130.1h19.6v1.9h-19.6zM798.3 1140.1h19.6v1.9h-19.6zM798.3 1146.1h19.6v1.9h-19.6zM818.2 1112.1h8.3v1.9h-8.3zM818.2 1126h8.3v1.9h-8.3zM818.2 1136h8.3v1.9h-8.3zM830 1122.1h15.9v1.9h-15.9zM830 1132.2h15.9v1.9h-15.9zM830 1140.1h15.9v1.9h-15.9zM830 1146.1h15.9v1.9h-15.9zM846.1 1112.1h7.7v1.9h-7.7zM846.1 1126h7.7v1.9h-7.7zM846.1 1136h7.7v1.9h-7.7zM854.3 1122.1h19.6v1.9h-19.6zM854.3 1130.1h19.6v1.9h-19.6zM854.3 1140.1h19.6v1.9h-19.6zM854.3 1146.1h19.6v1.9h-19.6zM874.2 1112.1h7.8v1.9h-7.8zM874.2 1126h7.8v1.9h-7.8zM874.2 1136h7.8v1.9h-7.8zM884 1122.1h15.9v1.9h-15.9zM884 1132.2h15.9v1.9h-15.9zM884 1140.1h15.9v1.9h-15.9zM884 1146.1h15.9v1.9h-15.9zM900.1 1112.1h7.7v1.9h-7.7zM900.1 1126h7.7v1.9h-7.7zM900.1 1136h7.7v1.9h-7.7zM908.3 1122.1h19.6v1.9h-19.6zM908.3 1130.1h19.6v1.9h-19.6zM908.3 1140.1h19.6v1.9h-19.6zM908.3 1146.1h19.6v1.9h-19.6zM928.2 1112.1h7.8v1.9h-7.8zM928.2 1126h7.8v1.9h-7.8zM928.2 1136h7.8v1.9h-7.8zM938 1122.1h15.9v1.9h-15.9zM938 1132.2h15.9v1.9h-15.9zM938 1140.1h15.9v1.9h-15.9zM938 1146.1h15.9v1.9h-15.9zM954.1 1112.1h7.7v1.9h-7.7zM954.1 1126h7.7v1.9h-7.7zM954.1 1136h7.7v1.9h-7.7zM962.3 1122.1h19.6v1.9h-19.6zM962.3 1130.1h19.6v1.9h-19.6zM962.3 1140.1h19.6v1.9h-19.6zM962.3 1146.1h19.6v1.9h-19.6zM982.2 1112.1h7.8v1.9h-7.8zM982.2 1126h7.8v1.9h-7.8zM982.2 1136h7.8v1.9h-7.8zM992 1122.1h15.9v1.9h-15.9zM992 1132.2h15.9v1.9h-15.9zM992 1140.1h15.9v1.9h-15.9zM992 1146.1h15.9v1.9h-15.9zM1008.1 1112.1h7.7v1.9h-7.7zM1008.1 1126h7.7v1.9h-7.7zM1008.1 1136h7.7v1.9h-7.7zM1016.3 1122.1h19.6v1.9h-19.6zM1016.3 1130.1h19.6v1.9h-19.6zM1016.3 1140.1h19.6v1.9h-19.6zM1016.3 1146.1h19.6v1.9h-19.6zM1036.2 1112.1h8.3v1.9h-8.3zM1036.2 1126h8.3v1.9h-8.3zM1036.2 1136h8.3v1.9h-8.3zM1048 1122.1h15.9v1.9h-15.9zM1048 1132.2h15.9v1.9h-15.9zM1048 1140.1h15.9v1.9h-15.9zM1048 1146.1h15.9v1.9h-15.9zM1064.1 1112.1h7.7v1.9h-7.7zM1064.1 1126h7.7v1.9h-7.7zM1064.1 1136h7.7v1.9h-7.7zM1072.3 1122.1h19.6v1.9h-19.6zM1072.3 1130.1h19.6v1.9h-19.6zM1072.3 1140.1h19.6v1.9h-19.6zM1072.3 1146.1h19.6v1.9h-19.6zM1092.2 1112.1h7.8v1.9h-7.8zM1092.2 1126h7.8v1.9h-7.8zM1092.2 1136h7.8v1.9h-7.8zM1102 1122.1h15.9v1.9h-15.9zM1102 1132.2h15.9v1.9h-15.9zM1102 1140.1h15.9v1.9h-15.9zM1102 1146.1h15.9v1.9h-15.9zM1118.1 1112.1h7.7v1.9h-7.7zM1118.1 1126h7.7v1.9h-7.7zM1118.1 1136h7.7v1.9h-7.7zM1126.3 1122.1h19.6v1.9h-19.6zM1126.3 1130.1h19.6v1.9h-19.6zM1126.3 1140.1h19.6v1.9h-19.6zM1126.3 1146.1h19.6v1.9h-19.6zM1146.2 1112.1h7.8v1.9h-7.8zM1146.2 1126h7.8v1.9h-7.8zM1146.2 1136h7.8v1.9h-7.8zM1156 1122.1h15.9v1.9h-15.9zM1156 1132.2h15.9v1.9h-15.9zM1156 1140.1h15.9v1.9h-15.9zM1156 1146.1h15.9v1.9h-15.9zM1172.1 1112.1h7.7v1.9h-7.7zM1172.1 1126h7.7v1.9h-7.7zM1172.1 1136h7.7v1.9h-7.7zM1180.3 1122.1h19.6v1.9h-19.6zM1180.3 1130.1h19.6v1.9h-19.6zM1180.3 1140.1h19.6v1.9h-19.6zM1180.3 1146.1h19.6v1.9h-19.6zM1200.2 1112.1h7.8v1.9h-7.8zM1200.2 1126h7.8v1.9h-7.8zM1200.2 1136h7.8v1.9h-7.8zM1210 1122.1h15.9v1.9h-15.9zM1210 1132.2h15.9v1.9h-15.9zM1210 1140.1h15.9v1.9h-15.9zM1210 1146.1h15.9v1.9h-15.9zM1226.1 1112.1h7.7v1.9h-7.7zM1226.1 1126h7.7v1.9h-7.7zM1226.1 1136h7.7v1.9h-7.7zM1234.3 1122.1h19.6v1.9h-19.6zM1234.3 1130.1h19.6v1.9h-19.6zM1234.3 1140.1h19.6v1.9h-19.6zM1234.3 1146.1h19.6v1.9h-19.6zM1254.2 1112.1h7.8v1.9h-7.8zM1254.2 1126h7.8v1.9h-7.8zM1254.2 1136h7.8v1.9h-7.8zM1264 1122.1h15.9v1.9h-15.9zM1264 1132.2h15.9v1.9h-15.9zM1264 1140.1h15.9v1.9h-15.9zM1264 1146.1h15.9v1.9h-15.9zM1280.1 1112.1h7.7v1.9h-7.7zM1280.1 1126h7.7v1.9h-7.7zM1280.1 1136h7.7v1.9h-7.7zM1288.3 1122.1h19.6v1.9h-19.6zM1288.3 1130.1h19.6v1.9h-19.6zM1288.3 1140.1h19.6v1.9h-19.6zM1288.3 1146.1h19.6v1.9h-19.6zM1308.2 1112.1h8.3v1.9h-8.3zM1308.2 1126h8.3v1.9h-8.3zM1308.2 1136h8.3v1.9h-8.3zM1320 1122.1h15.9v1.9h-15.9zM1320 1132.2h15.9v1.9h-15.9zM1320 1140.1h15.9v1.9h-15.9zM1320 1146.1h15.9v1.9h-15.9zM1336.1 1112.1h7.7v1.9h-7.7zM1336.1 1126h7.7v1.9h-7.7zM1336.1 1136h7.7v1.9h-7.7zM1344.3 1122.1h19.6v1.9h-19.6zM1344.3 1130.1h19.6v1.9h-19.6zM1344.3 1140.1h19.6v1.9h-19.6zM1344.3 1146.1h19.6v1.9h-19.6zM1364.2 1112.1h7.8v1.9h-7.8zM1364.2 1126h7.8v1.9h-7.8zM1364.2 1136h7.8v1.9h-7.8zM1374 1122.1h15.9v1.9h-15.9zM1374 1132.2h15.9v1.9h-15.9zM1374 1140.1h15.9v1.9h-15.9zM1374 1146.1h15.9v1.9h-15.9zM1390.1 1112.1h7.7v1.9h-7.7zM1390.1 1126h7.7v1.9h-7.7zM1390.1 1136h7.7v1.9h-7.7zM1398.3 1122.1h19.6v1.9h-19.6zM1398.3 1130.1h19.6v1.9h-19.6zM1398.3 1140.1h19.6v1.9h-19.6zM1398.3 1146.1h19.6v1.9h-19.6zM1418.2 1112.1h7.8v1.9h-7.8zM1418.2 1126h7.8v1.9h-7.8zM1418.2 1136h7.8v1.9h-7.8zM1428 1122.1h15.9v1.9h-15.9zM1428 1132.2h15.9v1.9h-15.9zM1428 1140.1h15.9v1.9h-15.9zM1428 1146.1h15.9v1.9h-15.9zM1444.1 1112.1h7.7v1.9h-7.7zM1444.1 1126h7.7v1.9h-7.7zM1444.1 1136h7.7v1.9h-7.7zM1452.3 1122.1h19.6v1.9h-19.6zM1452.3 1130.1h19.6v1.9h-19.6zM1452.3 1140.1h19.6v1.9h-19.6zM1452.3 1146.1h19.6v1.9h-19.6zM1472.2 1112.1h7.8v1.9h-7.8zM1472.2 1126h7.8v1.9h-7.8zM1472.2 1136h7.8v1.9h-7.8zM1482 1122.1h15.9v1.9h-15.9zM1482 1132.2h15.9v1.9h-15.9zM1482 1140.1h15.9v1.9h-15.9zM1482 1146.1h15.9v1.9h-15.9zM1498.1 1112.1h7.7v1.9h-7.7zM1498.1 1126h7.7v1.9h-7.7zM1498.1 1136h7.7v1.9h-7.7zM1506.3 1122.1h19.6v1.9h-19.6zM1506.3 1130.1h19.6v1.9h-19.6zM1506.3 1140.1h19.6v1.9h-19.6zM1506.3 1146.1h19.6v1.9h-19.6zM1526.2 1112.1h8.3v1.9h-8.3zM1526.2 1126h8.3v1.9h-8.3zM1526.2 1136h8.3v1.9h-8.3zM1538 1122.1h15.9v1.9h-15.9zM1538 1132.2h15.9v1.9h-15.9zM1538 1140.1h15.9v1.9h-15.9zM1538 1146.1h15.9v1.9h-15.9zM1554.1 1112.1h7.7v1.9h-7.7zM1554.1 1126h7.7v1.9h-7.7zM1554.1 1136h7.7v1.9h-7.7zM1562.3 1122.1h19.6v1.9h-19.6zM1562.3 1130.1h19.6v1.9h-19.6zM1562.3 1140.1h19.6v1.9h-19.6zM1562.3 1146.1h19.6v1.9h-19.6zM1582.2 1112.1h7.8v1.9h-7.8zM1582.2 1126h7.8v1.9h-7.8zM1582.2 1136h7.8v1.9h-7.8zM1592 1122.1h15.9v1.9h-15.9zM1592 1132.2h15.9v1.9h-15.9zM1592 1140.1h15.9v1.9h-15.9zM1592 1146.1h15.9v1.9h-15.9zM1608.1 1112.1h7.7v1.9h-7.7zM1608.1 1126h7.7v1.9h-7.7zM1608.1 1136h7.7v1.9h-7.7zM1616.3 1122.1h19.6v1.9h-19.6zM1616.3 1130.1h19.6v1.9h-19.6zM1616.3 1140.1h19.6v1.9h-19.6zM1616.3 1146.1h19.6v1.9h-19.6zM1636.2 1112.1h7.8v1.9h-7.8zM1636.2 1126h7.8v1.9h-7.8zM1636.2 1136h7.8v1.9h-7.8zM1646 1122.1h15.9v1.9h-15.9zM1646 1132.2h15.9v1.9h-15.9zM1646 1140.1h15.9v1.9h-15.9zM1646 1146.1h15.9v1.9h-15.9zM1662.1 1112.1h7.7v1.9h-7.7zM1662.1 1126h7.7v1.9h-7.7zM1662.1 1136h7.7v1.9h-7.7zM1670.3 1122.1h19.6v1.9h-19.6zM1670.3 1130.1h19.6v1.9h-19.6zM1670.3 1140.1h19.6v1.9h-19.6zM1670.3 1146.1h19.6v1.9h-19.6zM1690.2 1112.1h7.8v1.9h-7.8zM1690.2 1126h7.8v1.9h-7.8zM1690.2 1136h7.8v1.9h-7.8zM1700 1122.1h15.9v1.9h-15.9zM1700 1132.2h15.9v1.9h-15.9zM1700 1140.1h15.9v1.9h-15.9zM1700 1146.1h15.9v1.9h-15.9zM1716.1 1112.1h7.7v1.9h-7.7zM1716.1 1126h7.7v1.9h-7.7zM1716.1 1136h7.7v1.9h-7.7zM1724.3 1122.1h19.6v1.9h-19.6zM1724.3 1130.1h19.6v1.9h-19.6zM1724.3 1140.1h19.6v1.9h-19.6zM1724.3 1146.1h19.6v1.9h-19.6zM1744.2 1112.1h8.3v1.9h-8.3zM1744.2 1126h8.3v1.9h-8.3zM1744.2 1136h8.3v1.9h-8.3zM1756 1122.1h15.9v1.9h-15.9zM1756 1132.2h15.9v1.9h-15.9zM1756 1140.1h15.9v1.9h-15.9zM1756 1146.1h15.9v1.9h-15.9zM1772.1 1112.1h7.7v1.9h-7.7zM1772.1 1126h7.7v1.9h-7.7zM1772.1 1136h7.7v1.9h-7.7zM1780.3 1122.1h19.6v1.9h-19.6zM1780.3 1130.1h19.6v1.9h-19.6zM1780.3 1140.1h19.6v1.9h-19.6zM1780.3 1146.1h19.6v1.9h-19.6zM1800.2 1112.1h7.8v1.9h-7.8zM1800.2 1126h7.8v1.9h-7.8zM1800.2 1136h7.8v1.9h-7.8zM1810 1122.1h15.9v1.9h-15.9zM1810 1132.2h15.9v1.9h-15.9zM1810 1140.1h15.9v1.9h-15.9zM1810 1146.1h15.9v1.9h-15.9zM1826.1 1112.1h7.7v1.9h-7.7zM1826.1 1126h7.7v1.9h-7.7zM1826.1 1136h7.7v1.9h-7.7zM1834.3 1122.1h19.6v1.9h-19.6zM1834.3 1130.1h19.6v1.9h-19.6zM1834.3 1140.1h19.6v1.9h-19.6zM1834.3 1146.1h19.6v1.9h-19.6zM1854.2 1112.1h7.8v1.9h-7.8zM1854.2 1126h7.8v1.9h-7.8zM1854.2 1136h7.8v1.9h-7.8zM1864 1122.1h15.9v1.9h-15.9zM1864 1132.2h15.9v1.9h-15.9zM1864 1140.1h15.9v1.9h-15.9zM1864 1146.1h15.9v1.9h-15.9zM1880.1 1112.1h7.7v1.9h-7.7zM1880.1 1126h7.7v1.9h-7.7zM1880.1 1136h7.7v1.9h-7.7zM1888.3 1122.1h19.6v1.9h-19.6zM1888.3 1130.1h19.6v1.9h-19.6zM1888.3 1140.1h19.6v1.9h-19.6zM1888.3 1146.1h19.6v1.9h-19.6zM1908.2 1112.1h7.8v1.9h-7.8zM1908.2 1126h7.8v1.9h-7.8zM1908.2 1136h7.8v1.9h-7.8zM1918 1122.1h15.9v1.9h-15.9zM1918 1132.2h15.9v1.9h-15.9zM1918 1140.1h15.9v1.9h-15.9zM1918 1146.1h15.9v1.9h-15.9zM1934.1 1112.1h7.7v1.9h-7.7zM1934.1 1126h7.7v1.9h-7.7zM1934.1 1136h7.7v1.9h-7.7zM1942.3 1122.1h19.6v1.9h-19.6zM1942.3 1130.1h19.6v1.9h-19.6zM1942.3 1140.1h19.6v1.9h-19.6zM1942.3 1146.1h19.6v1.9h-19.6zM1962.2 1112.1h8.3v1.9h-8.3zM1962.2 1126h8.3v1.9h-8.3zM1962.2 1136h8.3v1.9h-8.3zM1974 1122.1h15.9v1.9h-15.9zM1974 1132.2h15.9v1.9h-15.9zM1974 1140.1h15.9v1.9h-15.9zM1974 1146.1h15.9v1.9h-15.9zM1990.1 1112.1h7.7v1.9h-7.7zM1990.1 1126h7.7v1.9h-7.7zM1990.1 1136h7.7v1.9h-7.7zM1998.3 1122.1h19.6v1.9h-19.6zM1998.3 1130.1h19.6v1.9h-19.6zM1998.3 1140.1h19.6v1.9h-19.6zM1998.3 1146.1h19.6v1.9h-19.6zM2018.2 1112.1h7.8v1.9h-7.8zM2018.2 1126h7.8v1.9h-7.8zM2018.2 1136h7.8v1.9h-7.8zM2028 1122.1h15.9v1.9h-15.9zM2028 1132.2h15.9v1.9h-15.9zM2028 1140.1h15.9v1.9h-15.9zM2028 1146.1h15.9v1.9h-15.9zM2044.1 1112.1h7.7v1.9h-7.7zM2044.1 1126h7.7v1.9h-7.7zM2044.1 1136h7.7v1.9h-7.7zM2052.3 1122.1h19.6v1.9h-19.6zM2052.3 1130.1h19.6v1.9h-19.6zM2052.3 1140.1h19.6v1.9h-19.6zM2052.3 1146.1h19.6v1.9h-19.6zM2072.2 1112.1h7.8v1.9h-7.8zM2072.2 1126h7.8v1.9h-7.8zM2072.2 1136h7.8v1.9h-7.8zM2082 1122.1h15.9v1.9h-15.9zM2082 1132.2h15.9v1.9h-15.9zM2082 1140.1h15.9v1.9h-15.9zM2082 1146.1h15.9v1.9h-15.9zM2098.1 1112.1h7.7v1.9h-7.7zM2098.1 1126h7.7v1.9h-7.7zM2098.1 1136h7.7v1.9h-7.7zM2106.3 1122.1h19.6v1.9h-19.6zM2106.3 1130.1h19.6v1.9h-19.6zM2106.3 1140.1h19.6v1.9h-19.6zM2106.3 1146.1h19.6v1.9h-19.6zM2126.2 1112.1h7.8v1.9h-7.8zM2126.2 1126h7.8v1.9h-7.8zM2126.2 1136h7.8v1.9h-7.8zM2136 1122.1h15.9v1.9h-15.9zM2136 1132.2h15.9v1.9h-15.9zM2136 1140.1h15.9v1.9h-15.9zM2136 1146.1h15.9v1.9h-15.9zM2152.1 1112.1h7.7v1.9h-7.7zM2152.1 1126h7.7v1.9h-7.7zM2152.1 1136h7.7v1.9h-7.7zM2160.3 1122.1h19.6v1.9h-19.6zM2160.3 1130.1h19.6v1.9h-19.6zM2160.3 1140.1h19.6v1.9h-19.6zM2160.3 1146.1h19.6v1.9h-19.6zM2180.2 1112.1h8.3v1.9h-8.3zM2180.2 1126h8.3v1.9h-8.3zM2180.2 1136h8.3v1.9h-8.3z"/>
<path fill="#24578a" d="M282 1111.8h1.8v36.2h-1.8zM336 1111.8h1.8v36.2h-1.8zM392 1111.8h1.8v36.2h-1.8zM446 1111.8h1.8v36.2h-1.8zM500 1111.8h1.8v36.2h-1.8zM554 1111.8h1.8v36.2h-1.8zM610 1111.8h1.8v36.2h-1.8zM664 1111.8h1.8v36.2h-1.8zM718 1111.8h1.8v36.2h-1.8zM772 1111.8h1.8v36.2h-1.8zM828 1111.8h1.8v36.2h-1.8zM882 1111.8h1.8v36.2h-1.8zM936 1111.8h1.8v36.2h-1.8zM990 1111.8h1.8v36.2h-1.8zM1046 1111.8h1.8v36.2h-1.8zM1100 1111.8h1.8v36.2h-1.8zM1154 1111.8h1.8v36.2h-1.8zM1208 1111.8h1.8v36.2h-1.8zM1262 1111.8h1.8v36.2h-1.8zM1318 1111.8h1.8v36.2h-1.8zM1372 1111.8h1.8v36.2h-1.8zM1426 1111.8h1.8v36.2h-1.8zM1480 1111.8h1.8v36.2h-1.8zM1536 1111.8h1.8v36.2h-1.8zM1590 1111.8h1.8v36.2h-1.8zM1644 1111.8h1.8v36.2h-1.8zM1698 1111.8h1.8v36.2h-1.8zM1754 1111.8h1.8v36.2h-1.8zM1808 1111.8h1.8v36.2h-1.8zM1862 1111.8h1.8v36.2h-1.8zM1916 1111.8h1.8v36.2h-1.8zM1972 1111.8h1.8v36.2h-1.8zM2026 1111.8h1.8v36.2h-1.8zM2080 1111.8h1.8v36.2h-1.8zM2134 1111.8h1.8v36.2h-1.8zM772 1078h1.8v70h-1.8zM882 1078h1.8v70h-1.8z"/>
<path fill="#141414" d="M336.2 1079.8h1.8v6h-1.8zM336.2 1142h1.8v6h-1.8zM446.2 1079.8h1.8v6h-1.8zM446.2 1142h1.8v6h-1.8zM554.2 1079.8h1.8v6h-1.8zM554.2 1142h1.8v6h-1.8zM664.2 1079.8h1.8v6h-1.8zM664.2 1142h1.8v6h-1.8zM772.2 1079.8h1.8v6h-1.8zM772.2 1142h1.8v6h-1.8zM882.2 1079.8h1.8v6h-1.8zM882.2 1142h1.8v6h-1.8zM990.2 1079.8h1.8v6h-1.8zM990.2 1142h1.8v6h-1.8zM1100.2 1079.8h1.8v6h-1.8zM1100.2 1142h1.8v6h-1.8zM1208.2 1079.8h1.8v6h-1.8zM1208.2 1142h1.8v6h-1.8zM1318.2 1079.8h1.8v6h-1.8zM1318.2 1142h1.8v6h-1.8zM1426.2 1079.8h1.8v6h-1.8zM1426.2 1142h1.8v6h-1.8zM1536.2 1079.8h1.8v6h-1.8zM1536.2 1142h1.8v6h-1.8zM1644.2 1079.8h1.8v6h-1.8zM1644.2 1142h1.8v6h-1.8zM1754.2 1079.8h1.8v6h-1.8zM1754.2 1142h1.8v6h-1.8zM1862.2 1079.8h1.8v6h-1.8zM1862.2 1142h1.8v6h-1.8zM1972.2 1079.8h1.8v6h-1.8zM1972.2 1142h1.8v6h-1.8zM2080.2 1079.8h1.8v6h-1.8zM2080.2 1142h1.8v6h-1.8z"/>
<path fill="#7dfbae" d="M664 1152h108v70h-108zM772 1152h110v70h-110zM1536 1152h108v70h-108zM1644 1152h110v70h-110z"/>
<path fill="#3f8c60" d="M664 1152h108v1.8h-108zM664 1152h1.8v70h-1.8zM664 1184h108v1.8h-108zM718 1185.8h1.8v36.2h-1.8zM772 1152h110v1.8h-110zM772 1152h1.8v70h-1.8zM772 1184h110v1.8h-110zM828 1185.8h1.8v36.2h-1.8zM1536 1152h108v1.8h-108zM1536 1152h1.8v70h-1.8zM1536 1184h108v1.8h-108zM1590 1185.8h1.8v36.2h-1.8zM1644 1152h110v1.8h-110zM1644 1152h1.8v70h-1.8zM1644 1184h110v1.8h-110zM1698 1185.8h1.8v36.2h-1.8z"/>
<path fill="#0e1a12" d="M683 1202.2h1.6v1.6h-1.6zM687 1202.2h1.6v1.6h-1.6zM691 1202.2h1.6v1.6h-1.6zM678 1210.1h4v1.6h-4zM692 1210.1h11.7v1.6h-11.7zM706.3 1210.1h3.4v1.6h-3.4zM720 1210.1h12v1.6h-12zM684.4 1212h7.3v1.6h-7.3zM710.6 1212h9v1.6h-9zM678 1216.2h6v1.6h-6zM690.4 1216.2h19.3v1.6h-19.3zM718.3 1216.2h13.7v1.6h-13.7zM710.6 1220.2h8.6v1.6h-8.6zM792.5 1186.1h7.3v1.6h-7.3zM788.2 1192.2h3.8v1.6h-3.8zM800.2 1192.2h3.8v1.6h-3.8zM806.2 1192.2h11.6v1.6h-11.6zM828.5 1192.2h9.5v1.6h-9.5zM840 1192.2h1.8v1.6h-1.8zM792.5 1196.2h9.5v1.6h-9.5zM820.4 1196.2h7.6v1.6h-7.6zM800.2 1198.1h19.8v1.6h-19.8zM786 1200.2h6v1.6h-6zM828.5 1200.2h13.3v1.6h-13.3zM819 1202.2h1.6v1.6h-1.6zM823 1202.2h1.6v1.6h-1.6zM826.8 1202.2h1.6v1.6h-1.6zM1555 1202.2h1.6v1.6h-1.6zM1559 1202.2h1.6v1.6h-1.6zM1563 1202.2h1.6v1.6h-1.6zM1550 1210.1h4v1.6h-4zM1564 1210.1h11.7v1.6h-11.7zM1578.3 1210.1h3.4v1.6h-3.4zM1592 1210.1h12v1.6h-12zM1556.4 1212h7.3v1.6h-7.3zM1582.6 1212h9v1.6h-9zM1550 1216.2h6v1.6h-6zM1562.4 1216.2h19.3v1.6h-19.3zM1590.3 1216.2h13.7v1.6h-13.7zM1582.6 1220.2h8.6v1.6h-8.6zM1664.5 1186.1h7.3v1.6h-7.3zM1660.2 1192.2h3.8v1.6h-3.8zM1672.2 1192.2h3.8v1.6h-3.8zM1678.2 1192.2h11.6v1.6h-11.6zM1700.5 1192.2h9.5v1.6h-9.5zM1712 1192.2h1.8v1.6h-1.8zM1664.5 1196.2h9.5v1.6h-9.5zM1692.4 1196.2h7.6v1.6h-7.6zM1672.2 1198.1h19.8v1.6h-19.8zM1658 1200.2h6v1.6h-6zM1700.5 1200.2h13.3v1.6h-13.3zM1691 1202.2h1.6v1.6h-1.6zM1695 1202.2h1.6v1.6h-1.6zM1698.8 1202.2h1.6v1.6h-1.6z"/>
<path fill="#4aa0e8" d="M118 1226h110v70h-110z"/>
<path fill="#24578a" d="M118 1226h110v1.8h-110zM118 1226h1.8v70h-1.8zM118 1258h110v1.8h-110zM174 1259.8h1.8v36.2h-1.8z"/>
<path fill="#14181a" d="M119.8 1268.1h108.2v1.9h-108.2zM119.8 1286h108.2v2h-108.2z"/>
<path fill="#1a2328" d="M188.4 1269.05Q210.18 1268.75 228 1266.35V1271.65Q210.18 1269.35 188.4 1269.05z"/>
<path fill="#1a2328" d="M188.4 1287Q210.18 1286.7 228 1284V1289.8Q210.18 1287.3 188.4 1287z"/>
<path fill="#4aa0e8" d="M1426 1226h110v70h-110z"/>
<path fill="#24578a" d="M1426 1226h110v1.8h-110zM1426 1226h1.8v70h-1.8zM1426 1258h110v1.8h-110zM1480 1259.8h1.8v36.2h-1.8z"/>
<path fill="#14181a" d="M1427.8 1268.1h108.2v1.9h-108.2zM1427.8 1286h108.2v2h-108.2z"/>
<path fill="#1a2328" d="M1496.4 1269.05Q1518.18 1268.75 1536 1266.35V1271.65Q1518.18 1269.35 1496.4 1269.05z"/>
<path fill="#1a2328" d="M1496.4 1287Q1518.18 1286.7 1536 1284V1289.8Q1518.18 1287.3 1496.4 1287z"/>
<path fill="#4aa0e8" d="M2190 1226h108v70h-108z"/>
<path fill="#24578a" d="M2190 1226h108v1.8h-108zM2190 1226h1.8v70h-1.8zM2190 1258h108v1.8h-108zM2244 1259.8h1.8v36.2h-1.8z"/>
<path fill="#14181a" d="M2191.8 1268.1h106.2v1.9h-106.2zM2191.8 1286h106.2v2h-106.2z"/>
<path fill="#1a2328" d="M2230.68 1269.05Q2209.3 1268.75 2191.8 1266.35V1271.65Q2209.3 1269.35 2230.68 1269.05z"/>
<path fill="#1a2328" d="M2230.68 1287Q2209.3 1286.7 2191.8 1284V1289.8Q2209.3 1287.3 2230.68 1287z"/>
<path fill="#377cc0" d="M446 1300h218v70h-218zM1318 1300h218v70h-218z"/>
<path fill="#22507c" d="M446 1300h218v1.8h-218zM446 1300h1.8v70h-1.8zM446 1332h218v1.8h-218zM500 1333.8h1.8v36.2h-1.8zM554 1333.8h1.8v36.2h-1.8zM610 1333.8h1.8v36.2h-1.8zM1318 1300h218v1.8h-218zM1318 1300h1.8v70h-1.8zM1318 1332h218v1.8h-218zM1372 1333.8h1.8v36.2h-1.8zM1426 1333.8h1.8v36.2h-1.8zM1480 1333.8h1.8v36.2h-1.8z"/>
<path fill="#141414" d="M554.2 1301.8h1.8v6h-1.8zM554.2 1364h1.8v6h-1.8zM1426.2 1301.8h1.8v6h-1.8zM1426.2 1364h1.8v6h-1.8z"/>
<path fill="#24568a" d="M448 1344.1h15.9v1.9h-15.9zM448 1354.2h15.9v1.9h-15.9zM448 1362.1h15.9v1.9h-15.9zM448 1368.1h15.9v1.9h-15.9zM464.1 1334.1h7.7v1.9h-7.7zM464.1 1348h7.7v1.9h-7.7zM464.1 1358h7.7v1.9h-7.7zM472.3 1344.1h19.6v1.9h-19.6zM472.3 1352.1h19.6v1.9h-19.6zM472.3 1362.1h19.6v1.9h-19.6zM472.3 1368.1h19.6v1.9h-19.6zM492.2 1334.1h7.8v1.9h-7.8zM492.2 1348h7.8v1.9h-7.8zM492.2 1358h7.8v1.9h-7.8zM502 1344.1h15.9v1.9h-15.9zM502 1354.2h15.9v1.9h-15.9zM502 1362.1h15.9v1.9h-15.9zM502 1368.1h15.9v1.9h-15.9zM518.1 1334.1h7.7v1.9h-7.7zM518.1 1348h7.7v1.9h-7.7zM518.1 1358h7.7v1.9h-7.7zM526.3 1344.1h19.6v1.9h-19.6zM526.3 1352.1h19.6v1.9h-19.6zM526.3 1362.1h19.6v1.9h-19.6zM526.3 1368.1h19.6v1.9h-19.6zM546.2 1334.1h7.8v1.9h-7.8zM546.2 1348h7.8v1.9h-7.8zM546.2 1358h7.8v1.9h-7.8zM556 1344.1h15.9v1.9h-15.9zM556 1354.2h15.9v1.9h-15.9zM556 1362.1h15.9v1.9h-15.9zM556 1368.1h15.9v1.9h-15.9zM572.1 1334.1h7.7v1.9h-7.7zM572.1 1348h7.7v1.9h-7.7zM572.1 1358h7.7v1.9h-7.7zM580.3 1344.1h19.6v1.9h-19.6zM580.3 1352.1h19.6v1.9h-19.6zM580.3 1362.1h19.6v1.9h-19.6zM580.3 1368.1h19.6v1.9h-19.6zM600.2 1334.1h8.3v1.9h-8.3zM600.2 1348h8.3v1.9h-8.3zM600.2 1358h8.3v1.9h-8.3zM612 1344.1h15.9v1.9h-15.9zM612 1354.2h15.9v1.9h-15.9zM612 1362.1h15.9v1.9h-15.9zM612 1368.1h15.9v1.9h-15.9zM628.1 1334.1h7.7v1.9h-7.7zM628.1 1348h7.7v1.9h-7.7zM628.1 1358h7.7v1.9h-7.7zM636.3 1344.1h19.6v1.9h-19.6zM636.3 1352.1h19.6v1.9h-19.6zM636.3 1362.1h19.6v1.9h-19.6zM636.3 1368.1h19.6v1.9h-19.6zM656.2 1334.1h7.8v1.9h-7.8zM656.2 1348h7.8v1.9h-7.8zM656.2 1358h7.8v1.9h-7.8zM1320 1344.1h15.9v1.9h-15.9zM1320 1354.2h15.9v1.9h-15.9zM1320 1362.1h15.9v1.9h-15.9zM1320 1368.1h15.9v1.9h-15.9zM1336.1 1334.1h7.7v1.9h-7.7zM1336.1 1348h7.7v1.9h-7.7zM1336.1 1358h7.7v1.9h-7.7zM1344.3 1344.1h19.6v1.9h-19.6zM1344.3 1352.1h19.6v1.9h-19.6zM1344.3 1362.1h19.6v1.9h-19.6zM1344.3 1368.1h19.6v1.9h-19.6zM1364.2 1334.1h7.8v1.9h-7.8zM1364.2 1348h7.8v1.9h-7.8zM1364.2 1358h7.8v1.9h-7.8zM1374 1344.1h15.9v1.9h-15.9zM1374 1354.2h15.9v1.9h-15.9zM1374 1362.1h15.9v1.9h-15.9zM1374 1368.1h15.9v1.9h-15.9zM1390.1 1334.1h7.7v1.9h-7.7zM1390.1 1348h7.7v1.9h-7.7zM1390.1 1358h7.7v1.9h-7.7zM1398.3 1344.1h19.6v1.9h-19.6zM1398.3 1352.1h19.6v1.9h-19.6zM1398.3 1362.1h19.6v1.9h-19.6zM1398.3 1368.1h19.6v1.9h-19.6zM1418.2 1334.1h7.8v1.9h-7.8zM1418.2 1348h7.8v1.9h-7.8zM1418.2 1358h7.8v1.9h-7.8zM1428 1344.1h15.9v1.9h-15.9zM1428 1354.2h15.9v1.9h-15.9zM1428 1362.1h15.9v1.9h-15.9zM1428 1368.1h15.9v1.9h-15.9zM1444.1 1334.1h7.7v1.9h-7.7zM1444.1 1348h7.7v1.9h-7.7zM1444.1 1358h7.7v1.9h-7.7zM1452.3 1344.1h19.6v1.9h-19.6zM1452.3 1352.1h19.6v1.9h-19.6zM1452.3 1362.1h19.6v1.9h-19.6zM1452.3 1368.1h19.6v1.9h-19.6zM1472.2 1334.1h7.8v1.9h-7.8zM1472.2 1348h7.8v1.9h-7.8zM1472.2 1358h7.8v1.9h-7.8zM1482 1344.1h15.9v1.9h-15.9zM1482 1354.2h15.9v1.9h-15.9zM1482 1362.1h15.9v1.9h-15.9zM1482 1368.1h15.9v1.9h-15.9zM1498.1 1334.1h7.7v1.9h-7.7zM1498.1 1348h7.7v1.9h-7.7zM1498.1 1358h7.7v1.9h-7.7zM1506.3 1344.1h19.6v1.9h-19.6zM1506.3 1352.1h19.6v1.9h-19.6zM1506.3 1362.1h19.6v1.9h-19.6zM1506.3 1368.1h19.6v1.9h-19.6zM1526.2 1334.1h8.3v1.9h-8.3zM1526.2 1348h8.3v1.9h-8.3zM1526.2 1358h8.3v1.9h-8.3z"/>
<path fill="#ea4a41" d="M228 1374h218v14h-218zM664 1374h436v14h-436zM1536 1374h654v14h-654z"/>
<path fill="#8a2b26" d="M228 1374h218v1.8h-218zM228 1374h1.8v14h-1.8zM664 1374h436v1.8h-436zM664 1374h1.8v14h-1.8zM1536 1374h654v1.8h-654zM1536 1374h1.8v14h-1.8z"/>
<path fill="#141414" d="M336.2 1375.8h1.8v6h-1.8zM772.2 1375.8h1.8v6h-1.8zM882.2 1375.8h1.8v6h-1.8zM990.2 1375.8h1.8v6h-1.8zM1644.2 1375.8h1.8v6h-1.8zM1754.2 1375.8h1.8v6h-1.8zM1862.2 1375.8h1.8v6h-1.8zM1972.2 1375.8h1.8v6h-1.8zM2080.2 1375.8h1.8v6h-1.8z"/>
<path fill="#232323" d="M10 1388h2608v6h-2608z"/>
<path fill="#3f3f3f" d="M12 1394h216v34h-216zM446 1394h218v34h-218zM882 1394h218v34h-218zM1318 1394h218v34h-218zM1754 1394h218v34h-218zM2190 1394h216v34h-216z"/>
<path fill="#444444" d="M228 1394h218v34h-218zM664 1394h218v34h-218zM1100 1394h218v34h-218zM1536 1394h218v34h-218zM1972 1394h218v34h-218zM2406 1394h16v34h-16z"/>
<path fill="#2b2b2b" d="M64 1394h2v34h-2zM118 1394h2v34h-2zM174 1394h2v34h-2zM228 1394h2v34h-2zM282 1394h2v34h-2zM336 1394h2v34h-2zM392 1394h2v34h-2zM446 1394h2v34h-2zM500 1394h2v34h-2zM554 1394h2v34h-2zM610 1394h2v34h-2zM664 1394h2v34h-2zM718 1394h2v34h-2zM772 1394h2v34h-2zM828 1394h2v34h-2zM882 1394h2v34h-2zM936 1394h2v34h-2zM990 1394h2v34h-2zM1046 1394h2v34h-2zM1100 1394h2v34h-2zM1154 1394h2v34h-2zM1208 1394h2v34h-2zM1262 1394h2v34h-2zM1318 1394h2v34h-2zM1372 1394h2v34h-2zM1426 1394h2v34h-2zM1480 1394h2v34h-2zM1536 1394h2v34h-2zM1590 1394h2v34h-2zM1644 1394h2v34h-2zM1698 1394h2v34h-2zM1754 1394h2v34h-2zM1808 1394h2v34h-2zM1862 1394h2v34h-2zM1916 1394h2v34h-2zM1972 1394h2v34h-2zM2026 1394h2v34h-2zM2080 1394h2v34h-2zM2134 1394h2v34h-2zM2190 1394h2v34h-2zM2244 1394h2v34h-2zM2298 1394h2v34h-2zM2352 1394h2v34h-2z"/>
<path fill="#232323" d="M10 1428h2608v4h-2608z"/>
<path fill="#9b9b9b" d="M10 52h2v1342h-2z"/>
<path fill="#c9f7ff" d="M10 1394h2v34h-2z"/>
<path fill="#9a9a9a" d="M2408 52h2v1380h-2z"/>
<path fill="#232323" d="M2422 104h196v1284h-196z"/>
<path fill="#474747" d="M2616 104h2v1324h-2z"/>
<path fill="#ea4bd2" d="M2426 104h186v34h-186z"/>
<path fill="#6fe7fb" d="M2426 142h186v34h-186zM2426 180h186v34h-186zM2426 366h186v34h-186zM2426 404h186v34h-186zM2426 442h186v34h-186zM2426 480h186v34h-186zM2426 518h186v34h-186zM2426 556h186v34h-186zM2426 594h186v34h-186zM2426 632h186v34h-186zM2426 670h186v70h-186zM2426 744h186v70h-186z"/>
<path fill="#68c23b" d="M2426 218h186v70h-186zM2426 292h186v70h-186z"/>
<path fill="#e67430" d="M2426 818h186v70h-186zM2426 892h186v34h-186z"/>
<path fill="#f0aa4b" d="M2426 930h186v70h-186z"/>
<path fill="#fcf160" d="M2426 1004h186v70h-186z"/>
<path fill="#4aa0e8" d="M2426 1078h186v70h-186zM2426 1226h186v70h-186z"/>
<path fill="#7dfbae" d="M2426 1152h186v70h-186z"/>
<path fill="#377cc0" d="M2426 1300h186v70h-186z"/>
<path fill="#ea4a41" d="M2426 1374h186v14h-186z"/>
<path fill="#b9dde8" d="M2426 1394h186v34h-186z"/>
<path fill="#7f7f7f" d="M46.08 1432h2v4h-2zM81.26 1432h2v4h-2zM116.44 1432h2v4h-2zM151.62 1432h2v4h-2zM186.8 1432h2v4h-2zM221.98 1432h2v16h-2zM221.98 1446h4v2h-4zM257.16 1432h2v4h-2zM292.34 1432h2v4h-2zM327.52 1432h2v4h-2zM362.7 1432h2v4h-2zM397.88 1432h2v4h-2zM433.05 1432h2v16h-2zM433.05 1446h4v2h-4zM468.23 1432h2v4h-2zM503.41 1432h2v4h-2zM538.59 1432h2v4h-2zM573.77 1432h2v4h-2zM608.95 1432h2v4h-2zM644.13 1432h2v16h-2zM644.13 1446h4v2h-4zM679.31 1432h2v4h-2zM714.49 1432h2v4h-2zM749.67 1432h2v4h-2zM784.85 1432h2v4h-2zM820.03 1432h2v4h-2zM855.21 1432h2v16h-2zM855.21 1446h4v2h-4zM890.39 1432h2v4h-2zM925.57 1432h2v4h-2zM960.75 1432h2v4h-2zM995.93 1432h2v4h-2zM1031.11 1432h2v4h-2zM1066.29 1432h2v16h-2zM1066.29 1446h4v2h-4zM1101.47 1432h2v4h-2zM1136.65 1432h2v4h-2zM1171.83 1432h2v4h-2zM1207.01 1432h2v4h-2zM1242.19 1432h2v4h-2zM1277.36 1432h2v16h-2zM1277.36 1446h4v2h-4zM1312.54 1432h2v4h-2zM1347.72 1432h2v4h-2zM1382.9 1432h2v4h-2zM1418.08 1432h2v4h-2zM1453.26 1432h2v4h-2zM1488.44 1432h2v16h-2zM1488.44 1446h4v2h-4zM1523.62 1432h2v4h-2zM1558.8 1432h2v4h-2zM1593.98 1432h2v4h-2zM1629.16 1432h2v4h-2zM1664.34 1432h2v4h-2zM1699.52 1432h2v16h-2zM1699.52 1446h4v2h-4zM1734.7 1432h2v4h-2zM1769.88 1432h2v4h-2zM1805.06 1432h2v4h-2zM1840.24 1432h2v4h-2zM1875.42 1432h2v4h-2zM1910.6 1432h2v16h-2zM1910.6 1446h4v2h-4zM1945.78 1432h2v4h-2zM1980.96 1432h2v4h-2zM2016.14 1432h2v4h-2zM2051.32 1432h2v4h-2zM2086.49 1432h2v4h-2zM2121.67 1432h2v16h-2zM2121.67 1446h4v2h-4zM2156.85 1432h2v4h-2zM2192.03 1432h2v4h-2zM2227.21 1432h2v4h-2zM2262.39 1432h2v4h-2zM2297.57 1432h2v4h-2zM2332.75 1432h2v16h-2zM2332.75 1446h4v2h-4zM2367.93 1432h2v4h-2zM2403.11 1432h2v4h-2zM10 1446h4v2h-4z"/>
<path d="M10 1433.8V1441.6H18.2z" fill="#4cc0d8"/>

<text x="453" y="129.2" class="cn">Vocal</text>
<text x="889" y="129.2" class="cn">Vocal</text>
<text x="1325" y="129.2" class="cn">Vocal</text>
<text x="1761" y="129.2" class="cn">Vocal</text>
<text x="2362.5" y="1420" class="sig" textLength="53" lengthAdjust="spacingAndGlyphs">4/1</text>
<text x="16.2" y="1454.3" class="rn">0:00</text>
<text x="227.48" y="1454.3" class="rn">0:30</text>
<text x="438.55" y="1454.3" class="rn">1:00</text>
<text x="649.63" y="1454.3" class="rn">1:30</text>
<text x="860.71" y="1454.3" class="rn">2:00</text>
<text x="1071.79" y="1454.3" class="rn">2:30</text>
<text x="1282.86" y="1454.3" class="rn">3:00</text>
<text x="1493.94" y="1454.3" class="rn">3:30</text>
<text x="1705.02" y="1454.3" class="rn">4:00</text>
<text x="1916.1" y="1454.3" class="rn">4:30</text>
<text x="2127.17" y="1454.3" class="rn">5:00</text>
<text x="2338.25" y="1454.3" class="rn">5:30</text>
<clipPath id="hc"><rect x="2420" y="0" width="198" height="1388"/></clipPath>
<g clip-path="url(#hc)"><circle cx="2443" cy="121.2" r="11.9" fill="none" stroke="#381232" stroke-width="1.8"/>
<path d="M2440 114.8L2449.3 121.2L2440 127.6z" fill="#381232"/>
<text x="2465" y="128.9" class="hn" fill="#381232">Vocal</text>
<circle cx="2443" cy="159.2" r="11.9" fill="none" stroke="#1a373c" stroke-width="1.8"/>
<path d="M2440 152.8L2449.3 159.2L2440 165.6z" fill="#1a373c"/>
<text x="2465" y="166.9" class="hn" fill="#1a373c">Kick 1</text>
<circle cx="2443" cy="197.2" r="11.9" fill="none" stroke="#1a373c" stroke-width="1.8"/>
<path d="M2440 190.8L2449.3 197.2L2440 203.6z" fill="#1a373c"/>
<text x="2465" y="204.9" class="hn" fill="#1a373c">Kick 2</text>
<circle cx="2443" cy="235.2" r="11.9" fill="none" stroke="#182e0e" stroke-width="1.8"/>
<path d="M2436.4 232H2449.8L2443.1 241.4z" fill="#182e0e"/>
<text x="2465" y="242.9" class="hn" fill="#182e0e">Bass Sub</text>
<circle cx="2443" cy="309.2" r="11.9" fill="none" stroke="#182e0e" stroke-width="1.8"/>
<path d="M2436.4 306H2449.8L2443.1 315.4z" fill="#182e0e"/>
<text x="2465" y="316.9" class="hn" fill="#182e0e">Bass Mid</text>
<circle cx="2443" cy="383.2" r="11.9" fill="none" stroke="#1a373c" stroke-width="1.8"/>
<path d="M2440 376.8L2449.3 383.2L2440 389.6z" fill="#1a373c"/>
<text x="2465" y="390.9" class="hn" fill="#1a373c">Hat 1</text>
<circle cx="2443" cy="421.2" r="11.9" fill="none" stroke="#1a373c" stroke-width="1.8"/>
<path d="M2440 414.8L2449.3 421.2L2440 427.6z" fill="#1a373c"/>
<text x="2465" y="428.9" class="hn" fill="#1a373c">Hat 2</text>
<circle cx="2443" cy="459.2" r="11.9" fill="none" stroke="#1a373c" stroke-width="1.8"/>
<path d="M2440 452.8L2449.3 459.2L2440 465.6z" fill="#1a373c"/>
<text x="2465" y="466.9" class="hn" fill="#1a373c">Hat 3</text>
<circle cx="2443" cy="497.2" r="11.9" fill="none" stroke="#1a373c" stroke-width="1.8"/>
<path d="M2440 490.8L2449.3 497.2L2440 503.6z" fill="#1a373c"/>
<text x="2465" y="504.9" class="hn" fill="#1a373c">Shaer Loop 1</text>
<circle cx="2443" cy="535.2" r="11.9" fill="none" stroke="#1a373c" stroke-width="1.8"/>
<path d="M2440 528.8L2449.3 535.2L2440 541.6z" fill="#1a373c"/>
<text x="2465" y="542.9" class="hn" fill="#1a373c">Perc Delay</text>
<circle cx="2443" cy="573.2" r="11.9" fill="none" stroke="#1a373c" stroke-width="1.8"/>
<path d="M2440 566.8L2449.3 573.2L2440 579.6z" fill="#1a373c"/>
<text x="2465" y="580.9" class="hn" fill="#1a373c">Hat 4</text>
<circle cx="2443" cy="611.2" r="11.9" fill="none" stroke="#1a373c" stroke-width="1.8"/>
<path d="M2440 604.8L2449.3 611.2L2440 617.6z" fill="#1a373c"/>
<text x="2465" y="618.9" class="hn" fill="#1a373c">Noise Hat</text>
<circle cx="2443" cy="649.2" r="11.9" fill="none" stroke="#1a373c" stroke-width="1.8"/>
<path d="M2440 642.8L2449.3 649.2L2440 655.6z" fill="#1a373c"/>
<text x="2465" y="656.9" class="hn" fill="#1a373c">Noise Hit</text>
<circle cx="2443" cy="687.2" r="11.9" fill="none" stroke="#1a373c" stroke-width="1.8"/>
<path d="M2436.4 684H2449.8L2443.1 693.4z" fill="#1a373c"/>
<text x="2465" y="694.9" class="hn" fill="#1a373c">Noise Roll</text>
<circle cx="2443" cy="761.2" r="11.9" fill="none" stroke="#1a373c" stroke-width="1.8"/>
<path d="M2436.4 758H2449.8L2443.1 767.4z" fill="#1a373c"/>
<text x="2465" y="768.9" class="hn" fill="#1a373c">Bell</text>
<circle cx="2443" cy="835.2" r="11.9" fill="none" stroke="#371b0b" stroke-width="1.8"/>
<path d="M2436.4 832H2449.8L2443.1 841.4z" fill="#371b0b"/>
<text x="2465" y="842.9" class="hn" fill="#371b0b">Pluck Sine 1</text>
<circle cx="2443" cy="909.2" r="11.9" fill="none" stroke="#371b0b" stroke-width="1.8"/>
<path d="M2440 902.8L2449.3 909.2L2440 915.6z" fill="#371b0b"/>
<text x="2465" y="916.9" class="hn" fill="#371b0b">Pluck Sine 2</text>
<circle cx="2443" cy="947.2" r="11.9" fill="none" stroke="#392812" stroke-width="1.8"/>
<path d="M2436.4 944H2449.8L2443.1 953.4z" fill="#392812"/>
<text x="2465" y="954.9" class="hn" fill="#392812">Lead Astra</text>
<circle cx="2443" cy="1021.2" r="11.9" fill="none" stroke="#3c3917" stroke-width="1.8"/>
<path d="M2436.4 1018H2449.8L2443.1 1027.4z" fill="#3c3917"/>
<text x="2465" y="1028.9" class="hn" fill="#3c3917">Drop Chord</text>
<circle cx="2443" cy="1095.2" r="11.9" fill="none" stroke="#112637" stroke-width="1.8"/>
<path d="M2436.4 1092H2449.8L2443.1 1101.4z" fill="#112637"/>
<text x="2465" y="1102.9" class="hn" fill="#112637">Piano</text>
<circle cx="2443" cy="1169.2" r="11.9" fill="none" stroke="#1e3c29" stroke-width="1.8"/>
<path d="M2436.4 1166H2449.8L2443.1 1175.4z" fill="#1e3c29"/>
<text x="2465" y="1176.9" class="hn" fill="#1e3c29">Synth Dyson</text>
<circle cx="2443" cy="1243.2" r="11.9" fill="none" stroke="#112637" stroke-width="1.8"/>
<path d="M2436.4 1240H2449.8L2443.1 1249.4z" fill="#112637"/>
<text x="2465" y="1250.9" class="hn" fill="#112637">Piano Reverse</text>
<circle cx="2443" cy="1317.2" r="11.9" fill="none" stroke="#0d1d2e" stroke-width="1.8"/>
<path d="M2436.4 1314H2449.8L2443.1 1323.4z" fill="#0d1d2e"/>
<text x="2465" y="1324.9" class="hn" fill="#0d1d2e">Piano 2</text>
<circle cx="2443" cy="1391.2" r="11.9" fill="none" stroke="#38110f" stroke-width="1.8"/>
<path d="M2436.4 1388H2449.8L2443.1 1397.4z" fill="#38110f"/>
<text x="2465" y="1398.9" class="hn" fill="#38110f">Synth Sable</text></g>
<circle cx="2443" cy="1411" r="11.9" fill="none" stroke="#0a0a0a" stroke-width="1.9"/>
<path d="M2440 1404.6L2449.3 1411L2440 1417.4z" fill="#0a0a0a"/>
<text x="2469.4" y="1418.3" class="hn" fill="#0a0a0a">Main</text>
<rect x="2432" y="26.2" width="57.8" height="25.5" rx="12.75" fill="#1e1e1e" stroke="#181818" stroke-width="1"/>
<text x="2444" y="46.3" class="btn">Set</text>
<rect x="2513" y="27" width="44" height="24" fill="#1e1e1e" stroke="#141414" stroke-width="1.6"/>
<path d="M2531 43.2L2539 35" stroke="#c2c2c2" stroke-width="2.2"/><circle cx="2530.9" cy="43.2" r="3.2" fill="#c2c2c2"/><circle cx="2539" cy="34.9" r="3.2" fill="#c2c2c2"/>
<rect x="2567" y="27" width="44" height="24" fill="#db7050" stroke="#141414" stroke-width="1.6"/>
<path d="M2586.3 38.6V36.2a3.8 3.8 0 0 1 7.6 0V38.6" fill="none" stroke="#0a0a0a" stroke-width="2.2"/><rect x="2582" y="38.1" width="14" height="7.8" fill="#0a0a0a"/>
<circle cx="2445" cy="74.8" r="12.3" fill="#1e1e1e" stroke="#191919" stroke-width="1.2"/>
<circle cx="2477.1" cy="74.8" r="12.3" fill="#1e1e1e" stroke="#191919" stroke-width="1.2"/>
<path d="M2438.2 74.8L2445.2 69V80.6z M2444 73.8H2452V75.8H2444z" fill="#8a8a8a"/>
<path d="M2483.9 74.8L2476.9 69V80.6z M2470 73.8H2478V75.8H2470z" fill="#cfcfcf"/>
<rect x="2427.1" y="1441" width="27.9" height="23.9" fill="#f2b468" stroke="#0d0d0d" stroke-width="1.7"/>
<path d="M2432.1 1450.2h1.8v5.7h-1.8z M2436.1 1446h1.9v13.8h-1.9z M2440.1 1444h1.9v17.9h-1.9z M2444.1 1448.1h1.9v9.6h-1.9z M2448.1 1450.2h1.8v5.7h-1.8z" fill="#050505"/>
<rect x="2462.9" y="1441" width="68.3" height="23.9" fill="#202020" stroke="#141414" stroke-width="1.7"/>
<rect x="2464" y="1441.9" width="20.1" height="22.1" fill="#2f7080"/>
<text x="2469.6" y="1460.1" class="ctl">1.00x</text>
<rect x="2544.9" y="1441" width="28.3" height="23.9" fill="#1f1f1f" stroke="#141414" stroke-width="1.7"/>
<text x="2551.6" y="1460.2" class="ctl">H</text>
<rect x="2580.9" y="1441" width="28.3" height="23.9" fill="#f2b468" stroke="#0d0d0d" stroke-width="1.7"/>
<text x="2585.7" y="1460.2" class="ctl" fill="#050505" style="fill:#050505">W</text>
</svg>
</body></html>
